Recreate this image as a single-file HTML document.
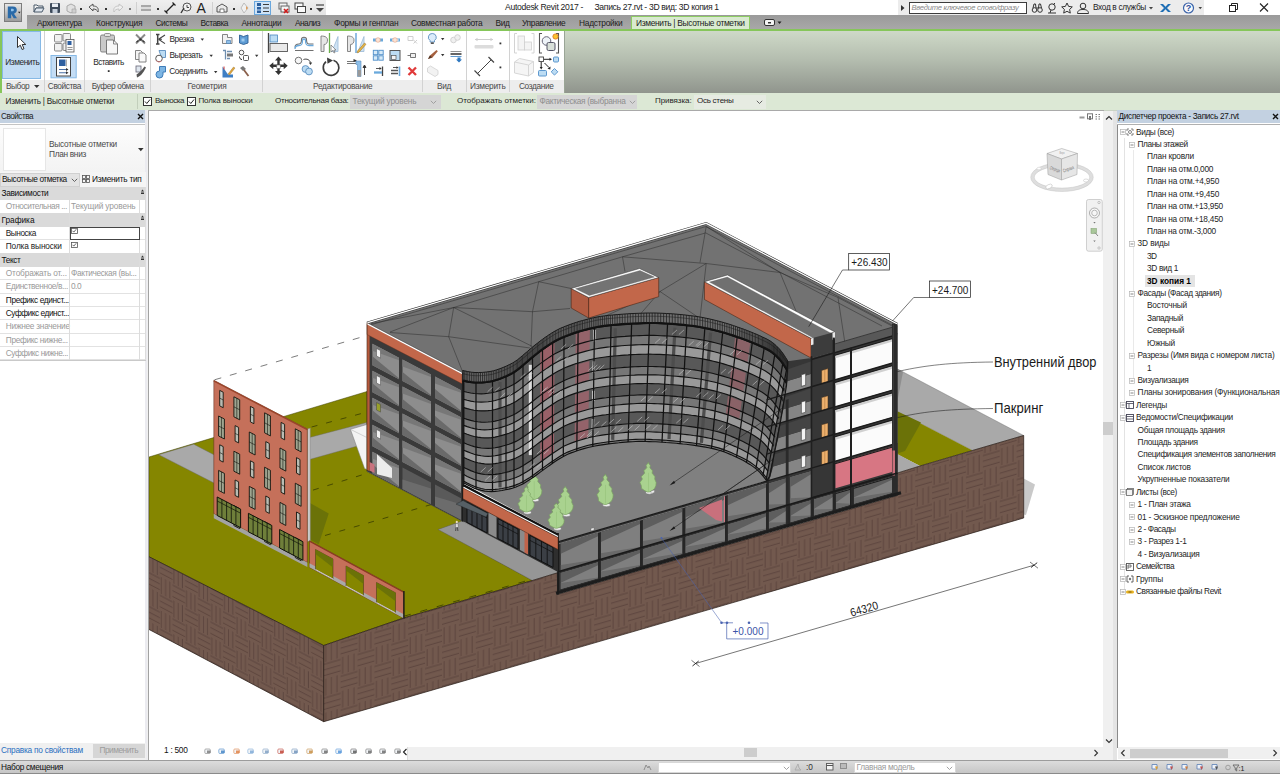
<!DOCTYPE html>
<html lang="ru">
<head>
<meta charset="utf-8">
<title>Autodesk Revit 2017</title>
<style>
*{box-sizing:border-box;margin:0;padding:0}
html,body{width:1280px;height:774px;overflow:hidden;background:#fff}
body{font-family:"Liberation Sans",sans-serif;font-size:8px;color:#1e1e1e;position:relative}
.abs{position:absolute}
.t{position:absolute;white-space:nowrap;line-height:1.12}
svg{overflow:visible}
</style>
</head>
<body>
<svg class="abs" style="left:149px;top:110.500px;overflow:hidden" width="954.300" height="636" viewBox="149 110.500 954.300 636">
<polygon points="1023.7,478.0 1035.0,484.0 1026.0,514.5 1023.7,514.0" fill="#c9c9c9" />
<polygon points="149.0,456.5 367.0,391.0 367.0,471.0 463.0,521.0 440.0,529.0 532.5,580.0 403.7,617.5 323.7,645.0 149.0,556.2" fill="#858600" stroke="#3a3d00" stroke-width="0.5" stroke-linejoin="round" />
<polygon points="158.7,454.2 193.7,443.7 214.5,454.6 214.5,482.7" fill="#a9a9a9" stroke="#666" stroke-width="0.4" stroke-linejoin="round" />
<polygon points="309.5,437.0 366.5,422.0 366.5,443.0 309.5,459.0" fill="#a9a9a9" stroke="#666" stroke-width="0.4" stroke-linejoin="round" />
<polygon points="350.4,428.8 366.8,424.0 366.8,469.0 364.6,468.0" fill="#f4f4f4" stroke="#777" stroke-width="0.5" stroke-linejoin="round" />
<polyline points="350.4,428.8 366.8,437.0" fill="none" stroke="#999" stroke-width="0.4" />
<polyline points="311.6,426.5 366.0,411.8" fill="none" stroke="#2d3000" stroke-width="0.7" stroke-dasharray="6 9"/>
<polyline points="313.0,489.6 368.5,472.4" fill="none" stroke="#2d3000" stroke-width="0.7" stroke-dasharray="6 9"/>
<polyline points="325.0,535.0 440.0,501.5" fill="none" stroke="#2d3000" stroke-width="0.7" stroke-dasharray="6 9"/>
<polyline points="404.0,617.0 532.0,580.0" fill="none" stroke="#2d3000" stroke-width="0.7" stroke-dasharray="7 10" transform="translate(0,-1.3)"/>
<polygon points="438.0,529.0 462.0,520.5 557.5,570.0 557.5,572.3 532.5,580.0" fill="#969696" stroke="#555" stroke-width="0.4" stroke-linejoin="round" />
<polygon points="897.5,368.5 1023.7,435.0 972.5,450.0 897.5,411.0" fill="#a9a9a9" stroke="#666" stroke-width="0.4" stroke-linejoin="round" />
<polygon points="897.5,411.0 972.5,450.0 920.0,465.5 897.5,454.0" fill="#858600" />
<polygon points="897.5,411.0 921.0,422.0 905.0,450.5 897.5,453.0" fill="#6b7208" />
<polygon points="897.5,453.5 920.0,465.5 897.5,472.5" fill="#a9a9a9" />
<polygon points="897.5,368.5 903.0,371.5 897.5,400.0" fill="#8e8e8e" />
<defs><pattern id="hR" patternUnits="userSpaceOnUse" width="33.8" height="33.8" patternTransform="matrix(1 -0.291 0 1 323.7 645)"><rect width="33.8" height="33.8" fill="#72594e"/><path d="M2.03 0.00v16.9 M7.66 0.00v16.9 M13.29 0.00v16.9 M16.90 2.03h16.9 M16.90 7.66h16.9 M16.90 13.29h16.9 M0.00 18.93h16.9 M0.00 24.56h16.9 M0.00 30.19h16.9 M18.93 16.90v16.9 M24.56 16.90v16.9 M30.19 16.90v16.9" stroke="#57403a" stroke-width="0.8" fill="none"/></pattern><pattern id="hL" patternUnits="userSpaceOnUse" width="25.2" height="33.8" patternTransform="matrix(1 0.525 0 1 323.7 645)"><rect width="25.2" height="33.8" fill="#72594e"/><path d="M1.51 0.00v16.9 M5.71 0.00v16.9 M9.91 0.00v16.9 M12.60 2.03h12.6 M12.60 7.66h12.6 M12.60 13.29h12.6 M0.00 18.93h12.6 M0.00 24.56h12.6 M0.00 30.19h12.6 M14.11 16.90v16.9 M18.31 16.90v16.9 M22.51 16.90v16.9" stroke="#57403a" stroke-width="0.8" fill="none"/></pattern></defs>
<polygon points="140.0,551.7 323.7,645.0 323.7,721.2 140.0,624.2" fill="url(#hL)" stroke="#241812" stroke-width="0.7" stroke-linejoin="round" />
<polygon points="323.7,645.0 403.7,617.5 532.5,580.0 557.5,572.3 557.5,594.0 897.5,495.0 897.5,472.5 920.0,465.5 972.5,450.0 1023.7,435.0 1023.7,517.5 323.7,721.2" fill="url(#hR)" stroke="#241812" stroke-width="0.7" stroke-linejoin="round" />
<polygon points="310.0,502.5 328.7,513.0 318.7,543.7 310.0,539.0" fill="#6b7208" />
<polygon points="307.3,428.6 310.3,427.6 310.3,540.3 307.3,541.0" fill="#c9c9c9" stroke="#777" stroke-width="0.4" stroke-linejoin="round" />
<polygon points="213.8,379.8 307.3,428.6 307.3,562.0 213.8,513.2" fill="#c5705a" stroke="#5a2a1a" stroke-width="0.5" stroke-linejoin="round" />
<polygon points="213.8,513.2 307.3,562.0 307.3,566.5 213.8,517.7" fill="#a3a3a3" />
<polyline points="213.8,380.4 307.3,429.2" fill="none" stroke="#9a452b" stroke-width="1.4" />
<polygon points="219.7,389.9 223.2,391.7 223.2,407.2 219.7,405.4" fill="#b9bdb4" stroke="#15150f" stroke-width="0.9" stroke-linejoin="round" />
<polyline points="219.7,397.6 223.2,399.5" fill="none" stroke="#15150f" stroke-width="0.6" />
<polygon points="233.9,396.3 239.7,399.3 239.7,419.3 233.9,416.3" fill="#9ea590" stroke="#15150f" stroke-width="0.9" stroke-linejoin="round" />
<polyline points="236.8,397.8 236.8,417.8" fill="none" stroke="#15150f" stroke-width="0.6" />
<polyline points="233.9,406.3 239.7,409.3" fill="none" stroke="#15150f" stroke-width="0.6" />
<polygon points="250.4,405.9 253.9,407.7 253.9,423.2 250.4,421.4" fill="#b9bdb4" stroke="#15150f" stroke-width="0.9" stroke-linejoin="round" />
<polyline points="250.4,413.7 253.9,415.5" fill="none" stroke="#15150f" stroke-width="0.6" />
<polygon points="264.6,412.3 270.4,415.4 270.4,435.4 264.6,432.3" fill="#9ea590" stroke="#15150f" stroke-width="0.9" stroke-linejoin="round" />
<polyline points="267.5,413.8 267.5,433.8" fill="none" stroke="#15150f" stroke-width="0.6" />
<polyline points="264.6,422.3 270.4,425.4" fill="none" stroke="#15150f" stroke-width="0.6" />
<polygon points="281.1,421.9 284.6,423.8 284.6,439.3 281.1,437.4" fill="#b9bdb4" stroke="#15150f" stroke-width="0.9" stroke-linejoin="round" />
<polyline points="281.1,429.7 284.6,431.5" fill="none" stroke="#15150f" stroke-width="0.6" />
<polygon points="295.3,428.3 301.1,431.4 301.1,451.4 295.3,448.3" fill="#9ea590" stroke="#15150f" stroke-width="0.9" stroke-linejoin="round" />
<polyline points="298.2,429.9 298.2,449.9" fill="none" stroke="#15150f" stroke-width="0.6" />
<polyline points="295.3,438.3 301.1,441.4" fill="none" stroke="#15150f" stroke-width="0.6" />
<polygon points="218.6,415.5 224.4,418.5 224.4,438.5 218.6,435.5" fill="#9ea590" stroke="#15150f" stroke-width="0.9" stroke-linejoin="round" />
<polyline points="221.5,417.0 221.5,437.0" fill="none" stroke="#15150f" stroke-width="0.6" />
<polyline points="218.6,425.5 224.4,428.5" fill="none" stroke="#15150f" stroke-width="0.6" />
<polygon points="235.1,425.1 238.6,426.9 238.6,442.4 235.1,440.6" fill="#b9bdb4" stroke="#15150f" stroke-width="0.9" stroke-linejoin="round" />
<polyline points="235.1,432.9 238.6,434.7" fill="none" stroke="#15150f" stroke-width="0.6" />
<polygon points="249.3,431.5 255.1,434.5 255.1,454.5 249.3,451.5" fill="#9ea590" stroke="#15150f" stroke-width="0.9" stroke-linejoin="round" />
<polyline points="252.2,433.0 252.2,453.0" fill="none" stroke="#15150f" stroke-width="0.6" />
<polyline points="249.3,441.5 255.1,444.5" fill="none" stroke="#15150f" stroke-width="0.6" />
<polygon points="265.8,441.1 269.3,443.0 269.3,458.5 265.8,456.6" fill="#b9bdb4" stroke="#15150f" stroke-width="0.9" stroke-linejoin="round" />
<polyline points="265.8,448.9 269.3,450.7" fill="none" stroke="#15150f" stroke-width="0.6" />
<polygon points="280.0,447.5 285.8,450.6 285.8,470.6 280.0,467.5" fill="#9ea590" stroke="#15150f" stroke-width="0.9" stroke-linejoin="round" />
<polyline points="282.9,449.1 282.9,469.1" fill="none" stroke="#15150f" stroke-width="0.6" />
<polyline points="280.0,457.5 285.8,460.6" fill="none" stroke="#15150f" stroke-width="0.6" />
<polygon points="296.5,457.1 300.0,459.0 300.0,474.5 296.5,472.6" fill="#b9bdb4" stroke="#15150f" stroke-width="0.9" stroke-linejoin="round" />
<polyline points="296.5,464.9 300.0,466.7" fill="none" stroke="#15150f" stroke-width="0.6" />
<polygon points="219.7,444.3 223.2,446.1 223.2,461.6 219.7,459.8" fill="#b9bdb4" stroke="#15150f" stroke-width="0.9" stroke-linejoin="round" />
<polyline points="219.7,452.0 223.2,453.9" fill="none" stroke="#15150f" stroke-width="0.6" />
<polygon points="233.9,450.7 239.7,453.7 239.7,473.7 233.9,470.7" fill="#9ea590" stroke="#15150f" stroke-width="0.9" stroke-linejoin="round" />
<polyline points="236.8,452.2 236.8,472.2" fill="none" stroke="#15150f" stroke-width="0.6" />
<polyline points="233.9,460.7 239.7,463.7" fill="none" stroke="#15150f" stroke-width="0.6" />
<polygon points="250.4,460.3 253.9,462.1 253.9,477.6 250.4,475.8" fill="#b9bdb4" stroke="#15150f" stroke-width="0.9" stroke-linejoin="round" />
<polyline points="250.4,468.1 253.9,469.9" fill="none" stroke="#15150f" stroke-width="0.6" />
<polygon points="264.6,466.7 270.4,469.8 270.4,489.8 264.6,486.7" fill="#9ea590" stroke="#15150f" stroke-width="0.9" stroke-linejoin="round" />
<polyline points="267.5,468.2 267.5,488.2" fill="none" stroke="#15150f" stroke-width="0.6" />
<polyline points="264.6,476.7 270.4,479.8" fill="none" stroke="#15150f" stroke-width="0.6" />
<polygon points="281.1,476.3 284.6,478.2 284.6,493.7 281.1,491.8" fill="#b9bdb4" stroke="#15150f" stroke-width="0.9" stroke-linejoin="round" />
<polyline points="281.1,484.1 284.6,485.9" fill="none" stroke="#15150f" stroke-width="0.6" />
<polygon points="295.3,482.7 301.1,485.8 301.1,505.8 295.3,502.7" fill="#9ea590" stroke="#15150f" stroke-width="0.9" stroke-linejoin="round" />
<polyline points="298.2,484.3 298.2,504.3" fill="none" stroke="#15150f" stroke-width="0.6" />
<polyline points="295.3,492.7 301.1,495.8" fill="none" stroke="#15150f" stroke-width="0.6" />
<polygon points="218.6,469.9 224.4,472.9 224.4,492.9 218.6,489.9" fill="#9ea590" stroke="#15150f" stroke-width="0.9" stroke-linejoin="round" />
<polyline points="221.5,471.4 221.5,491.4" fill="none" stroke="#15150f" stroke-width="0.6" />
<polyline points="218.6,479.9 224.4,482.9" fill="none" stroke="#15150f" stroke-width="0.6" />
<polygon points="235.1,479.5 238.6,481.3 238.6,496.8 235.1,495.0" fill="#b9bdb4" stroke="#15150f" stroke-width="0.9" stroke-linejoin="round" />
<polyline points="235.1,487.3 238.6,489.1" fill="none" stroke="#15150f" stroke-width="0.6" />
<polygon points="249.3,485.9 255.1,488.9 255.1,508.9 249.3,505.9" fill="#9ea590" stroke="#15150f" stroke-width="0.9" stroke-linejoin="round" />
<polyline points="252.2,487.4 252.2,507.4" fill="none" stroke="#15150f" stroke-width="0.6" />
<polyline points="249.3,495.9 255.1,498.9" fill="none" stroke="#15150f" stroke-width="0.6" />
<polygon points="265.8,495.5 269.3,497.4 269.3,512.9 265.8,511.0" fill="#b9bdb4" stroke="#15150f" stroke-width="0.9" stroke-linejoin="round" />
<polyline points="265.8,503.3 269.3,505.1" fill="none" stroke="#15150f" stroke-width="0.6" />
<polygon points="280.0,501.9 285.8,505.0 285.8,525.0 280.0,521.9" fill="#9ea590" stroke="#15150f" stroke-width="0.9" stroke-linejoin="round" />
<polyline points="282.9,503.5 282.9,523.5" fill="none" stroke="#15150f" stroke-width="0.6" />
<polyline points="280.0,511.9 285.8,515.0" fill="none" stroke="#15150f" stroke-width="0.6" />
<polygon points="296.5,511.5 300.0,513.4 300.0,528.9 296.5,527.0" fill="#b9bdb4" stroke="#15150f" stroke-width="0.9" stroke-linejoin="round" />
<polyline points="296.5,519.3 300.0,521.1" fill="none" stroke="#15150f" stroke-width="0.6" />
<polygon points="219.7,498.7 223.2,500.5 223.2,516.0 219.7,514.2" fill="#b9bdb4" stroke="#15150f" stroke-width="0.9" stroke-linejoin="round" />
<polyline points="219.7,506.4 223.2,508.3" fill="none" stroke="#15150f" stroke-width="0.6" />
<polygon points="233.9,505.1 239.7,508.1 239.7,528.1 233.9,525.1" fill="#9ea590" stroke="#15150f" stroke-width="0.9" stroke-linejoin="round" />
<polyline points="236.8,506.6 236.8,526.6" fill="none" stroke="#15150f" stroke-width="0.6" />
<polyline points="233.9,515.1 239.7,518.1" fill="none" stroke="#15150f" stroke-width="0.6" />
<polygon points="250.4,514.7 253.9,516.5 253.9,532.0 250.4,530.2" fill="#b9bdb4" stroke="#15150f" stroke-width="0.9" stroke-linejoin="round" />
<polyline points="250.4,522.5 253.9,524.3" fill="none" stroke="#15150f" stroke-width="0.6" />
<polygon points="264.6,521.1 270.4,524.2 270.4,544.2 264.6,541.1" fill="#9ea590" stroke="#15150f" stroke-width="0.9" stroke-linejoin="round" />
<polyline points="267.5,522.6 267.5,542.6" fill="none" stroke="#15150f" stroke-width="0.6" />
<polyline points="264.6,531.1 270.4,534.2" fill="none" stroke="#15150f" stroke-width="0.6" />
<polygon points="281.1,530.7 284.6,532.6 284.6,548.1 281.1,546.2" fill="#b9bdb4" stroke="#15150f" stroke-width="0.9" stroke-linejoin="round" />
<polyline points="281.1,538.5 284.6,540.3" fill="none" stroke="#15150f" stroke-width="0.6" />
<polygon points="295.3,537.1 301.1,540.2 301.1,560.2 295.3,557.1" fill="#9ea590" stroke="#15150f" stroke-width="0.9" stroke-linejoin="round" />
<polyline points="298.2,538.7 298.2,558.7" fill="none" stroke="#15150f" stroke-width="0.6" />
<polyline points="295.3,547.1 301.1,550.2" fill="none" stroke="#15150f" stroke-width="0.6" />
<polygon points="217.2,496.5 240.6,508.7 240.6,527.2 217.2,515.0" fill="#6f7f3a" stroke="#10140a" stroke-width="1.0" stroke-linejoin="round" />
<polyline points="221.9,498.9 221.9,517.4" fill="none" stroke="#10140a" stroke-width="0.8" />
<polyline points="226.6,501.4 226.6,519.9" fill="none" stroke="#10140a" stroke-width="0.8" />
<polyline points="231.3,503.8 231.3,522.3" fill="none" stroke="#10140a" stroke-width="0.8" />
<polyline points="235.9,506.2 235.9,524.7" fill="none" stroke="#10140a" stroke-width="0.8" />
<polyline points="217.2,500.5 240.6,512.7" fill="none" stroke="#10140a" stroke-width="0.7" />
<polygon points="248.4,512.8 271.8,525.0 271.8,543.5 248.4,531.3" fill="#6f7f3a" stroke="#10140a" stroke-width="1.0" stroke-linejoin="round" />
<polyline points="253.1,515.2 253.1,533.7" fill="none" stroke="#10140a" stroke-width="0.8" />
<polyline points="257.7,517.6 257.7,536.1" fill="none" stroke="#10140a" stroke-width="0.8" />
<polyline points="262.4,520.1 262.4,538.6" fill="none" stroke="#10140a" stroke-width="0.8" />
<polyline points="267.1,522.5 267.1,541.0" fill="none" stroke="#10140a" stroke-width="0.8" />
<polyline points="248.4,516.8 271.8,529.0" fill="none" stroke="#10140a" stroke-width="0.7" />
<polygon points="279.6,529.0 302.9,541.2 302.9,559.7 279.6,547.5" fill="#6f7f3a" stroke="#10140a" stroke-width="1.0" stroke-linejoin="round" />
<polyline points="284.2,531.5 284.2,550.0" fill="none" stroke="#10140a" stroke-width="0.8" />
<polyline points="288.9,533.9 288.9,552.4" fill="none" stroke="#10140a" stroke-width="0.8" />
<polyline points="293.6,536.3 293.6,554.8" fill="none" stroke="#10140a" stroke-width="0.8" />
<polyline points="298.3,538.8 298.3,557.3" fill="none" stroke="#10140a" stroke-width="0.8" />
<polyline points="279.6,533.0 302.9,545.2" fill="none" stroke="#10140a" stroke-width="0.7" />
<polygon points="309.5,540.3 403.7,591.2 403.7,617.7 309.5,566.8" fill="#c5705a" stroke="#5a2a1a" stroke-width="0.5" stroke-linejoin="round" />
<polygon points="309.5,562.8 403.7,613.7 403.7,617.7 309.5,566.8" fill="#a9a9a9" />
<polygon points="315.5,549.0 333.0,558.5 333.0,578.5 315.5,569.0" fill="#858600" stroke="#3a2a1a" stroke-width="0.5" stroke-linejoin="round" />
<polygon points="315.5,549.0 333.0,558.5 333.0,567.0 315.5,553.5" fill="#6b7208" />
<polyline points="315.5,569.0 333.0,578.5" fill="none" stroke="#eee" stroke-width="0.8" />
<polygon points="346.0,565.5 363.5,575.0 363.5,595.0 346.0,585.5" fill="#858600" stroke="#3a2a1a" stroke-width="0.5" stroke-linejoin="round" />
<polygon points="346.0,565.5 363.5,575.0 363.5,583.5 346.0,570.0" fill="#6b7208" />
<polyline points="346.0,585.5 363.5,595.0" fill="none" stroke="#eee" stroke-width="0.8" />
<polygon points="376.5,582.0 395.5,592.3 395.5,612.3 376.5,602.0" fill="#858600" stroke="#3a2a1a" stroke-width="0.5" stroke-linejoin="round" />
<polygon points="376.5,582.0 395.5,592.3 395.5,600.8 376.5,586.5" fill="#6b7208" />
<polyline points="376.5,602.0 395.5,612.3" fill="none" stroke="#eee" stroke-width="0.8" />
<polyline points="309.5,540.8 403.7,591.7" fill="none" stroke="#8a3a22" stroke-width="1.2" />
<polyline points="403.9,590.5 403.9,618.0" fill="none" stroke="#1a1a1a" stroke-width="1.4" />
<polyline points="214.5,379.3 367.0,335.0" fill="none" stroke="#444" stroke-width="0.7" stroke-dasharray="7 9"/>
<polygon points="367.0,322.5 706.2,223.0 897.0,323.7 897.0,332.5 835.0,350.5 811.0,357.5 787.7,367.0 787.7,370.5 786.9,369.1 785.7,367.2 784.3,365.0 783.0,363.0 781.7,361.3 780.4,359.6 779.0,358.0 777.5,356.5 776.0,355.0 774.4,353.6 772.8,352.3 771.0,351.0 769.1,349.8 767.1,348.7 764.9,347.6 762.5,346.5 759.9,345.3 757.1,344.0 754.1,342.8 751.0,341.5 747.9,340.3 744.6,339.0 741.2,337.8 737.5,336.5 733.5,335.1 729.2,333.7 724.6,332.3 720.0,331.0 715.2,329.8 710.3,328.6 705.2,327.5 700.0,326.5 694.7,325.7 689.2,325.0 683.6,324.3 678.0,323.8 672.3,323.3 666.5,323.0 660.7,322.7 655.0,322.5 649.4,322.5 643.8,322.6 638.4,322.8 633.0,323.0 627.7,323.3 622.3,323.7 617.2,324.1 612.5,324.5 608.2,324.9 604.4,325.4 600.7,325.9 597.0,326.5 593.3,327.3 589.6,328.1 586.0,329.1 582.5,330.0 579.2,330.9 576.2,331.9 573.1,332.9 570.0,334.0 566.8,335.2 563.5,336.5 560.2,337.9 557.0,339.5 553.9,341.2 550.8,343.1 547.8,345.1 545.0,347.0 542.4,348.9 539.9,350.7 537.5,352.6 535.0,354.5 532.5,356.6 530.0,358.7 527.5,360.9 525.0,363.0 522.5,365.1 520.1,367.2 517.6,369.2 515.0,371.0 512.2,372.7 509.2,374.2 506.1,375.7 503.0,377.0 499.9,378.2 496.7,379.3 493.4,380.3 490.0,381.0 486.3,381.5 482.5,381.9 478.6,382.0 475.0,382.0 471.4,381.7 467.8,381.1 464.7,380.4 462.5,380.0" fill="#727272" />
<polyline points="371.0,324.3 706.0,226.0 893.0,325.0" fill="none" stroke="#2b2b2b" stroke-width="0.5" />
<polyline points="390.0,331.5 453.7,307.0 538.7,281.2 622.5,256.3 705.7,232.4 882.0,325.5" fill="none" stroke="#2b2b2b" stroke-width="0.5" />
<polyline points="453.7,307.0 448.7,336.2 462.5,371.0" fill="none" stroke="#2b2b2b" stroke-width="0.5" />
<polyline points="390.0,332.0 448.7,336.2 530.0,347.5" fill="none" stroke="#2b2b2b" stroke-width="0.5" />
<polyline points="453.7,307.0 532.5,346.0" fill="none" stroke="#2b2b2b" stroke-width="0.5" />
<polyline points="371.0,323.2 453.7,307.0" fill="none" stroke="#2b2b2b" stroke-width="0.5" />
<polyline points="538.7,281.2 532.5,311.2 531.0,346.5" fill="none" stroke="#2b2b2b" stroke-width="0.5" />
<polyline points="532.5,311.2 570.0,308.0" fill="none" stroke="#2b2b2b" stroke-width="0.5" />
<polyline points="538.7,281.2 571.2,288.0" fill="none" stroke="#2b2b2b" stroke-width="0.5" />
<polyline points="622.5,256.3 625.0,271.0" fill="none" stroke="#2b2b2b" stroke-width="0.5" />
<polyline points="622.5,256.3 706.2,263.0 780.0,272.0" fill="none" stroke="#2b2b2b" stroke-width="0.5" />
<polyline points="660.0,291.0 706.2,263.0" fill="none" stroke="#2b2b2b" stroke-width="0.5" />
<polyline points="660.0,291.0 700.0,318.0" fill="none" stroke="#2b2b2b" stroke-width="0.5" />
<polyline points="706.2,263.0 700.0,318.0" fill="none" stroke="#2b2b2b" stroke-width="0.5" />
<polyline points="706.2,226.0 700.0,262.0" fill="none" stroke="#2b2b2b" stroke-width="0.5" />
<polyline points="780.0,272.0 800.0,320.0" fill="none" stroke="#2b2b2b" stroke-width="0.5" />
<polyline points="780.0,272.0 838.0,297.0" fill="none" stroke="#2b2b2b" stroke-width="0.5" />
<polyline points="838.0,297.0 845.0,343.0" fill="none" stroke="#2b2b2b" stroke-width="0.5" />
<polyline points="838.0,297.0 893.0,326.0" fill="none" stroke="#2b2b2b" stroke-width="0.5" />
<polyline points="706.2,226.0 780.0,272.0" fill="none" stroke="#2b2b2b" stroke-width="0.5" />
<polyline points="740.0,300.0 800.0,320.0" fill="none" stroke="#2b2b2b" stroke-width="0.5" />
<polyline points="532.5,311.2 453.7,307.0" fill="none" stroke="#2b2b2b" stroke-width="0.5" />
<polyline points="660.0,291.0 640.0,314.0" fill="none" stroke="#2b2b2b" stroke-width="0.5" />
<polyline points="660.0,291.0 600.0,318.0" fill="none" stroke="#2b2b2b" stroke-width="0.5" />
<polyline points="367.0,322.3 706.2,222.8 897.3,323.5" fill="none" stroke="#2a2a2a" stroke-width="2.4" stroke-linejoin="miter"/>
<polyline points="367.0,322.3 706.2,222.8 897.3,323.5" fill="none" stroke="#ffffff" stroke-width="1.3" stroke-linejoin="miter"/>
<polygon points="367.0,322.5 462.5,372.5 462.5,521.0 367.0,471.0" fill="#3a3a3a" />
<polygon points="372.4,343.3 399.0,357.3 399.0,378.8 372.4,364.8" fill="#8d8d8d" />
<polygon points="372.4,355.8 399.0,377.8 399.0,378.8 372.4,364.8" fill="#6a6a6a" />
<polygon points="372.4,343.3 399.0,357.3 399.0,359.8 372.4,350.3" fill="#777" />
<polygon points="402.5,359.1 431.0,374.0 431.0,395.5 402.5,380.6" fill="#8d8d8d" />
<polygon points="402.5,371.6 431.0,394.5 431.0,395.5 402.5,380.6" fill="#6a6a6a" />
<polygon points="402.5,359.1 431.0,374.0 431.0,376.5 402.5,366.1" fill="#777" />
<polygon points="435.0,376.1 461.0,389.7 461.0,411.2 435.0,397.6" fill="#8d8d8d" />
<polygon points="435.0,388.6 461.0,410.2 461.0,411.2 435.0,397.6" fill="#6a6a6a" />
<polygon points="435.0,376.1 461.0,389.7 461.0,392.2 435.0,383.1" fill="#777" />
<polygon points="376.5,348.0 380.5,350.1 380.5,357.6 376.5,355.5" fill="#f2f2f2" stroke="#444" stroke-width="0.5" stroke-linejoin="round" />
<polygon points="372.4,370.3 399.0,384.3 399.0,405.8 372.4,391.8" fill="#8d8d8d" />
<polygon points="372.4,382.8 399.0,404.8 399.0,405.8 372.4,391.8" fill="#6a6a6a" />
<polygon points="372.4,370.3 399.0,384.3 399.0,386.8 372.4,377.3" fill="#777" />
<polygon points="402.5,386.1 431.0,401.0 431.0,422.5 402.5,407.6" fill="#8d8d8d" />
<polygon points="402.5,398.6 431.0,421.5 431.0,422.5 402.5,407.6" fill="#6a6a6a" />
<polygon points="402.5,386.1 431.0,401.0 431.0,403.5 402.5,393.1" fill="#777" />
<polygon points="435.0,403.1 461.0,416.7 461.0,438.2 435.0,424.6" fill="#8d8d8d" />
<polygon points="435.0,415.6 461.0,437.2 461.0,438.2 435.0,424.6" fill="#6a6a6a" />
<polygon points="435.0,403.1 461.0,416.7 461.0,419.2 435.0,410.1" fill="#777" />
<polygon points="376.5,375.0 380.5,377.1 380.5,384.6 376.5,382.5" fill="#f2f2f2" stroke="#444" stroke-width="0.5" stroke-linejoin="round" />
<polygon points="372.4,397.3 399.0,411.3 399.0,432.8 372.4,418.8" fill="#8d8d8d" />
<polygon points="372.4,409.8 399.0,431.8 399.0,432.8 372.4,418.8" fill="#6a6a6a" />
<polygon points="372.4,397.3 399.0,411.3 399.0,413.8 372.4,404.3" fill="#777" />
<polygon points="402.5,413.1 431.0,428.0 431.0,449.5 402.5,434.6" fill="#8d8d8d" />
<polygon points="402.5,425.6 431.0,448.5 431.0,449.5 402.5,434.6" fill="#6a6a6a" />
<polygon points="402.5,413.1 431.0,428.0 431.0,430.5 402.5,420.1" fill="#777" />
<polygon points="435.0,430.1 461.0,443.7 461.0,465.2 435.0,451.6" fill="#8d8d8d" />
<polygon points="435.0,442.6 461.0,464.2 461.0,465.2 435.0,451.6" fill="#6a6a6a" />
<polygon points="435.0,430.1 461.0,443.7 461.0,446.2 435.0,437.1" fill="#777" />
<polygon points="376.5,402.0 380.5,404.1 380.5,411.6 376.5,409.5" fill="#98a02a" stroke="#444" stroke-width="0.5" stroke-linejoin="round" />
<polygon points="372.4,424.3 399.0,438.3 399.0,459.8 372.4,445.8" fill="#8d8d8d" />
<polygon points="372.4,436.8 399.0,458.8 399.0,459.8 372.4,445.8" fill="#6a6a6a" />
<polygon points="372.4,424.3 399.0,438.3 399.0,440.8 372.4,431.3" fill="#777" />
<polygon points="402.5,440.1 431.0,455.0 431.0,476.5 402.5,461.6" fill="#8d8d8d" />
<polygon points="402.5,452.6 431.0,475.5 431.0,476.5 402.5,461.6" fill="#6a6a6a" />
<polygon points="402.5,440.1 431.0,455.0 431.0,457.5 402.5,447.1" fill="#777" />
<polygon points="435.0,457.1 461.0,470.7 461.0,492.2 435.0,478.6" fill="#8d8d8d" />
<polygon points="435.0,469.6 461.0,491.2 461.0,492.2 435.0,478.6" fill="#6a6a6a" />
<polygon points="435.0,457.1 461.0,470.7 461.0,473.2 435.0,464.1" fill="#777" />
<polygon points="376.5,429.0 380.5,431.1 380.5,438.6 376.5,436.5" fill="#f2f2f2" stroke="#444" stroke-width="0.5" stroke-linejoin="round" />
<polygon points="372.4,451.3 399.0,465.3 399.0,486.8 372.4,472.8" fill="#8d8d8d" />
<polygon points="372.4,463.8 399.0,485.8 399.0,486.8 372.4,472.8" fill="#6a6a6a" />
<polygon points="372.4,451.3 399.0,465.3 399.0,467.8 372.4,458.3" fill="#777" />
<polygon points="402.5,467.1 431.0,482.0 431.0,503.5 402.5,488.6" fill="#5a5a5a" />
<polygon points="402.5,479.1 431.0,488.0 431.0,503.5 402.5,488.6" fill="#6c6c6c" />
<polygon points="435.0,484.1 461.0,497.7 461.0,519.2 435.0,505.6" fill="#5a5a5a" />
<polygon points="435.0,496.1 461.0,503.7 461.0,519.2 435.0,505.6" fill="#6c6c6c" />
<polygon points="377.0,453.7 392.0,467.6 392.0,477.6 377.0,473.7" fill="#ececec" />
<polygon points="369.5,461.5 374.5,464.0 374.5,472.5 369.5,470.0" fill="#c9737f" />
<polygon points="367.0,322.5 369.6,323.8 369.6,470.5 367.0,469.5" fill="#b65a3c" />
<polygon points="367.0,323.5 462.5,373.5 462.5,383.5 367.0,334.0" fill="#c2674a" stroke="#5a2a1a" stroke-width="0.4" stroke-linejoin="round" />
<polyline points="367.0,323.1 462.5,373.1" fill="none" stroke="#ffffff" stroke-width="1.6" />
<polyline points="367.0,322.1 462.5,372.1" fill="none" stroke="#333" stroke-width="0.4" />
<polyline points="367.0,322.0 367.0,470.5" fill="none" stroke="#4a2a1a" stroke-width="0.6" />
<polyline points="463.0,372.0 463.0,521.0" fill="none" stroke="#1d1d1d" stroke-width="2.2" />
<polygon points="571.2,288.0 588.7,297.0 588.7,317.5 571.2,307.5" fill="#b05c42" stroke="#3a1a0a" stroke-width="0.5" stroke-linejoin="round" />
<polygon points="588.7,297.0 658.7,277.0 658.7,296.2 588.7,317.5" fill="#c2674a" stroke="#3a1a0a" stroke-width="0.5" stroke-linejoin="round" />
<polygon points="571.2,288.0 588.7,297.0 658.7,277.0 639.5,268.0" fill="#ffffff" stroke="#333" stroke-width="0.5" stroke-linejoin="round" />
<polygon points="575.5,288.3 589.3,295.0 654.5,276.6 640.0,270.0" fill="#737373" stroke="#555" stroke-width="0.3" stroke-linejoin="round" />
<polygon points="704.5,281.2 811.0,337.8 811.0,357.5 704.5,299.0" fill="#c2674a" stroke="#3a1a0a" stroke-width="0.5" stroke-linejoin="round" />
<polygon points="704.5,281.2 727.5,274.5 835.0,331.5 811.0,337.8" fill="#ffffff" stroke="#333" stroke-width="0.5" stroke-linejoin="round" />
<polygon points="709.5,281.6 727.3,276.6 831.0,332.7 813.5,337.6" fill="#707070" stroke="#555" stroke-width="0.3" stroke-linejoin="round" />
<polygon points="463.8,482.5 463.8,482.5 465.7,483.5 468.6,485.1 471.8,486.7 475.0,488.0 478.0,489.0 481.0,489.9 484.2,490.6 487.5,491.0 491.0,491.1 494.6,490.9 498.3,490.6 502.0,490.0 505.9,489.3 509.9,488.4 513.8,487.3 517.5,486.0 520.8,484.5 523.9,482.8 526.9,481.0 530.0,479.0 533.2,476.9 536.4,474.5 539.5,472.2 542.5,470.0 545.2,468.0 547.8,466.2 550.3,464.3 553.0,462.5 555.9,460.6 558.8,458.6 561.9,456.7 565.0,455.0 568.1,453.6 571.3,452.3 574.6,451.1 578.0,450.0 581.4,448.9 584.8,447.9 588.5,446.9 592.5,446.0 596.9,445.2 601.7,444.4 606.8,443.7 612.0,443.0 617.6,442.4 623.5,441.8 629.4,441.3 635.0,441.0 640.3,440.9 645.3,441.0 650.2,441.1 655.0,441.3 659.5,441.5 663.8,441.8 668.0,442.1 672.5,442.5 677.3,442.9 682.2,443.4 687.2,443.9 692.0,444.5 696.7,445.2 701.4,445.9 705.9,446.7 710.0,447.5 713.6,448.3 716.9,449.1 719.9,450.0 723.0,451.0 726.1,452.1 729.1,453.4 732.1,454.7 735.0,456.0 737.9,457.3 740.7,458.7 743.4,460.1 746.0,461.5 748.5,463.0 750.8,464.5 753.0,466.0 755.0,467.5 756.7,468.9 758.2,470.2 759.6,471.6 761.0,473.0 762.4,474.7 763.9,476.6 765.1,478.3 766.0,479.5 766.0,480.5 558.0,541.5 558.0,533.0" fill="#808080" />
<ellipse cx="535.2" cy="499.5" rx="3.8" ry="1.7" fill="#ededed" stroke="#666" stroke-width=".4"/>
<polygon points="533.7,471.0 536.0,473.8 535.6,476.0 538.2,478.8 537.8,481.1 540.7,484.4 540.4,486.7 541.9,490.0 541.6,492.8 540.3,495.6 537.6,497.9 534.9,499.0 532.9,499.0 530.7,497.9 527.3,495.6 527.0,492.8 525.6,490.0 528.1,486.7 526.9,484.4 530.5,481.1 529.5,478.8 532.5,476.0 531.8,473.8 534.2,471.0" fill="#a9d28f" stroke="#7aa262" stroke-width=".7" stroke-linejoin="round"/>
<polyline points="534.2,480.8 534.2,498.0" fill="none" stroke="#8fbf75" stroke-width="0.5" />
<ellipse cx="527.5" cy="512.0" rx="3.8" ry="1.7" fill="#ededed" stroke="#666" stroke-width=".4"/>
<polygon points="526.0,486.0 528.3,488.6 527.9,490.6 530.5,493.1 530.1,495.2 533.0,498.2 532.7,500.3 534.2,503.3 533.9,505.9 532.6,508.4 529.9,510.5 527.2,511.5 525.2,511.5 523.0,510.5 519.6,508.4 519.3,505.9 517.9,503.3 520.4,500.3 519.2,498.2 522.8,495.2 521.8,493.1 524.8,490.6 524.1,488.6 526.5,486.0" fill="#a9d28f" stroke="#7aa262" stroke-width=".7" stroke-linejoin="round"/>
<polyline points="526.5,494.9 526.5,510.5" fill="none" stroke="#8fbf75" stroke-width="0.5" />
<ellipse cx="566.5" cy="514.5" rx="3.8" ry="1.7" fill="#ededed" stroke="#666" stroke-width=".4"/>
<polygon points="565.0,486.0 567.3,488.8 566.9,491.0 569.5,493.8 569.1,496.1 572.0,499.4 571.7,501.7 573.2,505.0 572.9,507.8 571.6,510.6 568.9,512.9 566.2,514.0 564.2,514.0 562.0,512.9 558.6,510.6 558.3,507.8 556.9,505.0 559.4,501.7 558.2,499.4 561.8,496.1 560.8,493.8 563.8,491.0 563.1,488.8 565.5,486.0" fill="#a9d28f" stroke="#7aa262" stroke-width=".7" stroke-linejoin="round"/>
<polyline points="565.5,495.8 565.5,513.0" fill="none" stroke="#8fbf75" stroke-width="0.5" />
<ellipse cx="557.5" cy="528.2" rx="3.8" ry="1.7" fill="#ededed" stroke="#666" stroke-width=".4"/>
<polygon points="556.0,502.5 558.3,505.0 557.9,507.0 560.5,509.6 560.1,511.6 563.0,514.6 562.7,516.6 564.2,519.6 563.9,522.2 562.6,524.7 559.9,526.7 557.2,527.7 555.2,527.7 553.0,526.7 549.6,524.7 549.3,522.2 547.9,519.6 550.4,516.6 549.2,514.6 552.8,511.6 551.8,509.6 554.8,507.0 554.1,505.0 556.5,502.5" fill="#a9d28f" stroke="#7aa262" stroke-width=".7" stroke-linejoin="round"/>
<polyline points="556.5,511.3 556.5,526.7" fill="none" stroke="#8fbf75" stroke-width="0.5" />
<ellipse cx="606.5" cy="504.5" rx="3.8" ry="1.7" fill="#ededed" stroke="#666" stroke-width=".4"/>
<polygon points="605.0,473.7 607.3,476.7 606.9,479.2 609.5,482.2 609.1,484.6 612.0,488.2 611.7,490.7 613.2,494.3 612.9,497.3 611.6,500.4 608.9,502.8 606.2,504.0 604.2,504.0 602.0,502.8 598.6,500.4 598.3,497.3 596.9,494.3 599.4,490.7 598.2,488.2 601.8,484.6 600.8,482.2 603.8,479.2 603.1,476.7 605.5,473.7" fill="#a9d28f" stroke="#7aa262" stroke-width=".7" stroke-linejoin="round"/>
<polyline points="605.5,484.3 605.5,503.0" fill="none" stroke="#8fbf75" stroke-width="0.5" />
<ellipse cx="649.5" cy="492.0" rx="3.8" ry="1.7" fill="#ededed" stroke="#666" stroke-width=".4"/>
<polygon points="648.0,462.0 650.3,464.9 649.9,467.3 652.5,470.3 652.1,472.6 655.0,476.2 654.7,478.5 656.2,482.1 655.9,485.0 654.6,488.0 651.9,490.3 649.2,491.5 647.2,491.5 645.0,490.3 641.6,488.0 641.3,485.0 639.9,482.1 642.4,478.5 641.2,476.2 644.8,472.6 643.8,470.3 646.8,467.3 646.1,464.9 648.5,462.0" fill="#a9d28f" stroke="#7aa262" stroke-width=".7" stroke-linejoin="round"/>
<polyline points="648.5,472.3 648.5,490.5" fill="none" stroke="#8fbf75" stroke-width="0.5" />
<polygon points="591.0,528.0 594.0,527.2 594.0,529.5 591.0,530.3" fill="#eee" stroke="#555" stroke-width="0.3" stroke-linejoin="round" />
<polygon points="651.0,490.5 654.5,489.5 654.5,492.0 651.0,493.0" fill="#eee" stroke="#555" stroke-width="0.3" stroke-linejoin="round" />
<polygon points="463.8,380.2 467.2,380.9 470.7,381.5 474.2,381.9 477.7,382.0 481.2,381.9 484.6,381.7 488.1,381.3 491.6,380.7 495.1,379.8 498.6,378.7 502.0,377.4 505.5,375.9 509.0,374.3 512.5,372.5 516.0,370.3 519.4,367.7 522.9,364.8 526.4,361.8 529.9,358.8 533.4,355.9 536.8,353.0 540.3,350.4 543.9,347.8 547.4,345.4 551.0,343.0 554.5,340.9 558.0,339.0 561.6,337.3 565.1,335.9 568.7,334.5 572.2,333.2 575.7,332.0 579.3,330.9 582.8,329.9 586.4,328.9 589.9,328.0 593.5,327.2 597.0,326.5 600.5,325.9 604.1,325.4 607.6,325.0 611.2,324.6 614.7,324.3 618.3,324.0 621.9,323.7 625.5,323.4 629.1,323.2 632.7,323.0 636.3,322.9 639.9,322.7 643.5,322.6 647.1,322.5 650.7,322.5 654.3,322.5 657.9,322.6 661.5,322.7 665.0,322.9 668.6,323.1 672.2,323.3 675.8,323.6 679.4,323.9 683.0,324.3 686.6,324.7 690.2,325.1 693.8,325.6 697.4,326.1 701.0,326.7 704.8,327.4 708.6,328.2 712.4,329.1 716.2,330.0 720.0,331.0 723.8,332.1 727.6,333.2 731.4,334.5 735.2,335.7 739.1,337.0 742.9,338.4 746.7,339.8 750.5,341.3 754.3,342.8 758.1,344.5 761.9,346.2 765.6,348.0 769.3,350.0 773.0,352.5 776.7,355.7 780.4,359.7 784.1,364.7 787.9,370.5 787.7,367.0 787.9,370.7 786.5,385.0 781.4,416.0 776.0,444.7 769.8,475.7 766.5,481.0 766.0,479.5 766.1,479.5 762.9,475.3 759.6,471.6 756.4,468.6 753.1,466.1 749.9,463.9 746.6,461.9 743.4,460.1 740.3,458.5 737.1,457.0 733.9,455.5 730.8,454.1 727.6,452.8 724.5,451.5 721.3,450.4 718.1,449.5 715.0,448.6 711.8,447.9 708.7,447.2 705.5,446.6 702.3,446.1 699.2,445.6 696.0,445.1 692.9,444.6 689.5,444.2 686.2,443.8 682.8,443.5 679.4,443.1 676.1,442.8 672.7,442.5 669.3,442.2 666.0,442.0 662.6,441.7 659.2,441.5 655.9,441.3 652.5,441.2 649.1,441.1 645.8,441.0 642.4,440.9 639.0,440.9 635.7,441.0 632.3,441.2 628.9,441.4 625.6,441.6 622.2,441.9 618.8,442.3 615.5,442.6 612.1,443.0 608.7,443.4 605.3,443.9 601.9,444.4 598.4,444.9 595.0,445.5 591.6,446.2 588.2,447.0 584.8,447.9 581.3,448.9 577.9,450.0 574.5,451.2 571.1,452.4 567.7,453.8 564.3,455.4 560.8,457.4 557.4,459.5 554.0,461.8 550.6,464.2 547.2,466.6 543.7,469.1 540.3,471.6 536.8,474.2 533.4,476.7 529.9,479.1 526.4,481.3 522.9,483.4 519.4,485.1 516.0,486.5 512.5,487.7 509.0,488.6 505.5,489.3 502.0,490.0 498.6,490.5 495.1,490.9 491.6,491.1 488.1,491.0 484.6,490.6 481.2,489.9 477.7,488.9 474.2,487.7 470.7,486.1 467.2,484.3 463.8,482.5" fill="#5c5c5c" />
<polygon points="463.8,380.2 467.2,380.9 470.7,381.5 474.2,381.9 477.7,382.0 481.2,381.9 484.6,381.7 488.1,381.3 491.6,380.7 495.1,379.8 498.6,378.7 502.0,377.4 505.5,375.9 509.0,374.3 512.5,372.5 516.0,370.3 519.4,367.7 522.9,364.8 526.4,361.8 529.9,358.8 533.4,355.9 536.8,353.0 540.3,350.4 543.9,347.8 547.4,345.4 551.0,343.0 554.5,340.9 558.0,339.0 561.6,337.3 565.1,335.9 568.7,334.5 572.2,333.2 575.7,332.0 579.3,330.9 582.8,329.9 586.4,328.9 589.9,328.0 593.5,327.2 597.0,326.5 600.5,325.9 604.1,325.4 607.6,325.0 611.2,324.6 614.7,324.3 618.3,324.0 621.9,323.7 625.5,323.4 629.1,323.2 632.7,323.0 636.3,322.9 639.9,322.7 643.5,322.6 647.1,322.5 650.7,322.5 654.3,322.5 657.9,322.6 661.5,322.7 665.0,322.9 668.6,323.1 672.2,323.3 675.8,323.6 679.4,323.9 683.0,324.3 686.6,324.7 690.2,325.1 693.8,325.6 697.4,326.1 701.0,326.7 704.8,327.4 708.6,328.2 712.4,329.1 716.2,330.0 720.0,331.0 723.8,332.1 727.6,333.2 731.4,334.5 735.2,335.7 739.1,337.0 742.9,338.4 746.7,339.8 750.5,341.3 754.3,342.8 758.1,344.5 761.9,346.2 765.6,348.0 769.3,350.0 773.0,352.5 776.7,355.7 780.4,359.7 784.1,364.7 787.9,370.5 787.7,367.0 785.4,378.8 785.6,381.9 781.9,376.3 778.3,371.5 774.6,367.6 770.9,364.4 767.3,361.9 763.6,360.0 759.9,358.2 756.2,356.4 752.5,354.8 748.7,353.3 745.0,351.8 741.3,350.4 737.5,349.1 733.8,347.8 730.0,346.5 726.3,345.4 722.6,344.3 718.8,343.2 715.1,342.3 711.4,341.4 707.6,340.5 703.9,339.8 700.2,339.1 696.6,338.5 693.0,338.0 689.4,337.5 685.9,337.1 682.3,336.7 678.7,336.4 675.1,336.1 671.6,335.8 668.0,335.5 664.4,335.3 660.9,335.2 657.3,335.0 653.7,334.9 650.2,334.9 646.6,334.9 643.0,335.0 639.4,335.1 635.9,335.3 632.3,335.4 628.7,335.6 625.2,335.9 621.6,336.1 618.0,336.4 614.5,336.8 610.9,337.1 607.4,337.5 603.8,337.9 600.3,338.4 596.8,339.0 593.3,339.7 589.7,340.5 586.2,341.4 582.7,342.4 579.1,343.4 575.6,344.5 572.1,345.7 568.6,347.0 565.0,348.4 561.5,349.9 558.0,351.7 554.4,353.6 550.9,355.8 547.4,358.1 543.9,360.5 540.3,363.1 536.8,365.8 533.4,368.5 529.9,371.4 526.4,374.4 522.9,377.2 519.4,380.0 516.0,382.5 512.5,384.6 509.0,386.3 505.5,387.8 502.0,389.2 498.6,390.4 495.1,391.4 491.6,392.2 488.1,392.8 484.6,393.1 481.2,393.3 477.7,393.2 474.2,393.0 470.7,392.5 467.2,391.8 463.8,391.0" fill="#585858" />
<polygon points="463.8,391.0 467.2,391.8 470.7,392.5 474.2,393.0 477.7,393.2 481.2,393.3 484.6,393.1 488.1,392.8 491.6,392.2 495.1,391.4 498.6,390.4 502.0,389.2 505.5,387.8 509.0,386.3 512.5,384.6 516.0,382.5 519.4,380.0 522.9,377.2 526.4,374.4 529.9,371.4 533.4,368.5 536.8,365.8 540.3,363.1 543.9,360.5 547.4,358.1 550.9,355.8 554.4,353.6 558.0,351.7 561.5,349.9 565.0,348.4 568.6,347.0 572.1,345.7 575.6,344.5 579.1,343.4 582.7,342.4 586.2,341.4 589.7,340.5 593.3,339.7 596.8,339.0 600.3,338.4 603.8,337.9 607.4,337.5 610.9,337.1 614.5,336.8 618.0,336.4 621.6,336.1 625.2,335.9 628.7,335.6 632.3,335.4 635.9,335.3 639.4,335.1 643.0,335.0 646.6,334.9 650.2,334.9 653.7,334.9 657.3,335.0 660.9,335.2 664.4,335.3 668.0,335.5 671.6,335.8 675.1,336.1 678.7,336.4 682.3,336.7 685.9,337.1 689.4,337.5 693.0,338.0 696.6,338.5 700.2,339.1 703.9,339.8 707.6,340.5 711.4,341.4 715.1,342.3 718.8,343.2 722.6,344.3 726.3,345.4 730.0,346.5 733.8,347.8 737.5,349.1 741.3,350.4 745.0,351.8 748.7,353.3 752.5,354.8 756.2,356.4 759.9,358.2 763.6,360.0 767.3,361.9 770.9,364.4 774.6,367.6 778.3,371.5 781.9,376.3 785.6,381.9 785.4,378.8 783.8,387.5 783.9,390.3 780.3,384.8 776.7,380.1 773.0,376.3 769.4,373.2 765.8,370.7 762.2,368.7 758.5,366.9 754.8,365.2 751.1,363.6 747.4,362.1 743.8,360.6 740.1,359.2 736.4,357.9 732.7,356.6 729.0,355.4 725.3,354.3 721.7,353.2 718.0,352.2 714.3,351.2 710.6,350.4 706.9,349.6 703.2,348.8 699.5,348.2 696.0,347.6 692.4,347.1 688.9,346.6 685.3,346.2 681.7,345.9 678.2,345.5 674.6,345.2 671.1,344.9 667.5,344.7 664.0,344.5 660.4,344.3 656.9,344.2 653.3,344.1 649.8,344.0 646.2,344.1 642.7,344.1 639.1,344.2 635.6,344.4 632.0,344.6 628.5,344.8 624.9,345.0 621.4,345.3 617.8,345.6 614.3,345.9 610.7,346.3 607.2,346.6 603.7,347.1 600.2,347.6 596.6,348.2 593.1,348.9 589.6,349.7 586.1,350.6 582.6,351.6 579.0,352.6 575.5,353.7 572.0,354.9 568.5,356.2 565.0,357.6 561.4,359.2 557.9,360.9 554.4,362.9 550.9,365.1 547.4,367.4 543.8,369.9 540.3,372.4 536.8,375.1 533.4,377.9 529.9,380.7 526.4,383.6 522.9,386.4 519.4,389.1 516.0,391.5 512.5,393.5 509.0,395.1 505.5,396.6 502.0,397.9 498.6,399.0 495.1,400.0 491.6,400.7 488.1,401.2 484.6,401.5 481.2,401.6 477.7,401.5 474.2,401.2 470.7,400.6 467.2,399.8 463.8,398.9" fill="#777777" />
<polygon points="463.8,398.9 467.2,399.8 470.7,400.6 474.2,401.2 477.7,401.5 481.2,401.6 484.6,401.5 488.1,401.2 491.6,400.7 495.1,400.0 498.6,399.0 502.0,397.9 505.5,396.6 509.0,395.1 512.5,393.5 516.0,391.5 519.4,389.1 522.9,386.4 526.4,383.6 529.9,380.7 533.4,377.9 536.8,375.1 540.3,372.4 543.8,369.9 547.4,367.4 550.9,365.1 554.4,362.9 557.9,360.9 561.4,359.2 565.0,357.6 568.5,356.2 572.0,354.9 575.5,353.7 579.0,352.6 582.6,351.6 586.1,350.6 589.6,349.7 593.1,348.9 596.6,348.2 600.2,347.6 603.7,347.1 607.2,346.6 610.7,346.3 614.3,345.9 617.8,345.6 621.4,345.3 624.9,345.0 628.5,344.8 632.0,344.6 635.6,344.4 639.1,344.2 642.7,344.1 646.2,344.1 649.8,344.0 653.3,344.1 656.9,344.2 660.4,344.3 664.0,344.5 667.5,344.7 671.1,344.9 674.6,345.2 678.2,345.5 681.7,345.9 685.3,346.2 688.9,346.6 692.4,347.1 696.0,347.6 699.5,348.2 703.2,348.8 706.9,349.6 710.6,350.4 714.3,351.2 718.0,352.2 721.7,353.2 725.3,354.3 729.0,355.4 732.7,356.6 736.4,357.9 740.1,359.2 743.8,360.6 747.4,362.1 751.1,363.6 754.8,365.2 758.5,366.9 762.2,368.7 765.8,370.7 769.4,373.2 773.0,376.3 776.7,380.1 780.3,384.8 783.9,390.3 783.8,387.5 782.0,396.6 782.1,399.2 778.6,393.8 775.0,389.1 771.4,385.4 767.8,382.4 764.2,379.9 760.6,377.9 757.0,376.2 753.4,374.5 749.7,372.9 746.1,371.3 742.5,369.9 738.8,368.5 735.2,367.2 731.6,365.9 727.9,364.7 724.3,363.6 720.7,362.5 717.0,361.6 713.4,360.7 709.8,359.9 706.2,359.1 702.5,358.4 698.9,357.7 695.3,357.2 691.8,356.7 688.3,356.2 684.7,355.8 681.2,355.5 677.7,355.1 674.1,354.8 670.6,354.5 667.1,354.3 663.5,354.1 660.0,353.9 656.5,353.8 652.9,353.7 649.4,353.6 645.8,353.7 642.3,353.7 638.8,353.8 635.2,354.0 631.7,354.1 628.2,354.4 624.6,354.6 621.1,354.9 617.6,355.2 614.0,355.5 610.5,355.9 607.0,356.3 603.5,356.7 600.0,357.2 596.5,357.8 593.0,358.5 589.5,359.3 585.9,360.2 582.4,361.2 578.9,362.2 575.4,363.3 571.9,364.6 568.4,365.9 564.9,367.3 561.4,368.9 557.9,370.7 554.4,372.7 550.9,374.9 547.3,377.3 543.8,379.7 540.3,382.2 536.8,384.9 533.4,387.6 529.9,390.4 526.4,393.2 522.9,396.0 519.4,398.6 516.0,400.9 512.5,402.8 509.0,404.4 505.5,405.8 502.0,407.0 498.6,408.1 495.1,409.0 491.6,409.7 488.1,410.1 484.6,410.3 481.2,410.3 477.7,410.1 474.2,409.7 470.7,409.0 467.2,408.1 463.8,407.1" fill="#999999" />
<polygon points="463.8,407.1 467.2,408.1 470.7,409.0 474.2,409.7 477.7,410.1 481.2,410.3 484.6,410.3 488.1,410.1 491.6,409.7 495.1,409.0 498.6,408.1 502.0,407.0 505.5,405.8 509.0,404.4 512.5,402.8 516.0,400.9 519.4,398.6 522.9,396.0 526.4,393.2 529.9,390.4 533.4,387.6 536.8,384.9 540.3,382.2 543.8,379.7 547.3,377.3 550.9,374.9 554.4,372.7 557.9,370.7 561.4,368.9 564.9,367.3 568.4,365.9 571.9,364.6 575.4,363.3 578.9,362.2 582.4,361.2 585.9,360.2 589.5,359.3 593.0,358.5 596.5,357.8 600.0,357.2 603.5,356.7 607.0,356.3 610.5,355.9 614.0,355.5 617.6,355.2 621.1,354.9 624.6,354.6 628.2,354.4 631.7,354.1 635.2,354.0 638.8,353.8 642.3,353.7 645.8,353.7 649.4,353.6 652.9,353.7 656.5,353.8 660.0,353.9 663.5,354.1 667.1,354.3 670.6,354.5 674.1,354.8 677.7,355.1 681.2,355.5 684.7,355.8 688.3,356.2 691.8,356.7 695.3,357.2 698.9,357.7 702.5,358.4 706.2,359.1 709.8,359.9 713.4,360.7 717.0,361.6 720.7,362.5 724.3,363.6 727.9,364.7 731.6,365.9 735.2,367.2 738.8,368.5 742.5,369.9 746.1,371.3 749.7,372.9 753.4,374.5 757.0,376.2 760.6,377.9 764.2,379.9 767.8,382.4 771.4,385.4 775.0,389.1 778.6,393.8 782.1,399.2 782.0,396.6 779.7,408.3 779.9,410.5 776.3,405.3 772.8,400.8 769.3,397.2 765.7,394.2 762.2,391.8 758.6,389.8 755.1,388.0 751.5,386.3 748.0,384.7 744.4,383.2 740.8,381.7 737.3,380.4 733.7,379.1 730.1,377.8 726.6,376.7 723.0,375.6 719.4,374.6 715.9,373.7 712.3,372.8 708.7,372.0 705.2,371.3 701.6,370.6 698.0,370.0 694.5,369.4 691.0,369.0 687.5,368.5 684.0,368.1 680.5,367.8 677.0,367.5 673.4,367.2 669.9,366.9 666.4,366.6 662.9,366.4 659.4,366.2 655.9,366.1 652.4,366.0 648.9,366.0 645.4,366.0 641.9,366.0 638.3,366.1 634.8,366.3 631.3,366.4 627.8,366.7 624.3,366.9 620.8,367.2 617.3,367.5 613.8,367.9 610.3,368.2 606.8,368.6 603.3,369.1 599.8,369.6 596.3,370.2 592.8,370.9 589.3,371.7 585.8,372.6 582.3,373.6 578.8,374.6 575.3,375.7 571.8,376.9 568.3,378.3 564.8,379.7 561.3,381.4 557.8,383.2 554.3,385.3 550.8,387.5 547.3,389.9 543.8,392.3 540.3,394.9 536.8,397.5 533.4,400.2 529.9,403.0 526.4,405.7 522.9,408.3 519.4,410.8 516.0,413.0 512.5,414.8 509.0,416.3 505.5,417.6 502.0,418.7 498.6,419.7 495.1,420.6 491.6,421.2 488.1,421.5 484.6,421.7 481.2,421.6 477.7,421.3 474.2,420.7 470.7,419.9 467.2,418.9 463.8,417.8" fill="#585858" />
<polygon points="463.8,417.8 467.2,418.9 470.7,419.9 474.2,420.7 477.7,421.3 481.2,421.6 484.6,421.7 488.1,421.5 491.6,421.2 495.1,420.6 498.6,419.7 502.0,418.7 505.5,417.6 509.0,416.3 512.5,414.8 516.0,413.0 519.4,410.8 522.9,408.3 526.4,405.7 529.9,403.0 533.4,400.2 536.8,397.5 540.3,394.9 543.8,392.3 547.3,389.9 550.8,387.5 554.3,385.3 557.8,383.2 561.3,381.4 564.8,379.7 568.3,378.3 571.8,376.9 575.3,375.7 578.8,374.6 582.3,373.6 585.8,372.6 589.3,371.7 592.8,370.9 596.3,370.2 599.8,369.6 603.3,369.1 606.8,368.6 610.3,368.2 613.8,367.9 617.3,367.5 620.8,367.2 624.3,366.9 627.8,366.7 631.3,366.4 634.8,366.3 638.3,366.1 641.9,366.0 645.4,366.0 648.9,366.0 652.4,366.0 655.9,366.1 659.4,366.2 662.9,366.4 666.4,366.6 669.9,366.9 673.4,367.2 677.0,367.5 680.5,367.8 684.0,368.1 687.5,368.5 691.0,369.0 694.5,369.4 698.0,370.0 701.6,370.6 705.2,371.3 708.7,372.0 712.3,372.8 715.9,373.7 719.4,374.6 723.0,375.6 726.6,376.7 730.1,377.8 733.7,379.1 737.3,380.4 740.8,381.7 744.4,383.2 748.0,384.7 751.5,386.3 755.1,388.0 758.6,389.8 762.2,391.8 765.7,394.2 769.3,397.2 772.8,400.8 776.3,405.3 779.9,410.5 779.7,408.3 778.2,416.2 778.4,418.1 774.9,413.0 771.3,408.6 767.8,405.1 764.3,402.1 760.8,399.7 757.3,397.8 753.8,396.0 750.3,394.3 746.8,392.7 743.2,391.2 739.7,389.8 736.2,388.4 732.7,387.1 729.2,385.9 725.6,384.7 722.1,383.7 718.6,382.7 715.1,381.8 711.5,381.0 708.0,380.2 704.5,379.5 701.0,378.8 697.5,378.2 694.0,377.7 690.5,377.2 687.0,376.8 683.5,376.4 680.0,376.1 676.5,375.8 673.0,375.5 669.5,375.2 666.0,374.9 662.5,374.7 659.0,374.5 655.5,374.4 652.0,374.3 648.5,374.3 645.0,374.3 641.5,374.3 638.0,374.4 634.5,374.6 631.1,374.7 627.6,375.0 624.1,375.2 620.6,375.5 617.1,375.8 613.6,376.2 610.1,376.5 606.6,376.9 603.1,377.4 599.6,377.9 596.1,378.5 592.6,379.2 589.2,380.0 585.7,380.9 582.2,381.9 578.7,383.0 575.2,384.1 571.7,385.3 568.2,386.6 564.7,388.1 561.3,389.8 557.8,391.7 554.3,393.7 550.8,396.0 547.3,398.4 543.8,400.8 540.3,403.3 536.8,406.0 533.4,408.7 529.9,411.4 526.4,414.0 522.9,416.6 519.4,419.0 516.0,421.1 512.5,422.8 509.0,424.3 505.5,425.5 502.0,426.6 498.6,427.5 495.1,428.3 491.6,428.9 488.1,429.2 484.6,429.3 481.2,429.1 477.7,428.7 474.2,428.1 470.7,427.2 467.2,426.1 463.8,424.9" fill="#777777" />
<polygon points="463.8,424.9 467.2,426.1 470.7,427.2 474.2,428.1 477.7,428.7 481.2,429.1 484.6,429.3 488.1,429.2 491.6,428.9 495.1,428.3 498.6,427.5 502.0,426.6 505.5,425.5 509.0,424.3 512.5,422.8 516.0,421.1 519.4,419.0 522.9,416.6 526.4,414.0 529.9,411.4 533.4,408.7 536.8,406.0 540.3,403.3 543.8,400.8 547.3,398.4 550.8,396.0 554.3,393.7 557.8,391.7 561.3,389.8 564.7,388.1 568.2,386.6 571.7,385.3 575.2,384.1 578.7,383.0 582.2,381.9 585.7,380.9 589.2,380.0 592.6,379.2 596.1,378.5 599.6,377.9 603.1,377.4 606.6,376.9 610.1,376.5 613.6,376.2 617.1,375.8 620.6,375.5 624.1,375.2 627.6,375.0 631.1,374.7 634.5,374.6 638.0,374.4 641.5,374.3 645.0,374.3 648.5,374.3 652.0,374.3 655.5,374.4 659.0,374.5 662.5,374.7 666.0,374.9 669.5,375.2 673.0,375.5 676.5,375.8 680.0,376.1 683.5,376.4 687.0,376.8 690.5,377.2 694.0,377.7 697.5,378.2 701.0,378.8 704.5,379.5 708.0,380.2 711.5,381.0 715.1,381.8 718.6,382.7 722.1,383.7 725.6,384.7 729.2,385.9 732.7,387.1 736.2,388.4 739.7,389.8 743.2,391.2 746.8,392.7 750.3,394.3 753.8,396.0 757.3,397.8 760.8,399.7 764.3,402.1 767.8,405.1 771.3,408.6 774.9,413.0 778.4,418.1 778.2,416.2 776.6,424.5 776.8,426.2 773.3,421.2 769.8,416.9 766.3,413.4 762.9,410.5 759.4,408.2 755.9,406.2 752.4,404.4 749.0,402.7 745.5,401.2 742.0,399.7 738.5,398.2 735.1,396.8 731.6,395.5 728.1,394.4 724.6,393.2 721.2,392.2 717.7,391.3 714.2,390.4 710.8,389.6 707.3,388.9 703.8,388.2 700.3,387.5 696.9,387.0 693.4,386.4 689.9,386.0 686.4,385.6 682.9,385.2 679.5,384.8 676.0,384.5 672.5,384.2 669.0,384.0 665.6,383.7 662.1,383.5 658.6,383.3 655.1,383.2 651.6,383.1 648.2,383.0 644.7,383.0 641.2,383.1 637.7,383.1 634.3,383.3 630.8,383.5 627.3,383.7 623.8,384.0 620.3,384.3 616.9,384.6 613.4,384.9 609.9,385.3 606.4,385.7 602.9,386.2 599.5,386.7 596.0,387.3 592.5,388.0 589.0,388.8 585.6,389.7 582.1,390.7 578.6,391.8 575.1,392.9 571.6,394.1 568.2,395.4 564.7,397.0 561.2,398.7 557.7,400.6 554.2,402.7 550.8,404.9 547.3,407.3 543.8,409.8 540.3,412.3 536.8,414.9 533.4,417.6 529.9,420.3 526.4,422.9 522.9,425.4 519.4,427.7 516.0,429.7 512.5,431.3 509.0,432.7 505.5,433.9 502.0,434.9 498.6,435.8 495.1,436.6 491.6,437.1 488.1,437.4 484.6,437.4 481.2,437.1 477.7,436.6 474.2,436.0 470.7,435.0 467.2,433.8 463.8,432.5" fill="#999999" />
<polygon points="463.8,432.5 467.2,433.8 470.7,435.0 474.2,436.0 477.7,436.6 481.2,437.1 484.6,437.4 488.1,437.4 491.6,437.1 495.1,436.6 498.6,435.8 502.0,434.9 505.5,433.9 509.0,432.7 512.5,431.3 516.0,429.7 519.4,427.7 522.9,425.4 526.4,422.9 529.9,420.3 533.4,417.6 536.8,414.9 540.3,412.3 543.8,409.8 547.3,407.3 550.8,404.9 554.2,402.7 557.7,400.6 561.2,398.7 564.7,397.0 568.2,395.4 571.6,394.1 575.1,392.9 578.6,391.8 582.1,390.7 585.6,389.7 589.0,388.8 592.5,388.0 596.0,387.3 599.5,386.7 602.9,386.2 606.4,385.7 609.9,385.3 613.4,384.9 616.9,384.6 620.3,384.3 623.8,384.0 627.3,383.7 630.8,383.5 634.3,383.3 637.7,383.1 641.2,383.1 644.7,383.0 648.2,383.0 651.6,383.1 655.1,383.2 658.6,383.3 662.1,383.5 665.6,383.7 669.0,384.0 672.5,384.2 676.0,384.5 679.5,384.8 682.9,385.2 686.4,385.6 689.9,386.0 693.4,386.4 696.9,387.0 700.3,387.5 703.8,388.2 707.3,388.9 710.8,389.6 714.2,390.4 717.7,391.3 721.2,392.2 724.6,393.2 728.1,394.4 731.6,395.5 735.1,396.8 738.5,398.2 742.0,399.7 745.5,401.2 749.0,402.7 752.4,404.4 755.9,406.2 759.4,408.2 762.9,410.5 766.3,413.4 769.8,416.9 773.3,421.2 776.8,426.2 776.6,424.5 774.5,435.3 774.7,436.7 771.2,431.8 767.8,427.6 764.4,424.3 761.0,421.5 757.5,419.1 754.1,417.1 750.7,415.3 747.3,413.7 743.8,412.1 740.4,410.6 737.0,409.2 733.6,407.8 730.2,406.5 726.8,405.4 723.4,404.3 720.0,403.3 716.5,402.4 713.1,401.6 709.7,400.8 706.3,400.1 702.9,399.4 699.5,398.8 696.1,398.3 692.6,397.8 689.2,397.3 685.7,396.9 682.3,396.6 678.8,396.2 675.3,395.9 671.9,395.6 668.4,395.3 665.0,395.1 661.5,394.9 658.1,394.7 654.6,394.6 651.2,394.5 647.7,394.4 644.2,394.4 640.8,394.4 637.3,394.5 633.9,394.7 630.4,394.8 627.0,395.1 623.5,395.4 620.0,395.7 616.6,396.0 613.1,396.3 609.7,396.7 606.2,397.2 602.7,397.6 599.3,398.1 595.8,398.7 592.3,399.4 588.9,400.2 585.4,401.2 581.9,402.2 578.5,403.2 575.0,404.3 571.5,405.5 568.1,406.9 564.6,408.4 561.1,410.2 557.7,412.2 554.2,414.3 550.7,416.6 547.3,419.0 543.8,421.4 540.3,424.0 536.8,426.6 533.4,429.2 529.9,431.8 526.4,434.3 522.9,436.8 519.4,439.0 516.0,440.9 512.5,442.4 509.0,443.7 505.5,444.8 502.0,445.7 498.6,446.6 495.1,447.2 491.6,447.7 488.1,447.9 484.6,447.8 481.2,447.5 477.7,446.9 474.2,446.1 470.7,445.0 467.2,443.7 463.8,442.3" fill="#585858" />
<polygon points="463.8,442.3 467.2,443.7 470.7,445.0 474.2,446.1 477.7,446.9 481.2,447.5 484.6,447.8 488.1,447.9 491.6,447.7 495.1,447.2 498.6,446.6 502.0,445.7 505.5,444.8 509.0,443.7 512.5,442.4 516.0,440.9 519.4,439.0 522.9,436.8 526.4,434.3 529.9,431.8 533.4,429.2 536.8,426.6 540.3,424.0 543.8,421.4 547.3,419.0 550.7,416.6 554.2,414.3 557.7,412.2 561.1,410.2 564.6,408.4 568.1,406.9 571.5,405.5 575.0,404.3 578.5,403.2 581.9,402.2 585.4,401.2 588.9,400.2 592.3,399.4 595.8,398.7 599.3,398.1 602.7,397.6 606.2,397.2 609.7,396.7 613.1,396.3 616.6,396.0 620.0,395.7 623.5,395.4 627.0,395.1 630.4,394.8 633.9,394.7 637.3,394.5 640.8,394.4 644.2,394.4 647.7,394.4 651.2,394.5 654.6,394.6 658.1,394.7 661.5,394.9 665.0,395.1 668.4,395.3 671.9,395.6 675.3,395.9 678.8,396.2 682.3,396.6 685.7,396.9 689.2,397.3 692.6,397.8 696.1,398.3 699.5,398.8 702.9,399.4 706.3,400.1 709.7,400.8 713.1,401.6 716.5,402.4 720.0,403.3 723.4,404.3 726.8,405.4 730.2,406.5 733.6,407.8 737.0,409.2 740.4,410.6 743.8,412.1 747.3,413.7 750.7,415.3 754.1,417.1 757.5,419.1 761.0,421.5 764.4,424.3 767.8,427.6 771.2,431.8 774.7,436.7 774.5,435.3 773.0,443.4 773.1,444.5 769.7,439.8 766.3,435.7 762.9,432.4 759.5,429.6 756.1,427.3 752.7,425.3 749.3,423.5 746.0,421.9 742.6,420.3 739.2,418.8 735.9,417.4 732.5,416.0 729.1,414.8 725.8,413.6 722.4,412.6 719.0,411.6 715.7,410.7 712.3,409.9 708.9,409.2 705.6,408.5 702.2,407.9 698.8,407.3 695.5,406.8 692.1,406.3 688.6,405.8 685.2,405.5 681.7,405.1 678.3,404.8 674.9,404.5 671.4,404.2 668.0,403.9 664.5,403.6 661.1,403.4 657.7,403.3 654.2,403.1 650.8,403.0 647.3,402.9 643.9,402.9 640.5,402.9 637.0,403.0 633.6,403.2 630.1,403.4 626.7,403.6 623.3,403.9 619.8,404.2 616.4,404.5 612.9,404.9 609.5,405.3 606.0,405.7 602.6,406.2 599.1,406.7 595.7,407.3 592.2,408.0 588.7,408.8 585.3,409.7 581.8,410.7 578.4,411.8 574.9,412.9 571.4,414.1 568.0,415.5 564.5,417.0 561.1,418.8 557.6,420.8 554.2,423.0 550.7,425.3 547.2,427.7 543.8,430.2 540.3,432.7 536.8,435.3 533.4,437.9 529.9,440.5 526.4,442.9 522.9,445.3 519.4,447.4 516.0,449.2 512.5,450.7 509.0,451.9 505.5,452.9 502.0,453.8 498.6,454.6 495.1,455.2 491.6,455.6 488.1,455.8 484.6,455.7 481.2,455.3 477.7,454.6 474.2,453.7 470.7,452.5 467.2,451.1 463.8,449.7" fill="#777777" />
<polygon points="463.8,449.7 467.2,451.1 470.7,452.5 474.2,453.7 477.7,454.6 481.2,455.3 484.6,455.7 488.1,455.8 491.6,455.6 495.1,455.2 498.6,454.6 502.0,453.8 505.5,452.9 509.0,451.9 512.5,450.7 516.0,449.2 519.4,447.4 522.9,445.3 526.4,442.9 529.9,440.5 533.4,437.9 536.8,435.3 540.3,432.7 543.8,430.2 547.2,427.7 550.7,425.3 554.2,423.0 557.6,420.8 561.1,418.8 564.5,417.0 568.0,415.5 571.4,414.1 574.9,412.9 578.4,411.8 581.8,410.7 585.3,409.7 588.7,408.8 592.2,408.0 595.7,407.3 599.1,406.7 602.6,406.2 606.0,405.7 609.5,405.3 612.9,404.9 616.4,404.5 619.8,404.2 623.3,403.9 626.7,403.6 630.1,403.4 633.6,403.2 637.0,403.0 640.5,402.9 643.9,402.9 647.3,402.9 650.8,403.0 654.2,403.1 657.7,403.3 661.1,403.4 664.5,403.6 668.0,403.9 671.4,404.2 674.9,404.5 678.3,404.8 681.7,405.1 685.2,405.5 688.6,405.8 692.1,406.3 695.5,406.8 698.8,407.3 702.2,407.9 705.6,408.5 708.9,409.2 712.3,409.9 715.7,410.7 719.0,411.6 722.4,412.6 725.8,413.6 729.1,414.8 732.5,416.0 735.9,417.4 739.2,418.8 742.6,420.3 746.0,421.9 749.3,423.5 752.7,425.3 756.1,427.3 759.5,429.6 762.9,432.4 766.3,435.7 769.7,439.8 773.1,444.5 773.0,443.4 771.4,451.4 771.6,452.2 768.2,447.7 764.8,443.6 761.5,440.4 758.1,437.7 754.7,435.4 751.4,433.4 748.0,431.6 744.7,430.0 741.4,428.4 738.1,427.0 734.7,425.5 731.4,424.2 728.1,422.9 724.8,421.8 721.5,420.7 718.1,419.8 714.8,418.9 711.5,418.2 708.2,417.5 704.9,416.8 701.5,416.2 698.2,415.7 694.9,415.1 691.5,414.7 688.1,414.2 684.7,413.9 681.2,413.5 677.8,413.2 674.4,412.9 671.0,412.6 667.5,412.3 664.1,412.1 660.7,411.8 657.3,411.7 653.8,411.5 650.4,411.4 647.0,411.3 643.6,411.3 640.1,411.3 636.7,411.4 633.3,411.6 629.9,411.8 626.4,412.0 623.0,412.3 619.6,412.6 616.2,413.0 612.7,413.3 609.3,413.7 605.9,414.2 602.4,414.6 599.0,415.2 595.5,415.8 592.1,416.5 588.6,417.3 585.2,418.2 581.7,419.2 578.3,420.2 574.8,421.4 571.4,422.6 567.9,424.0 564.5,425.5 561.0,427.4 557.6,429.4 554.1,431.6 550.7,433.9 547.2,436.3 543.8,438.8 540.3,441.3 536.8,443.9 533.4,446.5 529.9,449.0 526.4,451.4 522.9,453.7 519.4,455.8 516.0,457.5 512.5,458.9 509.0,460.0 505.5,461.0 502.0,461.8 498.6,462.5 495.1,463.1 491.6,463.5 488.1,463.6 484.6,463.4 481.2,462.9 477.7,462.2 474.2,461.2 470.7,460.0 467.2,458.5 463.8,456.9" fill="#999999" />
<polygon points="463.8,456.9 467.2,458.5 470.7,460.0 474.2,461.2 477.7,462.2 481.2,462.9 484.6,463.4 488.1,463.6 491.6,463.5 495.1,463.1 498.6,462.5 502.0,461.8 505.5,461.0 509.0,460.0 512.5,458.9 516.0,457.5 519.4,455.8 522.9,453.7 526.4,451.4 529.9,449.0 533.4,446.5 536.8,443.9 540.3,441.3 543.8,438.8 547.2,436.3 550.7,433.9 554.1,431.6 557.6,429.4 561.0,427.4 564.5,425.5 567.9,424.0 571.4,422.6 574.8,421.4 578.3,420.2 581.7,419.2 585.2,418.2 588.6,417.3 592.1,416.5 595.5,415.8 599.0,415.2 602.4,414.6 605.9,414.2 609.3,413.7 612.7,413.3 616.2,413.0 619.6,412.6 623.0,412.3 626.4,412.0 629.9,411.8 633.3,411.6 636.7,411.4 640.1,411.3 643.6,411.3 647.0,411.3 650.4,411.4 653.8,411.5 657.3,411.7 660.7,411.8 664.1,412.1 667.5,412.3 671.0,412.6 674.4,412.9 677.8,413.2 681.2,413.5 684.7,413.9 688.1,414.2 691.5,414.7 694.9,415.1 698.2,415.7 701.5,416.2 704.9,416.8 708.2,417.5 711.5,418.2 714.8,418.9 718.1,419.8 721.5,420.7 724.8,421.8 728.1,422.9 731.4,424.2 734.7,425.5 738.1,427.0 741.4,428.4 744.7,430.0 748.0,431.6 751.4,433.4 754.7,435.4 758.1,437.7 761.5,440.4 764.8,443.6 768.2,447.7 771.6,452.2 771.4,451.4 769.3,462.3 769.5,462.8 766.1,458.4 762.8,454.5 759.5,451.3 756.2,448.7 752.9,446.5 749.5,444.5 746.2,442.7 743.0,441.0 739.7,439.5 736.5,438.0 733.2,436.6 729.9,435.3 726.7,434.0 723.4,432.9 720.2,431.9 716.9,431.0 713.7,430.2 710.4,429.5 707.1,428.8 703.9,428.2 700.6,427.6 697.4,427.1 694.1,426.6 690.7,426.1 687.3,425.7 683.9,425.3 680.5,425.0 677.1,424.7 673.7,424.4 670.3,424.1 666.9,423.8 663.5,423.6 660.1,423.4 656.7,423.2 653.3,423.1 649.9,422.9 646.5,422.8 643.1,422.8 639.7,422.8 636.3,422.9 632.9,423.1 629.5,423.2 626.1,423.5 622.7,423.8 619.3,424.1 615.9,424.5 612.5,424.8 609.1,425.2 605.6,425.7 602.2,426.2 598.8,426.7 595.3,427.3 591.9,428.0 588.5,428.8 585.0,429.7 581.6,430.7 578.1,431.8 574.7,432.9 571.3,434.1 567.8,435.5 564.4,437.1 560.9,439.0 557.5,441.1 554.1,443.3 550.6,445.6 547.2,448.1 543.8,450.5 540.3,453.1 536.8,455.6 533.4,458.2 529.9,460.7 526.4,463.0 522.9,465.2 519.4,467.2 516.0,468.8 512.5,470.0 509.0,471.1 505.5,472.0 502.0,472.8 498.6,473.4 495.1,473.9 491.6,474.2 488.1,474.2 484.6,474.0 481.2,473.4 477.7,472.6 474.2,471.5 470.7,470.1 467.2,468.5 463.8,466.9" fill="#585858" />
<polygon points="463.8,466.9 467.2,468.5 470.7,470.1 474.2,471.5 477.7,472.6 481.2,473.4 484.6,474.0 488.1,474.2 491.6,474.2 495.1,473.9 498.6,473.4 502.0,472.8 505.5,472.0 509.0,471.1 512.5,470.0 516.0,468.8 519.4,467.2 522.9,465.2 526.4,463.0 529.9,460.7 533.4,458.2 536.8,455.6 540.3,453.1 543.8,450.5 547.2,448.1 550.6,445.6 554.1,443.3 557.5,441.1 560.9,439.0 564.4,437.1 567.8,435.5 571.3,434.1 574.7,432.9 578.1,431.8 581.6,430.7 585.0,429.7 588.5,428.8 591.9,428.0 595.3,427.3 598.8,426.7 602.2,426.2 605.6,425.7 609.1,425.2 612.5,424.8 615.9,424.5 619.3,424.1 622.7,423.8 626.1,423.5 629.5,423.2 632.9,423.1 636.3,422.9 639.7,422.8 643.1,422.8 646.5,422.8 649.9,422.9 653.3,423.1 656.7,423.2 660.1,423.4 663.5,423.6 666.9,423.8 670.3,424.1 673.7,424.4 677.1,424.7 680.5,425.0 683.9,425.3 687.3,425.7 690.7,426.1 694.1,426.6 697.4,427.1 700.6,427.6 703.9,428.2 707.1,428.8 710.4,429.5 713.7,430.2 716.9,431.0 720.2,431.9 723.4,432.9 726.7,434.0 729.9,435.3 733.2,436.6 736.5,438.0 739.7,439.5 743.0,441.0 746.2,442.7 749.5,444.5 752.9,446.5 756.2,448.7 759.5,451.3 762.8,454.5 766.1,458.4 769.5,462.8 769.3,462.3 767.8,470.3 767.9,470.6 764.6,466.2 761.3,462.4 758.1,459.4 754.8,456.8 751.5,454.6 748.2,452.5 744.9,450.7 741.7,449.1 738.5,447.6 735.3,446.1 732.1,444.7 728.9,443.4 725.7,442.1 722.4,441.0 719.2,440.1 716.0,439.2 712.8,438.4 709.6,437.7 706.4,437.1 703.2,436.5 700.0,435.9 696.7,435.4 693.5,435.0 690.2,434.5 686.8,434.1 683.4,433.7 680.0,433.4 676.6,433.1 673.3,432.8 669.9,432.5 666.5,432.2 663.1,432.0 659.7,431.8 656.3,431.6 652.9,431.5 649.6,431.3 646.2,431.2 642.8,431.2 639.4,431.2 636.0,431.3 632.6,431.5 629.2,431.6 625.8,431.9 622.5,432.2 619.1,432.5 615.7,432.9 612.3,433.3 608.9,433.7 605.5,434.1 602.0,434.6 598.6,435.2 595.2,435.8 591.8,436.4 588.3,437.2 584.9,438.1 581.5,439.2 578.0,440.3 574.6,441.4 571.2,442.6 567.8,444.0 564.3,445.6 560.9,447.5 557.5,449.7 554.0,451.9 550.6,454.2 547.2,456.7 543.7,459.2 540.3,461.7 536.8,464.2 533.4,466.8 529.9,469.2 526.4,471.5 522.9,473.6 519.4,475.5 516.0,477.0 512.5,478.2 509.0,479.2 505.5,480.0 502.0,480.8 498.6,481.3 495.1,481.8 491.6,482.0 488.1,482.0 484.6,481.7 481.2,481.1 477.7,480.1 474.2,479.0 470.7,477.5 467.2,475.9 463.8,474.1" fill="#777777" />
<polygon points="463.8,474.1 467.2,475.9 470.7,477.5 474.2,479.0 477.7,480.1 481.2,481.1 484.6,481.7 488.1,482.0 491.6,482.0 495.1,481.8 498.6,481.3 502.0,480.8 505.5,480.0 509.0,479.2 512.5,478.2 516.0,477.0 519.4,475.5 522.9,473.6 526.4,471.5 529.9,469.2 533.4,466.8 536.8,464.2 540.3,461.7 543.7,459.2 547.2,456.7 550.6,454.2 554.0,451.9 557.5,449.7 560.9,447.5 564.3,445.6 567.8,444.0 571.2,442.6 574.6,441.4 578.0,440.3 581.5,439.2 584.9,438.1 588.3,437.2 591.8,436.4 595.2,435.8 598.6,435.2 602.0,434.6 605.5,434.1 608.9,433.7 612.3,433.3 615.7,432.9 619.1,432.5 622.5,432.2 625.8,431.9 629.2,431.6 632.6,431.5 636.0,431.3 639.4,431.2 642.8,431.2 646.2,431.2 649.6,431.3 652.9,431.5 656.3,431.6 659.7,431.8 663.1,432.0 666.5,432.2 669.9,432.5 673.3,432.8 676.6,433.1 680.0,433.4 683.4,433.7 686.8,434.1 690.2,434.5 693.5,435.0 696.7,435.4 700.0,435.9 703.2,436.5 706.4,437.1 709.6,437.7 712.8,438.4 716.0,439.2 719.2,440.1 722.4,441.0 725.7,442.1 728.9,443.4 732.1,444.7 735.3,446.1 738.5,447.6 741.7,449.1 744.9,450.7 748.2,452.5 751.5,454.6 754.8,456.8 758.1,459.4 761.3,462.4 764.6,466.2 767.9,470.6 767.8,470.3 766.4,477.5 766.5,477.5 763.3,473.3 760.0,469.6 756.8,466.6 753.5,464.1 750.2,461.8 747.0,459.8 743.7,458.0 740.6,456.4 737.4,454.9 734.2,453.5 731.1,452.0 727.9,450.7 724.7,449.5 721.5,448.4 718.4,447.4 715.2,446.6 712.0,445.8 708.9,445.1 705.7,444.5 702.5,444.0 699.3,443.4 696.2,443.0 693.0,442.5 689.7,442.1 686.3,441.7 682.9,441.3 679.6,441.0 676.2,440.7 672.8,440.4 669.5,440.1 666.1,439.8 662.7,439.6 659.3,439.4 656.0,439.2 652.6,439.1 649.2,438.9 645.9,438.8 642.5,438.8 639.1,438.8 635.7,438.9 632.4,439.0 629.0,439.2 625.6,439.5 622.2,439.8 618.9,440.1 615.5,440.5 612.1,440.9 608.7,441.3 605.3,441.7 601.9,442.2 598.5,442.8 595.1,443.4 591.6,444.1 588.2,444.8 584.8,445.8 581.4,446.8 578.0,447.9 574.5,449.0 571.1,450.2 567.7,451.6 564.3,453.3 560.8,455.2 557.4,457.4 554.0,459.7 550.6,462.0 547.2,464.4 543.7,466.9 540.3,469.4 536.8,472.0 533.4,474.5 529.9,476.9 526.4,479.1 522.9,481.2 519.4,483.0 516.0,484.4 512.5,485.6 509.0,486.5 505.5,487.3 502.0,488.0 498.6,488.5 495.1,488.9 491.6,489.1 488.1,489.0 484.6,488.7 481.2,488.0 477.7,487.0 474.2,485.8 470.7,484.2 467.2,482.5 463.8,480.7" fill="#999999" />
<polygon points="463.8,480.7 467.2,482.5 470.7,484.2 474.2,485.8 477.7,487.0 481.2,488.0 484.6,488.7 488.1,489.0 491.6,489.1 495.1,488.9 498.6,488.5 502.0,488.0 505.5,487.3 509.0,486.5 512.5,485.6 516.0,484.4 519.4,483.0 522.9,481.2 526.4,479.1 529.9,476.9 533.4,474.5 536.8,472.0 540.3,469.4 543.7,466.9 547.2,464.4 550.6,462.0 554.0,459.7 557.4,457.4 560.8,455.2 564.3,453.3 567.7,451.6 571.1,450.2 574.5,449.0 578.0,447.9 581.4,446.8 584.8,445.8 588.2,444.8 591.6,444.1 595.1,443.4 598.5,442.8 601.9,442.2 605.3,441.7 608.7,441.3 612.1,440.9 615.5,440.5 618.9,440.1 622.2,439.8 625.6,439.5 629.0,439.2 632.4,439.0 635.7,438.9 639.1,438.8 642.5,438.8 645.9,438.8 649.2,438.9 652.6,439.1 656.0,439.2 659.3,439.4 662.7,439.6 666.1,439.8 669.5,440.1 672.8,440.4 676.2,440.7 679.6,441.0 682.9,441.3 686.3,441.7 689.7,442.1 693.0,442.5 696.2,443.0 699.3,443.4 702.5,444.0 705.7,444.5 708.9,445.1 712.0,445.8 715.2,446.6 718.4,447.4 721.5,448.4 724.7,449.5 727.9,450.7 731.1,452.0 734.2,453.5 737.4,454.9 740.6,456.4 743.7,458.0 747.0,459.8 750.2,461.8 753.5,464.1 756.8,466.6 760.0,469.6 763.3,473.3 766.5,477.5 766.4,477.5 766.0,479.5 766.1,479.5 762.9,475.3 759.6,471.6 756.4,468.6 753.1,466.1 749.9,463.9 746.6,461.9 743.4,460.1 740.3,458.5 737.1,457.0 733.9,455.5 730.8,454.1 727.6,452.8 724.5,451.5 721.3,450.4 718.1,449.5 715.0,448.6 711.8,447.9 708.7,447.2 705.5,446.6 702.3,446.1 699.2,445.6 696.0,445.1 692.9,444.6 689.5,444.2 686.2,443.8 682.8,443.5 679.4,443.1 676.1,442.8 672.7,442.5 669.3,442.2 666.0,442.0 662.6,441.7 659.2,441.5 655.9,441.3 652.5,441.2 649.1,441.1 645.8,441.0 642.4,440.9 639.0,440.9 635.7,441.0 632.3,441.2 628.9,441.4 625.6,441.6 622.2,441.9 618.8,442.3 615.5,442.6 612.1,443.0 608.7,443.4 605.3,443.9 601.9,444.4 598.4,444.9 595.0,445.5 591.6,446.2 588.2,447.0 584.8,447.9 581.3,448.9 577.9,450.0 574.5,451.2 571.1,452.4 567.7,453.8 564.3,455.4 560.8,457.4 557.4,459.5 554.0,461.8 550.6,464.2 547.2,466.6 543.7,469.1 540.3,471.6 536.8,474.2 533.4,476.7 529.9,479.1 526.4,481.3 522.9,483.4 519.4,485.1 516.0,486.5 512.5,487.7 509.0,488.6 505.5,489.3 502.0,490.0 498.6,490.5 495.1,490.9 491.6,491.1 488.1,491.0 484.6,490.6 481.2,489.9 477.7,488.9 474.2,487.7 470.7,486.1 467.2,484.3 463.8,482.5" fill="#7c7c7c" />
<polygon points="540.3,351.6 543.9,349.0 547.4,346.6 550.9,344.2 554.5,342.1 554.4,362.3 550.9,364.5 547.4,366.8 543.8,369.3 540.3,371.8" fill="#9a6068" />
<polygon points="575.7,333.2 579.3,332.1 582.8,331.1 586.4,330.1 589.9,329.2 589.6,349.1 586.1,350.0 582.6,351.0 579.0,352.0 575.5,353.1" fill="#94636a" />
<polygon points="735.1,336.9 738.9,338.2 742.7,339.5 746.5,340.9 750.3,342.4 747.5,361.5 743.8,360.0 740.2,358.6 736.5,357.3 732.8,356.0" fill="#8a6267" />
<polygon points="540.3,383.5 543.8,380.9 547.3,378.5 550.8,376.1 554.4,373.9 554.3,393.1 550.8,395.4 547.3,397.7 543.8,400.2 540.3,402.7" fill="#9a6068" />
<polygon points="575.4,364.5 578.9,363.4 582.4,362.4 585.9,361.4 589.4,360.5 589.2,379.4 585.7,380.3 582.2,381.3 578.7,382.4 575.2,383.5" fill="#94636a" />
<polygon points="731.4,367.1 735.1,368.3 738.7,369.6 742.3,371.0 745.9,372.5 743.3,390.6 739.8,389.2 736.3,387.8 732.7,386.5 729.2,385.3" fill="#8a6267" />
<polygon points="540.3,413.5 543.8,411.0 547.3,408.5 550.8,406.1 554.2,403.9 554.2,422.4 550.7,424.7 547.2,427.1 543.8,429.6 540.3,432.1" fill="#9a6068" />
<polygon points="575.1,394.1 578.6,393.0 582.1,391.9 585.5,390.9 589.0,390.0 588.7,408.2 585.3,409.1 581.8,410.1 578.4,411.2 574.9,412.3" fill="#94636a" />
<polygon points="728.0,395.5 731.4,396.7 734.9,398.0 738.4,399.4 741.8,400.8 739.3,418.3 736.0,416.8 732.6,415.5 729.2,414.2 725.8,413.1" fill="#8a6267" />
<polygon points="540.3,442.5 543.8,440.0 547.2,437.5 550.7,435.1 554.1,432.8 554.0,451.3 550.6,453.6 547.2,456.1 543.7,458.5 540.3,461.1" fill="#9a6068" />
<polygon points="574.8,422.6 578.3,421.4 581.7,420.4 585.2,419.4 588.6,418.4 588.3,436.6 584.9,437.5 581.5,438.6 578.0,439.7 574.6,440.8" fill="#94636a" />
<polyline points="615.3,327.8 612.7,439.4" fill="none" stroke="#4d4d4d" stroke-width="3.2" />
<polyline points="675.0,327.1 669.0,438.6" fill="none" stroke="#4d4d4d" stroke-width="3.2" />
<polyline points="500.0,381.5 500.0,486.9" fill="none" stroke="#4d4d4d" stroke-width="3.2" />
<polyline points="710.6,332.2 701.4,442.3" fill="none" stroke="#4d4d4d" stroke-width="3.2" />
<polyline points="530.5,364.3 530.5,454.6" fill="none" stroke="#dcdcdc" stroke-width="3.4" />
<polyline points="594.4,329.4 594.2,340.7" fill="none" stroke="#e6e6e6" stroke-width="2.4" />
<polyline points="593.9,360.7 593.7,371.9" fill="none" stroke="#e6e6e6" stroke-width="2.4" />
<polyline points="593.4,390.2 593.3,400.4" fill="none" stroke="#e6e6e6" stroke-width="2.4" />
<polyline points="593.0,418.6 592.8,429.0" fill="none" stroke="#e6e6e6" stroke-width="2.4" />
<polyline points="463.8,380.2 467.2,380.9 470.7,381.5 474.2,381.9 477.7,382.0 481.2,381.9 484.6,381.7 488.1,381.3 491.6,380.7 495.1,379.8 498.6,378.7 502.0,377.4 505.5,375.9 509.0,374.3 512.5,372.5 516.0,370.3 519.4,367.7 522.9,364.8 526.4,361.8 529.9,358.8 533.4,355.9 536.8,353.0 540.3,350.4 543.9,347.8 547.4,345.4 551.0,343.0 554.5,340.9 558.0,339.0 561.6,337.3 565.1,335.9 568.7,334.5 572.2,333.2 575.7,332.0 579.3,330.9 582.8,329.9 586.4,328.9 589.9,328.0 593.5,327.2 597.0,326.5 600.5,325.9 604.1,325.4 607.6,325.0 611.2,324.6 614.7,324.3 618.3,324.0 621.9,323.7 625.5,323.4 629.1,323.2 632.7,323.0 636.3,322.9 639.9,322.7 643.5,322.6 647.1,322.5 650.7,322.5 654.3,322.5 657.9,322.6 661.5,322.7 665.0,322.9 668.6,323.1 672.2,323.3 675.8,323.6 679.4,323.9 683.0,324.3 686.6,324.7 690.2,325.1 693.8,325.6 697.4,326.1 701.0,326.7 704.8,327.4 708.6,328.2 712.4,329.1 716.2,330.0 720.0,331.0 723.8,332.1 727.6,333.2 731.4,334.5 735.2,335.7 739.1,337.0 742.9,338.4 746.7,339.8 750.5,341.3 754.3,342.8 758.1,344.5 761.9,346.2 765.6,348.0 769.3,350.0 773.0,352.5 776.7,355.7 780.4,359.7 784.1,364.7 787.9,370.5 787.7,367.0" fill="none" stroke="#121212" stroke-width="2.0" />
<polyline points="463.8,391.0 467.2,391.8 470.7,392.5 474.2,393.0 477.7,393.2 481.2,393.3 484.6,393.1 488.1,392.8 491.6,392.2 495.1,391.4 498.6,390.4 502.0,389.2 505.5,387.8 509.0,386.3 512.5,384.6 516.0,382.5 519.4,380.0 522.9,377.2 526.4,374.4 529.9,371.4 533.4,368.5 536.8,365.8 540.3,363.1 543.9,360.5 547.4,358.1 550.9,355.8 554.4,353.6 558.0,351.7 561.5,349.9 565.0,348.4 568.6,347.0 572.1,345.7 575.6,344.5 579.1,343.4 582.7,342.4 586.2,341.4 589.7,340.5 593.3,339.7 596.8,339.0 600.3,338.4 603.8,337.9 607.4,337.5 610.9,337.1 614.5,336.8 618.0,336.4 621.6,336.1 625.2,335.9 628.7,335.6 632.3,335.4 635.9,335.3 639.4,335.1 643.0,335.0 646.6,334.9 650.2,334.9 653.7,334.9 657.3,335.0 660.9,335.2 664.4,335.3 668.0,335.5 671.6,335.8 675.1,336.1 678.7,336.4 682.3,336.7 685.9,337.1 689.4,337.5 693.0,338.0 696.6,338.5 700.2,339.1 703.9,339.8 707.6,340.5 711.4,341.4 715.1,342.3 718.8,343.2 722.6,344.3 726.3,345.4 730.0,346.5 733.8,347.8 737.5,349.1 741.3,350.4 745.0,351.8 748.7,353.3 752.5,354.8 756.2,356.4 759.9,358.2 763.6,360.0 767.3,361.9 770.9,364.4 774.6,367.6 778.3,371.5 781.9,376.3 785.6,381.9 785.4,378.8" fill="none" stroke="#121212" stroke-width="1.15" />
<polyline points="463.8,398.9 467.2,399.8 470.7,400.6 474.2,401.2 477.7,401.5 481.2,401.6 484.6,401.5 488.1,401.2 491.6,400.7 495.1,400.0 498.6,399.0 502.0,397.9 505.5,396.6 509.0,395.1 512.5,393.5 516.0,391.5 519.4,389.1 522.9,386.4 526.4,383.6 529.9,380.7 533.4,377.9 536.8,375.1 540.3,372.4 543.8,369.9 547.4,367.4 550.9,365.1 554.4,362.9 557.9,360.9 561.4,359.2 565.0,357.6 568.5,356.2 572.0,354.9 575.5,353.7 579.0,352.6 582.6,351.6 586.1,350.6 589.6,349.7 593.1,348.9 596.6,348.2 600.2,347.6 603.7,347.1 607.2,346.6 610.7,346.3 614.3,345.9 617.8,345.6 621.4,345.3 624.9,345.0 628.5,344.8 632.0,344.6 635.6,344.4 639.1,344.2 642.7,344.1 646.2,344.1 649.8,344.0 653.3,344.1 656.9,344.2 660.4,344.3 664.0,344.5 667.5,344.7 671.1,344.9 674.6,345.2 678.2,345.5 681.7,345.9 685.3,346.2 688.9,346.6 692.4,347.1 696.0,347.6 699.5,348.2 703.2,348.8 706.9,349.6 710.6,350.4 714.3,351.2 718.0,352.2 721.7,353.2 725.3,354.3 729.0,355.4 732.7,356.6 736.4,357.9 740.1,359.2 743.8,360.6 747.4,362.1 751.1,363.6 754.8,365.2 758.5,366.9 762.2,368.7 765.8,370.7 769.4,373.2 773.0,376.3 776.7,380.1 780.3,384.8 783.9,390.3 783.8,387.5" fill="none" stroke="#121212" stroke-width="1.15" />
<polyline points="463.8,407.1 467.2,408.1 470.7,409.0 474.2,409.7 477.7,410.1 481.2,410.3 484.6,410.3 488.1,410.1 491.6,409.7 495.1,409.0 498.6,408.1 502.0,407.0 505.5,405.8 509.0,404.4 512.5,402.8 516.0,400.9 519.4,398.6 522.9,396.0 526.4,393.2 529.9,390.4 533.4,387.6 536.8,384.9 540.3,382.2 543.8,379.7 547.3,377.3 550.9,374.9 554.4,372.7 557.9,370.7 561.4,368.9 564.9,367.3 568.4,365.9 571.9,364.6 575.4,363.3 578.9,362.2 582.4,361.2 585.9,360.2 589.5,359.3 593.0,358.5 596.5,357.8 600.0,357.2 603.5,356.7 607.0,356.3 610.5,355.9 614.0,355.5 617.6,355.2 621.1,354.9 624.6,354.6 628.2,354.4 631.7,354.1 635.2,354.0 638.8,353.8 642.3,353.7 645.8,353.7 649.4,353.6 652.9,353.7 656.5,353.8 660.0,353.9 663.5,354.1 667.1,354.3 670.6,354.5 674.1,354.8 677.7,355.1 681.2,355.5 684.7,355.8 688.3,356.2 691.8,356.7 695.3,357.2 698.9,357.7 702.5,358.4 706.2,359.1 709.8,359.9 713.4,360.7 717.0,361.6 720.7,362.5 724.3,363.6 727.9,364.7 731.6,365.9 735.2,367.2 738.8,368.5 742.5,369.9 746.1,371.3 749.7,372.9 753.4,374.5 757.0,376.2 760.6,377.9 764.2,379.9 767.8,382.4 771.4,385.4 775.0,389.1 778.6,393.8 782.1,399.2 782.0,396.6" fill="none" stroke="#121212" stroke-width="1.15" />
<polyline points="463.8,417.8 467.2,418.9 470.7,419.9 474.2,420.7 477.7,421.3 481.2,421.6 484.6,421.7 488.1,421.5 491.6,421.2 495.1,420.6 498.6,419.7 502.0,418.7 505.5,417.6 509.0,416.3 512.5,414.8 516.0,413.0 519.4,410.8 522.9,408.3 526.4,405.7 529.9,403.0 533.4,400.2 536.8,397.5 540.3,394.9 543.8,392.3 547.3,389.9 550.8,387.5 554.3,385.3 557.8,383.2 561.3,381.4 564.8,379.7 568.3,378.3 571.8,376.9 575.3,375.7 578.8,374.6 582.3,373.6 585.8,372.6 589.3,371.7 592.8,370.9 596.3,370.2 599.8,369.6 603.3,369.1 606.8,368.6 610.3,368.2 613.8,367.9 617.3,367.5 620.8,367.2 624.3,366.9 627.8,366.7 631.3,366.4 634.8,366.3 638.3,366.1 641.9,366.0 645.4,366.0 648.9,366.0 652.4,366.0 655.9,366.1 659.4,366.2 662.9,366.4 666.4,366.6 669.9,366.9 673.4,367.2 677.0,367.5 680.5,367.8 684.0,368.1 687.5,368.5 691.0,369.0 694.5,369.4 698.0,370.0 701.6,370.6 705.2,371.3 708.7,372.0 712.3,372.8 715.9,373.7 719.4,374.6 723.0,375.6 726.6,376.7 730.1,377.8 733.7,379.1 737.3,380.4 740.8,381.7 744.4,383.2 748.0,384.7 751.5,386.3 755.1,388.0 758.6,389.8 762.2,391.8 765.7,394.2 769.3,397.2 772.8,400.8 776.3,405.3 779.9,410.5 779.7,408.3" fill="none" stroke="#121212" stroke-width="1.15" />
<polyline points="463.8,424.9 467.2,426.1 470.7,427.2 474.2,428.1 477.7,428.7 481.2,429.1 484.6,429.3 488.1,429.2 491.6,428.9 495.1,428.3 498.6,427.5 502.0,426.6 505.5,425.5 509.0,424.3 512.5,422.8 516.0,421.1 519.4,419.0 522.9,416.6 526.4,414.0 529.9,411.4 533.4,408.7 536.8,406.0 540.3,403.3 543.8,400.8 547.3,398.4 550.8,396.0 554.3,393.7 557.8,391.7 561.3,389.8 564.7,388.1 568.2,386.6 571.7,385.3 575.2,384.1 578.7,383.0 582.2,381.9 585.7,380.9 589.2,380.0 592.6,379.2 596.1,378.5 599.6,377.9 603.1,377.4 606.6,376.9 610.1,376.5 613.6,376.2 617.1,375.8 620.6,375.5 624.1,375.2 627.6,375.0 631.1,374.7 634.5,374.6 638.0,374.4 641.5,374.3 645.0,374.3 648.5,374.3 652.0,374.3 655.5,374.4 659.0,374.5 662.5,374.7 666.0,374.9 669.5,375.2 673.0,375.5 676.5,375.8 680.0,376.1 683.5,376.4 687.0,376.8 690.5,377.2 694.0,377.7 697.5,378.2 701.0,378.8 704.5,379.5 708.0,380.2 711.5,381.0 715.1,381.8 718.6,382.7 722.1,383.7 725.6,384.7 729.2,385.9 732.7,387.1 736.2,388.4 739.7,389.8 743.2,391.2 746.8,392.7 750.3,394.3 753.8,396.0 757.3,397.8 760.8,399.7 764.3,402.1 767.8,405.1 771.3,408.6 774.9,413.0 778.4,418.1 778.2,416.2" fill="none" stroke="#121212" stroke-width="1.15" />
<polyline points="463.8,432.5 467.2,433.8 470.7,435.0 474.2,436.0 477.7,436.6 481.2,437.1 484.6,437.4 488.1,437.4 491.6,437.1 495.1,436.6 498.6,435.8 502.0,434.9 505.5,433.9 509.0,432.7 512.5,431.3 516.0,429.7 519.4,427.7 522.9,425.4 526.4,422.9 529.9,420.3 533.4,417.6 536.8,414.9 540.3,412.3 543.8,409.8 547.3,407.3 550.8,404.9 554.2,402.7 557.7,400.6 561.2,398.7 564.7,397.0 568.2,395.4 571.6,394.1 575.1,392.9 578.6,391.8 582.1,390.7 585.6,389.7 589.0,388.8 592.5,388.0 596.0,387.3 599.5,386.7 602.9,386.2 606.4,385.7 609.9,385.3 613.4,384.9 616.9,384.6 620.3,384.3 623.8,384.0 627.3,383.7 630.8,383.5 634.3,383.3 637.7,383.1 641.2,383.1 644.7,383.0 648.2,383.0 651.6,383.1 655.1,383.2 658.6,383.3 662.1,383.5 665.6,383.7 669.0,384.0 672.5,384.2 676.0,384.5 679.5,384.8 682.9,385.2 686.4,385.6 689.9,386.0 693.4,386.4 696.9,387.0 700.3,387.5 703.8,388.2 707.3,388.9 710.8,389.6 714.2,390.4 717.7,391.3 721.2,392.2 724.6,393.2 728.1,394.4 731.6,395.5 735.1,396.8 738.5,398.2 742.0,399.7 745.5,401.2 749.0,402.7 752.4,404.4 755.9,406.2 759.4,408.2 762.9,410.5 766.3,413.4 769.8,416.9 773.3,421.2 776.8,426.2 776.6,424.5" fill="none" stroke="#121212" stroke-width="1.15" />
<polyline points="463.8,442.3 467.2,443.7 470.7,445.0 474.2,446.1 477.7,446.9 481.2,447.5 484.6,447.8 488.1,447.9 491.6,447.7 495.1,447.2 498.6,446.6 502.0,445.7 505.5,444.8 509.0,443.7 512.5,442.4 516.0,440.9 519.4,439.0 522.9,436.8 526.4,434.3 529.9,431.8 533.4,429.2 536.8,426.6 540.3,424.0 543.8,421.4 547.3,419.0 550.7,416.6 554.2,414.3 557.7,412.2 561.1,410.2 564.6,408.4 568.1,406.9 571.5,405.5 575.0,404.3 578.5,403.2 581.9,402.2 585.4,401.2 588.9,400.2 592.3,399.4 595.8,398.7 599.3,398.1 602.7,397.6 606.2,397.2 609.7,396.7 613.1,396.3 616.6,396.0 620.0,395.7 623.5,395.4 627.0,395.1 630.4,394.8 633.9,394.7 637.3,394.5 640.8,394.4 644.2,394.4 647.7,394.4 651.2,394.5 654.6,394.6 658.1,394.7 661.5,394.9 665.0,395.1 668.4,395.3 671.9,395.6 675.3,395.9 678.8,396.2 682.3,396.6 685.7,396.9 689.2,397.3 692.6,397.8 696.1,398.3 699.5,398.8 702.9,399.4 706.3,400.1 709.7,400.8 713.1,401.6 716.5,402.4 720.0,403.3 723.4,404.3 726.8,405.4 730.2,406.5 733.6,407.8 737.0,409.2 740.4,410.6 743.8,412.1 747.3,413.7 750.7,415.3 754.1,417.1 757.5,419.1 761.0,421.5 764.4,424.3 767.8,427.6 771.2,431.8 774.7,436.7 774.5,435.3" fill="none" stroke="#121212" stroke-width="1.15" />
<polyline points="463.8,449.7 467.2,451.1 470.7,452.5 474.2,453.7 477.7,454.6 481.2,455.3 484.6,455.7 488.1,455.8 491.6,455.6 495.1,455.2 498.6,454.6 502.0,453.8 505.5,452.9 509.0,451.9 512.5,450.7 516.0,449.2 519.4,447.4 522.9,445.3 526.4,442.9 529.9,440.5 533.4,437.9 536.8,435.3 540.3,432.7 543.8,430.2 547.2,427.7 550.7,425.3 554.2,423.0 557.6,420.8 561.1,418.8 564.5,417.0 568.0,415.5 571.4,414.1 574.9,412.9 578.4,411.8 581.8,410.7 585.3,409.7 588.7,408.8 592.2,408.0 595.7,407.3 599.1,406.7 602.6,406.2 606.0,405.7 609.5,405.3 612.9,404.9 616.4,404.5 619.8,404.2 623.3,403.9 626.7,403.6 630.1,403.4 633.6,403.2 637.0,403.0 640.5,402.9 643.9,402.9 647.3,402.9 650.8,403.0 654.2,403.1 657.7,403.3 661.1,403.4 664.5,403.6 668.0,403.9 671.4,404.2 674.9,404.5 678.3,404.8 681.7,405.1 685.2,405.5 688.6,405.8 692.1,406.3 695.5,406.8 698.8,407.3 702.2,407.9 705.6,408.5 708.9,409.2 712.3,409.9 715.7,410.7 719.0,411.6 722.4,412.6 725.8,413.6 729.1,414.8 732.5,416.0 735.9,417.4 739.2,418.8 742.6,420.3 746.0,421.9 749.3,423.5 752.7,425.3 756.1,427.3 759.5,429.6 762.9,432.4 766.3,435.7 769.7,439.8 773.1,444.5 773.0,443.4" fill="none" stroke="#121212" stroke-width="1.15" />
<polyline points="463.8,456.9 467.2,458.5 470.7,460.0 474.2,461.2 477.7,462.2 481.2,462.9 484.6,463.4 488.1,463.6 491.6,463.5 495.1,463.1 498.6,462.5 502.0,461.8 505.5,461.0 509.0,460.0 512.5,458.9 516.0,457.5 519.4,455.8 522.9,453.7 526.4,451.4 529.9,449.0 533.4,446.5 536.8,443.9 540.3,441.3 543.8,438.8 547.2,436.3 550.7,433.9 554.1,431.6 557.6,429.4 561.0,427.4 564.5,425.5 567.9,424.0 571.4,422.6 574.8,421.4 578.3,420.2 581.7,419.2 585.2,418.2 588.6,417.3 592.1,416.5 595.5,415.8 599.0,415.2 602.4,414.6 605.9,414.2 609.3,413.7 612.7,413.3 616.2,413.0 619.6,412.6 623.0,412.3 626.4,412.0 629.9,411.8 633.3,411.6 636.7,411.4 640.1,411.3 643.6,411.3 647.0,411.3 650.4,411.4 653.8,411.5 657.3,411.7 660.7,411.8 664.1,412.1 667.5,412.3 671.0,412.6 674.4,412.9 677.8,413.2 681.2,413.5 684.7,413.9 688.1,414.2 691.5,414.7 694.9,415.1 698.2,415.7 701.5,416.2 704.9,416.8 708.2,417.5 711.5,418.2 714.8,418.9 718.1,419.8 721.5,420.7 724.8,421.8 728.1,422.9 731.4,424.2 734.7,425.5 738.1,427.0 741.4,428.4 744.7,430.0 748.0,431.6 751.4,433.4 754.7,435.4 758.1,437.7 761.5,440.4 764.8,443.6 768.2,447.7 771.6,452.2 771.4,451.4" fill="none" stroke="#121212" stroke-width="1.15" />
<polyline points="463.8,466.9 467.2,468.5 470.7,470.1 474.2,471.5 477.7,472.6 481.2,473.4 484.6,474.0 488.1,474.2 491.6,474.2 495.1,473.9 498.6,473.4 502.0,472.8 505.5,472.0 509.0,471.1 512.5,470.0 516.0,468.8 519.4,467.2 522.9,465.2 526.4,463.0 529.9,460.7 533.4,458.2 536.8,455.6 540.3,453.1 543.8,450.5 547.2,448.1 550.6,445.6 554.1,443.3 557.5,441.1 560.9,439.0 564.4,437.1 567.8,435.5 571.3,434.1 574.7,432.9 578.1,431.8 581.6,430.7 585.0,429.7 588.5,428.8 591.9,428.0 595.3,427.3 598.8,426.7 602.2,426.2 605.6,425.7 609.1,425.2 612.5,424.8 615.9,424.5 619.3,424.1 622.7,423.8 626.1,423.5 629.5,423.2 632.9,423.1 636.3,422.9 639.7,422.8 643.1,422.8 646.5,422.8 649.9,422.9 653.3,423.1 656.7,423.2 660.1,423.4 663.5,423.6 666.9,423.8 670.3,424.1 673.7,424.4 677.1,424.7 680.5,425.0 683.9,425.3 687.3,425.7 690.7,426.1 694.1,426.6 697.4,427.1 700.6,427.6 703.9,428.2 707.1,428.8 710.4,429.5 713.7,430.2 716.9,431.0 720.2,431.9 723.4,432.9 726.7,434.0 729.9,435.3 733.2,436.6 736.5,438.0 739.7,439.5 743.0,441.0 746.2,442.7 749.5,444.5 752.9,446.5 756.2,448.7 759.5,451.3 762.8,454.5 766.1,458.4 769.5,462.8 769.3,462.3" fill="none" stroke="#121212" stroke-width="1.15" />
<polyline points="463.8,474.1 467.2,475.9 470.7,477.5 474.2,479.0 477.7,480.1 481.2,481.1 484.6,481.7 488.1,482.0 491.6,482.0 495.1,481.8 498.6,481.3 502.0,480.8 505.5,480.0 509.0,479.2 512.5,478.2 516.0,477.0 519.4,475.5 522.9,473.6 526.4,471.5 529.9,469.2 533.4,466.8 536.8,464.2 540.3,461.7 543.7,459.2 547.2,456.7 550.6,454.2 554.0,451.9 557.5,449.7 560.9,447.5 564.3,445.6 567.8,444.0 571.2,442.6 574.6,441.4 578.0,440.3 581.5,439.2 584.9,438.1 588.3,437.2 591.8,436.4 595.2,435.8 598.6,435.2 602.0,434.6 605.5,434.1 608.9,433.7 612.3,433.3 615.7,432.9 619.1,432.5 622.5,432.2 625.8,431.9 629.2,431.6 632.6,431.5 636.0,431.3 639.4,431.2 642.8,431.2 646.2,431.2 649.6,431.3 652.9,431.5 656.3,431.6 659.7,431.8 663.1,432.0 666.5,432.2 669.9,432.5 673.3,432.8 676.6,433.1 680.0,433.4 683.4,433.7 686.8,434.1 690.2,434.5 693.5,435.0 696.7,435.4 700.0,435.9 703.2,436.5 706.4,437.1 709.6,437.7 712.8,438.4 716.0,439.2 719.2,440.1 722.4,441.0 725.7,442.1 728.9,443.4 732.1,444.7 735.3,446.1 738.5,447.6 741.7,449.1 744.9,450.7 748.2,452.5 751.5,454.6 754.8,456.8 758.1,459.4 761.3,462.4 764.6,466.2 767.9,470.6 767.8,470.3" fill="none" stroke="#121212" stroke-width="1.15" />
<polyline points="463.8,480.7 467.2,482.5 470.7,484.2 474.2,485.8 477.7,487.0 481.2,488.0 484.6,488.7 488.1,489.0 491.6,489.1 495.1,488.9 498.6,488.5 502.0,488.0 505.5,487.3 509.0,486.5 512.5,485.6 516.0,484.4 519.4,483.0 522.9,481.2 526.4,479.1 529.9,476.9 533.4,474.5 536.8,472.0 540.3,469.4 543.7,466.9 547.2,464.4 550.6,462.0 554.0,459.7 557.4,457.4 560.8,455.2 564.3,453.3 567.7,451.6 571.1,450.2 574.5,449.0 578.0,447.9 581.4,446.8 584.8,445.8 588.2,444.8 591.6,444.1 595.1,443.4 598.5,442.8 601.9,442.2 605.3,441.7 608.7,441.3 612.1,440.9 615.5,440.5 618.9,440.1 622.2,439.8 625.6,439.5 629.0,439.2 632.4,439.0 635.7,438.9 639.1,438.8 642.5,438.8 645.9,438.8 649.2,438.9 652.6,439.1 656.0,439.2 659.3,439.4 662.7,439.6 666.1,439.8 669.5,440.1 672.8,440.4 676.2,440.7 679.6,441.0 682.9,441.3 686.3,441.7 689.7,442.1 693.0,442.5 696.2,443.0 699.3,443.4 702.5,444.0 705.7,444.5 708.9,445.1 712.0,445.8 715.2,446.6 718.4,447.4 721.5,448.4 724.7,449.5 727.9,450.7 731.1,452.0 734.2,453.5 737.4,454.9 740.6,456.4 743.7,458.0 747.0,459.8 750.2,461.8 753.5,464.1 756.8,466.6 760.0,469.6 763.3,473.3 766.5,477.5 766.4,477.5" fill="none" stroke="#121212" stroke-width="1.15" />
<polyline points="463.8,482.5 467.2,484.3 470.7,486.1 474.2,487.7 477.7,488.9 481.2,489.9 484.6,490.6 488.1,491.0 491.6,491.1 495.1,490.9 498.6,490.5 502.0,490.0 505.5,489.3 509.0,488.6 512.5,487.7 516.0,486.5 519.4,485.1 522.9,483.4 526.4,481.3 529.9,479.1 533.4,476.7 536.8,474.2 540.3,471.6 543.7,469.1 547.2,466.6 550.6,464.2 554.0,461.8 557.4,459.5 560.8,457.4 564.3,455.4 567.7,453.8 571.1,452.4 574.5,451.2 577.9,450.0 581.3,448.9 584.8,447.9 588.2,447.0 591.6,446.2 595.0,445.5 598.4,444.9 601.9,444.4 605.3,443.9 608.7,443.4 612.1,443.0 615.5,442.6 618.8,442.3 622.2,441.9 625.6,441.6 628.9,441.4 632.3,441.2 635.7,441.0 639.0,440.9 642.4,440.9 645.8,441.0 649.1,441.1 652.5,441.2 655.9,441.3 659.2,441.5 662.6,441.7 666.0,442.0 669.3,442.2 672.7,442.5 676.1,442.8 679.4,443.1 682.8,443.5 686.2,443.8 689.5,444.2 692.9,444.6 696.0,445.1 699.2,445.6 702.3,446.1 705.5,446.6 708.7,447.2 711.8,447.9 715.0,448.6 718.1,449.5 721.3,450.4 724.5,451.5 727.6,452.8 730.8,454.1 733.9,455.5 737.1,457.0 740.3,458.5 743.4,460.1 746.6,461.9 749.9,463.9 753.1,466.1 756.4,468.6 759.6,471.6 762.9,475.3 766.1,479.5 766.0,479.5" fill="none" stroke="#121212" stroke-width="1.15" />
<polyline points="463.8,371.2 463.8,482.5" fill="none" stroke="#121212" stroke-width="1.25" />
<polyline points="476.0,373.0 476.0,488.3" fill="none" stroke="#121212" stroke-width="1.25" />
<polyline points="492.5,371.5 492.5,491.0" fill="none" stroke="#121212" stroke-width="1.25" />
<polyline points="506.0,366.7 506.0,489.3" fill="none" stroke="#121212" stroke-width="1.25" />
<polyline points="514.0,362.6 514.0,487.2" fill="none" stroke="#121212" stroke-width="1.25" />
<polyline points="523.0,355.7 523.0,483.3" fill="none" stroke="#121212" stroke-width="1.25" />
<polyline points="532.5,347.6 532.5,477.3" fill="none" stroke="#121212" stroke-width="1.25" />
<polyline points="542.5,339.7 542.5,470.0" fill="none" stroke="#121212" stroke-width="1.25" />
<polyline points="552.7,333.0 552.3,463.0" fill="none" stroke="#121212" stroke-width="1.25" />
<polyline points="564.1,327.3 563.3,455.9" fill="none" stroke="#121212" stroke-width="1.25" />
<polyline points="578.2,322.3 576.8,450.4" fill="none" stroke="#121212" stroke-width="1.25" />
<polyline points="594.6,318.0 592.8,446.0" fill="none" stroke="#121212" stroke-width="1.25" />
<polyline points="611.2,315.6 608.8,443.4" fill="none" stroke="#121212" stroke-width="1.25" />
<polyline points="631.9,314.1 628.1,441.4" fill="none" stroke="#121212" stroke-width="1.25" />
<polyline points="649.9,313.5 645.1,440.9" fill="none" stroke="#121212" stroke-width="1.25" />
<polyline points="668.0,314.0 662.0,441.7" fill="none" stroke="#121212" stroke-width="1.25" />
<polyline points="687.3,315.7 680.1,443.2" fill="none" stroke="#121212" stroke-width="1.25" />
<polyline points="705.5,318.5 696.5,445.1" fill="none" stroke="#121212" stroke-width="1.25" />
<polyline points="723.5,323.0 711.5,447.8" fill="none" stroke="#121212" stroke-width="1.25" />
<polyline points="738.2,327.8 723.8,451.3" fill="none" stroke="#121212" stroke-width="1.25" />
<polyline points="753.5,333.5 736.5,456.7" fill="none" stroke="#121212" stroke-width="1.25" />
<polyline points="765.5,338.9 746.5,461.8" fill="none" stroke="#121212" stroke-width="1.25" />
<polyline points="776.1,346.2 755.9,468.2" fill="none" stroke="#121212" stroke-width="1.25" />
<polyline points="784.1,355.7 762.9,475.3" fill="none" stroke="#121212" stroke-width="1.25" />
<polyline points="787.9,361.5 766.1,479.5" fill="none" stroke="#121212" stroke-width="1.25" />
<polyline points="787.9,360.7 786.5,385.0 781.4,416.0 776.0,444.7 769.8,475.7 766.5,481.0" fill="none" stroke="#161616" stroke-width="1.2" />
<polygon points="462.5,370.0 464.7,370.4 467.8,371.1 471.4,371.7 475.0,372.0 478.6,372.0 482.5,371.9 486.3,371.5 490.0,371.0 493.4,370.3 496.7,369.3 499.9,368.2 503.0,367.0 506.1,365.7 509.2,364.2 512.2,362.7 515.0,361.0 517.6,359.2 520.1,357.2 522.5,355.1 525.0,353.0 527.5,350.9 530.0,348.7 532.5,346.6 535.0,344.5 537.5,342.6 539.9,340.7 542.4,338.9 545.0,337.0 547.8,335.1 550.8,333.1 553.9,331.2 557.0,329.5 560.2,327.9 563.5,326.5 566.8,325.2 570.0,324.0 573.1,322.9 576.2,321.9 579.2,320.9 582.5,320.0 586.0,319.1 589.6,318.1 593.3,317.3 597.0,316.5 600.7,315.9 604.4,315.4 608.2,314.9 612.5,314.5 617.2,314.1 622.3,313.7 627.7,313.3 633.0,313.0 638.4,312.8 643.8,312.6 649.4,312.5 655.0,312.5 660.7,312.7 666.5,313.0 672.3,313.3 678.0,313.8 683.6,314.3 689.2,315.0 694.7,315.7 700.0,316.5 705.2,317.5 710.3,318.6 715.2,319.8 720.0,321.0 724.6,322.3 729.2,323.7 733.5,325.1 737.5,326.5 741.2,327.8 744.6,329.0 747.9,330.3 751.0,331.5 754.1,332.8 757.1,334.0 759.9,335.3 762.5,336.5 764.9,337.6 767.1,338.7 769.1,339.8 771.0,341.0 772.8,342.3 774.4,343.6 776.0,345.0 777.5,346.5 779.0,348.0 780.4,349.6 781.7,351.3 783.0,353.0 784.3,355.0 785.7,357.2 786.9,359.1 787.7,360.5 787.7,370.5 786.9,369.1 785.7,367.2 784.3,365.0 783.0,363.0 781.7,361.3 780.4,359.6 779.0,358.0 777.5,356.5 776.0,355.0 774.4,353.6 772.8,352.3 771.0,351.0 769.1,349.8 767.1,348.7 764.9,347.6 762.5,346.5 759.9,345.3 757.1,344.0 754.1,342.8 751.0,341.5 747.9,340.3 744.6,339.0 741.2,337.8 737.5,336.5 733.5,335.1 729.2,333.7 724.6,332.3 720.0,331.0 715.2,329.8 710.3,328.6 705.2,327.5 700.0,326.5 694.7,325.7 689.2,325.0 683.6,324.3 678.0,323.8 672.3,323.3 666.5,323.0 660.7,322.7 655.0,322.5 649.4,322.5 643.8,322.6 638.4,322.8 633.0,323.0 627.7,323.3 622.3,323.7 617.2,324.1 612.5,324.5 608.2,324.9 604.4,325.4 600.7,325.9 597.0,326.5 593.3,327.3 589.6,328.1 586.0,329.1 582.5,330.0 579.2,330.9 576.2,331.9 573.1,332.9 570.0,334.0 566.8,335.2 563.5,336.5 560.2,337.9 557.0,339.5 553.9,341.2 550.8,343.1 547.8,345.1 545.0,347.0 542.4,348.9 539.9,350.7 537.5,352.6 535.0,354.5 532.5,356.6 530.0,358.7 527.5,360.9 525.0,363.0 522.5,365.1 520.1,367.2 517.6,369.2 515.0,371.0 512.2,372.7 509.2,374.2 506.1,375.7 503.0,377.0 499.9,378.2 496.7,379.3 493.4,380.3 490.0,381.0 486.3,381.5 482.5,381.9 478.6,382.0 475.0,382.0 471.4,381.7 467.8,381.1 464.7,380.4 462.5,380.0" fill="#6e6e6e" />
<polyline points="462.5,380.0 464.7,380.4 467.8,381.1 471.4,381.7 475.0,382.0 478.6,382.0 482.5,381.9 486.3,381.5 490.0,381.0 493.4,380.3 496.7,379.3 499.9,378.2 503.0,377.0 506.1,375.7 509.2,374.2 512.2,372.7 515.0,371.0 517.6,369.2 520.1,367.2 522.5,365.1 525.0,363.0 527.5,360.9 530.0,358.7 532.5,356.6 535.0,354.5 537.5,352.6 539.9,350.7 542.4,348.9 545.0,347.0 547.8,345.1 550.8,343.1 553.9,341.2 557.0,339.5 560.2,337.9 563.5,336.5 566.8,335.2 570.0,334.0 573.1,332.9 576.2,331.9 579.2,330.9 582.5,330.0 586.0,329.1 589.6,328.1 593.3,327.3 597.0,326.5 600.7,325.9 604.4,325.4 608.2,324.9 612.5,324.5 617.2,324.1 622.3,323.7 627.7,323.3 633.0,323.0 638.4,322.8 643.8,322.6 649.4,322.5 655.0,322.5 660.7,322.7 666.5,323.0 672.3,323.3 678.0,323.8 683.6,324.3 689.2,325.0 694.7,325.7 700.0,326.5 705.2,327.5 710.3,328.6 715.2,329.8 720.0,331.0 724.6,332.3 729.2,333.7 733.5,335.1 737.5,336.5 741.2,337.8 744.6,339.0 747.9,340.3 751.0,341.5 754.1,342.8 757.1,344.0 759.9,345.3 762.5,346.5 764.9,347.6 767.1,348.7 769.1,349.8 771.0,351.0 772.8,352.3 774.4,353.6 776.0,355.0 777.5,356.5 779.0,358.0 780.4,359.6 781.7,361.3 783.0,363.0 784.3,365.0 785.7,367.2 786.9,369.1 787.7,370.5" fill="none" stroke="#111" stroke-width="2.2" />
<polyline points="462.5,370.0 464.7,370.4 467.8,371.1 471.4,371.7 475.0,372.0 478.6,372.0 482.5,371.9 486.3,371.5 490.0,371.0 493.4,370.3 496.7,369.3 499.9,368.2 503.0,367.0 506.1,365.7 509.2,364.2 512.2,362.7 515.0,361.0 517.6,359.2 520.1,357.2 522.5,355.1 525.0,353.0 527.5,350.9 530.0,348.7 532.5,346.6 535.0,344.5 537.5,342.6 539.9,340.7 542.4,338.9 545.0,337.0 547.8,335.1 550.8,333.1 553.9,331.2 557.0,329.5 560.2,327.9 563.5,326.5 566.8,325.2 570.0,324.0 573.1,322.9 576.2,321.9 579.2,320.9 582.5,320.0 586.0,319.1 589.6,318.1 593.3,317.3 597.0,316.5 600.7,315.9 604.4,315.4 608.2,314.9 612.5,314.5 617.2,314.1 622.3,313.7 627.7,313.3 633.0,313.0 638.4,312.8 643.8,312.6 649.4,312.5 655.0,312.5 660.7,312.7 666.5,313.0 672.3,313.3 678.0,313.8 683.6,314.3 689.2,315.0 694.7,315.7 700.0,316.5 705.2,317.5 710.3,318.6 715.2,319.8 720.0,321.0 724.6,322.3 729.2,323.7 733.5,325.1 737.5,326.5 741.2,327.8 744.6,329.0 747.9,330.3 751.0,331.5 754.1,332.8 757.1,334.0 759.9,335.3 762.5,336.5 764.9,337.6 767.1,338.7 769.1,339.8 771.0,341.0 772.8,342.3 774.4,343.6 776.0,345.0 777.5,346.5 779.0,348.0 780.4,349.6 781.7,351.3 783.0,353.0 784.3,355.0 785.7,357.2 786.9,359.1 787.7,360.5" fill="none" stroke="#1a1a1a" stroke-width="1.0" />
<polyline points="462.5,373.2 464.7,373.6 467.8,374.3 471.4,374.9 475.0,375.2 478.6,375.2 482.5,375.1 486.3,374.7 490.0,374.2 493.4,373.5 496.7,372.5 499.9,371.4 503.0,370.2 506.1,368.9 509.2,367.4 512.2,365.9 515.0,364.2 517.6,362.4 520.1,360.4 522.5,358.3 525.0,356.2 527.5,354.1 530.0,351.9 532.5,349.8 535.0,347.7 537.5,345.8 539.9,343.9 542.4,342.1 545.0,340.2 547.8,338.3 550.8,336.3 553.9,334.4 557.0,332.7 560.2,331.1 563.5,329.7 566.8,328.4 570.0,327.2 573.1,326.1 576.2,325.1 579.2,324.1 582.5,323.2 586.0,322.3 589.6,321.3 593.3,320.5 597.0,319.7 600.7,319.1 604.4,318.6 608.2,318.1 612.5,317.7 617.2,317.3 622.3,316.9 627.7,316.5 633.0,316.2 638.4,316.0 643.8,315.8 649.4,315.7 655.0,315.7 660.7,315.9 666.5,316.2 672.3,316.5 678.0,317.0 683.6,317.5 689.2,318.2 694.7,318.9 700.0,319.7 705.2,320.7 710.3,321.8 715.2,323.0 720.0,324.2 724.6,325.5 729.2,326.9 733.5,328.3 737.5,329.7 741.2,331.0 744.6,332.2 747.9,333.5 751.0,334.7 754.1,336.0 757.1,337.2 759.9,338.5 762.5,339.7 764.9,340.8 767.1,341.9 769.1,343.0 771.0,344.2 772.8,345.5 774.4,346.8 776.0,348.2 777.5,349.7 779.0,351.2 780.4,352.8 781.7,354.5 783.0,356.2 784.3,358.2 785.7,360.4 786.9,362.3 787.7,363.7" fill="none" stroke="#2a2a2a" stroke-width="0.6" />
<polyline points="462.5,370.0 462.5,380.0" fill="none" stroke="#1a1a1a" stroke-width="0.7" />
<polyline points="463.6,370.2 463.6,380.2" fill="none" stroke="#1a1a1a" stroke-width="0.7" />
<polyline points="464.7,370.4 464.7,380.4" fill="none" stroke="#1a1a1a" stroke-width="0.7" />
<polyline points="466.2,370.7 466.2,380.7" fill="none" stroke="#1a1a1a" stroke-width="0.7" />
<polyline points="467.8,371.1 467.8,381.1" fill="none" stroke="#1a1a1a" stroke-width="0.7" />
<polyline points="469.6,371.4 469.6,381.4" fill="none" stroke="#1a1a1a" stroke-width="0.7" />
<polyline points="471.4,371.7 471.4,381.7" fill="none" stroke="#1a1a1a" stroke-width="0.7" />
<polyline points="473.2,371.8 473.2,381.8" fill="none" stroke="#1a1a1a" stroke-width="0.7" />
<polyline points="475.0,372.0 475.0,382.0" fill="none" stroke="#1a1a1a" stroke-width="0.7" />
<polyline points="476.8,372.0 476.8,382.0" fill="none" stroke="#1a1a1a" stroke-width="0.7" />
<polyline points="478.6,372.0 478.6,382.0" fill="none" stroke="#1a1a1a" stroke-width="0.7" />
<polyline points="480.5,372.0 480.5,382.0" fill="none" stroke="#1a1a1a" stroke-width="0.7" />
<polyline points="482.5,371.9 482.5,381.9" fill="none" stroke="#1a1a1a" stroke-width="0.7" />
<polyline points="484.4,371.7 484.4,381.7" fill="none" stroke="#1a1a1a" stroke-width="0.7" />
<polyline points="486.3,371.5 486.3,381.5" fill="none" stroke="#1a1a1a" stroke-width="0.7" />
<polyline points="488.2,371.3 488.2,381.3" fill="none" stroke="#1a1a1a" stroke-width="0.7" />
<polyline points="490.0,371.0 490.0,381.0" fill="none" stroke="#1a1a1a" stroke-width="0.7" />
<polyline points="491.7,370.6 491.7,380.6" fill="none" stroke="#1a1a1a" stroke-width="0.7" />
<polyline points="493.4,370.3 493.4,380.3" fill="none" stroke="#1a1a1a" stroke-width="0.7" />
<polyline points="495.1,369.8 495.1,379.8" fill="none" stroke="#1a1a1a" stroke-width="0.7" />
<polyline points="496.7,369.3 496.7,379.3" fill="none" stroke="#1a1a1a" stroke-width="0.7" />
<polyline points="498.3,368.8 498.3,378.8" fill="none" stroke="#1a1a1a" stroke-width="0.7" />
<polyline points="499.9,368.2 499.9,378.2" fill="none" stroke="#1a1a1a" stroke-width="0.7" />
<polyline points="501.4,367.6 501.4,377.6" fill="none" stroke="#1a1a1a" stroke-width="0.7" />
<polyline points="503.0,367.0 503.0,377.0" fill="none" stroke="#1a1a1a" stroke-width="0.7" />
<polyline points="504.6,366.3 504.6,376.3" fill="none" stroke="#1a1a1a" stroke-width="0.7" />
<polyline points="506.1,365.7 506.1,375.7" fill="none" stroke="#1a1a1a" stroke-width="0.7" />
<polyline points="507.7,365.0 507.7,375.0" fill="none" stroke="#1a1a1a" stroke-width="0.7" />
<polyline points="509.2,364.2 509.2,374.2" fill="none" stroke="#1a1a1a" stroke-width="0.7" />
<polyline points="510.7,363.5 510.7,373.5" fill="none" stroke="#1a1a1a" stroke-width="0.7" />
<polyline points="512.2,362.7 512.2,372.7" fill="none" stroke="#1a1a1a" stroke-width="0.7" />
<polyline points="513.6,361.8 513.6,371.8" fill="none" stroke="#1a1a1a" stroke-width="0.7" />
<polyline points="515.0,361.0 515.0,371.0" fill="none" stroke="#1a1a1a" stroke-width="0.7" />
<polyline points="516.3,360.1 516.3,370.1" fill="none" stroke="#1a1a1a" stroke-width="0.7" />
<polyline points="517.6,359.2 517.6,369.2" fill="none" stroke="#1a1a1a" stroke-width="0.7" />
<polyline points="518.9,358.2 518.9,368.2" fill="none" stroke="#1a1a1a" stroke-width="0.7" />
<polyline points="520.1,357.2 520.1,367.2" fill="none" stroke="#1a1a1a" stroke-width="0.7" />
<polyline points="521.3,356.1 521.3,366.1" fill="none" stroke="#1a1a1a" stroke-width="0.7" />
<polyline points="522.5,355.1 522.5,365.1" fill="none" stroke="#1a1a1a" stroke-width="0.7" />
<polyline points="523.8,354.0 523.8,364.0" fill="none" stroke="#1a1a1a" stroke-width="0.7" />
<polyline points="525.0,353.0 525.0,363.0" fill="none" stroke="#1a1a1a" stroke-width="0.7" />
<polyline points="526.2,351.9 526.2,361.9" fill="none" stroke="#1a1a1a" stroke-width="0.7" />
<polyline points="527.5,350.9 527.5,360.9" fill="none" stroke="#1a1a1a" stroke-width="0.7" />
<polyline points="528.8,349.8 528.8,359.8" fill="none" stroke="#1a1a1a" stroke-width="0.7" />
<polyline points="530.0,348.7 530.0,358.7" fill="none" stroke="#1a1a1a" stroke-width="0.7" />
<polyline points="531.2,347.6 531.2,357.6" fill="none" stroke="#1a1a1a" stroke-width="0.7" />
<polyline points="532.5,346.6 532.5,356.6" fill="none" stroke="#1a1a1a" stroke-width="0.7" />
<polyline points="533.8,345.5 533.8,355.5" fill="none" stroke="#1a1a1a" stroke-width="0.7" />
<polyline points="535.0,344.5 535.0,354.5" fill="none" stroke="#1a1a1a" stroke-width="0.7" />
<polyline points="536.2,343.5 536.2,353.5" fill="none" stroke="#1a1a1a" stroke-width="0.7" />
<polyline points="537.5,342.6 537.5,352.6" fill="none" stroke="#1a1a1a" stroke-width="0.7" />
<polyline points="538.7,341.6 538.7,351.6" fill="none" stroke="#1a1a1a" stroke-width="0.7" />
<polyline points="539.9,340.7 539.9,350.7" fill="none" stroke="#1a1a1a" stroke-width="0.7" />
<polyline points="541.1,339.8 541.1,349.8" fill="none" stroke="#1a1a1a" stroke-width="0.7" />
<polyline points="542.4,338.9 542.4,348.9" fill="none" stroke="#1a1a1a" stroke-width="0.7" />
<polyline points="543.7,337.9 543.7,347.9" fill="none" stroke="#1a1a1a" stroke-width="0.7" />
<polyline points="545.0,337.0 545.0,347.0" fill="none" stroke="#1a1a1a" stroke-width="0.7" />
<polyline points="546.4,336.0 546.4,346.0" fill="none" stroke="#1a1a1a" stroke-width="0.7" />
<polyline points="547.8,335.1 547.8,345.1" fill="none" stroke="#1a1a1a" stroke-width="0.7" />
<polyline points="549.3,334.1 549.3,344.1" fill="none" stroke="#1a1a1a" stroke-width="0.7" />
<polyline points="550.8,333.1 550.8,343.1" fill="none" stroke="#1a1a1a" stroke-width="0.7" />
<polyline points="552.3,332.2 552.3,342.2" fill="none" stroke="#1a1a1a" stroke-width="0.7" />
<polyline points="553.9,331.2 553.9,341.2" fill="none" stroke="#1a1a1a" stroke-width="0.7" />
<polyline points="555.4,330.4 555.4,340.4" fill="none" stroke="#1a1a1a" stroke-width="0.7" />
<polyline points="557.0,329.5 557.0,339.5" fill="none" stroke="#1a1a1a" stroke-width="0.7" />
<polyline points="558.6,328.7 558.6,338.7" fill="none" stroke="#1a1a1a" stroke-width="0.7" />
<polyline points="560.2,327.9 560.2,337.9" fill="none" stroke="#1a1a1a" stroke-width="0.7" />
<polyline points="561.8,327.2 561.8,337.2" fill="none" stroke="#1a1a1a" stroke-width="0.7" />
<polyline points="563.5,326.5 563.5,336.5" fill="none" stroke="#1a1a1a" stroke-width="0.7" />
<polyline points="565.1,325.9 565.1,335.9" fill="none" stroke="#1a1a1a" stroke-width="0.7" />
<polyline points="566.8,325.2 566.8,335.2" fill="none" stroke="#1a1a1a" stroke-width="0.7" />
<polyline points="568.4,324.6 568.4,334.6" fill="none" stroke="#1a1a1a" stroke-width="0.7" />
<polyline points="570.0,324.0 570.0,334.0" fill="none" stroke="#1a1a1a" stroke-width="0.7" />
<polyline points="571.6,323.4 571.6,333.4" fill="none" stroke="#1a1a1a" stroke-width="0.7" />
<polyline points="573.1,322.9 573.1,332.9" fill="none" stroke="#1a1a1a" stroke-width="0.7" />
<polyline points="574.6,322.4 574.6,332.4" fill="none" stroke="#1a1a1a" stroke-width="0.7" />
<polyline points="576.2,321.9 576.2,331.9" fill="none" stroke="#1a1a1a" stroke-width="0.7" />
<polyline points="577.7,321.4 577.7,331.4" fill="none" stroke="#1a1a1a" stroke-width="0.7" />
<polyline points="579.2,320.9 579.2,330.9" fill="none" stroke="#1a1a1a" stroke-width="0.7" />
<polyline points="580.9,320.5 580.9,330.5" fill="none" stroke="#1a1a1a" stroke-width="0.7" />
<polyline points="582.5,320.0 582.5,330.0" fill="none" stroke="#1a1a1a" stroke-width="0.7" />
<polyline points="584.2,319.5 584.2,329.5" fill="none" stroke="#1a1a1a" stroke-width="0.7" />
<polyline points="586.0,319.1 586.0,329.1" fill="none" stroke="#1a1a1a" stroke-width="0.7" />
<polyline points="587.8,318.6 587.8,328.6" fill="none" stroke="#1a1a1a" stroke-width="0.7" />
<polyline points="589.6,318.1 589.6,328.1" fill="none" stroke="#1a1a1a" stroke-width="0.7" />
<polyline points="591.4,317.7 591.4,327.7" fill="none" stroke="#1a1a1a" stroke-width="0.7" />
<polyline points="593.3,317.3 593.3,327.3" fill="none" stroke="#1a1a1a" stroke-width="0.7" />
<polyline points="595.1,316.9 595.1,326.9" fill="none" stroke="#1a1a1a" stroke-width="0.7" />
<polyline points="597.0,316.5 597.0,326.5" fill="none" stroke="#1a1a1a" stroke-width="0.7" />
<polyline points="598.8,316.2 598.8,326.2" fill="none" stroke="#1a1a1a" stroke-width="0.7" />
<polyline points="600.7,315.9 600.7,325.9" fill="none" stroke="#1a1a1a" stroke-width="0.7" />
<polyline points="602.5,315.6 602.5,325.6" fill="none" stroke="#1a1a1a" stroke-width="0.7" />
<polyline points="604.4,315.4 604.4,325.4" fill="none" stroke="#1a1a1a" stroke-width="0.7" />
<polyline points="606.3,315.2 606.3,325.2" fill="none" stroke="#1a1a1a" stroke-width="0.7" />
<polyline points="608.2,314.9 608.2,324.9" fill="none" stroke="#1a1a1a" stroke-width="0.7" />
<polyline points="610.4,314.7 610.4,324.7" fill="none" stroke="#1a1a1a" stroke-width="0.7" />
<polyline points="612.5,314.5 612.5,324.5" fill="none" stroke="#1a1a1a" stroke-width="0.7" />
<polyline points="614.9,314.3 614.9,324.3" fill="none" stroke="#1a1a1a" stroke-width="0.7" />
<polyline points="617.2,314.1 617.2,324.1" fill="none" stroke="#1a1a1a" stroke-width="0.7" />
<polyline points="619.8,313.9 619.8,323.9" fill="none" stroke="#1a1a1a" stroke-width="0.7" />
<polyline points="622.3,313.7 622.3,323.7" fill="none" stroke="#1a1a1a" stroke-width="0.7" />
<polyline points="625.0,313.5 625.0,323.5" fill="none" stroke="#1a1a1a" stroke-width="0.7" />
<polyline points="627.7,313.3 627.7,323.3" fill="none" stroke="#1a1a1a" stroke-width="0.7" />
<polyline points="630.3,313.1 630.3,323.1" fill="none" stroke="#1a1a1a" stroke-width="0.7" />
<polyline points="633.0,313.0 633.0,323.0" fill="none" stroke="#1a1a1a" stroke-width="0.7" />
<polyline points="635.7,312.9 635.7,322.9" fill="none" stroke="#1a1a1a" stroke-width="0.7" />
<polyline points="638.4,312.8 638.4,322.8" fill="none" stroke="#1a1a1a" stroke-width="0.7" />
<polyline points="641.1,312.7 641.1,322.7" fill="none" stroke="#1a1a1a" stroke-width="0.7" />
<polyline points="643.8,312.6 643.8,322.6" fill="none" stroke="#1a1a1a" stroke-width="0.7" />
<polyline points="646.6,312.5 646.6,322.5" fill="none" stroke="#1a1a1a" stroke-width="0.7" />
<polyline points="649.4,312.5 649.4,322.5" fill="none" stroke="#1a1a1a" stroke-width="0.7" />
<polyline points="652.2,312.5 652.2,322.5" fill="none" stroke="#1a1a1a" stroke-width="0.7" />
<polyline points="655.0,312.5 655.0,322.5" fill="none" stroke="#1a1a1a" stroke-width="0.7" />
<polyline points="657.9,312.6 657.9,322.6" fill="none" stroke="#1a1a1a" stroke-width="0.7" />
<polyline points="660.7,312.7 660.7,322.7" fill="none" stroke="#1a1a1a" stroke-width="0.7" />
<polyline points="663.6,312.8 663.6,322.8" fill="none" stroke="#1a1a1a" stroke-width="0.7" />
<polyline points="666.5,313.0 666.5,323.0" fill="none" stroke="#1a1a1a" stroke-width="0.7" />
<polyline points="669.4,313.1 669.4,323.1" fill="none" stroke="#1a1a1a" stroke-width="0.7" />
<polyline points="672.3,313.3 672.3,323.3" fill="none" stroke="#1a1a1a" stroke-width="0.7" />
<polyline points="675.1,313.6 675.1,323.6" fill="none" stroke="#1a1a1a" stroke-width="0.7" />
<polyline points="678.0,313.8 678.0,323.8" fill="none" stroke="#1a1a1a" stroke-width="0.7" />
<polyline points="680.8,314.1 680.8,324.1" fill="none" stroke="#1a1a1a" stroke-width="0.7" />
<polyline points="683.6,314.3 683.6,324.3" fill="none" stroke="#1a1a1a" stroke-width="0.7" />
<polyline points="686.4,314.6 686.4,324.6" fill="none" stroke="#1a1a1a" stroke-width="0.7" />
<polyline points="689.2,315.0 689.2,325.0" fill="none" stroke="#1a1a1a" stroke-width="0.7" />
<polyline points="691.9,315.3 691.9,325.3" fill="none" stroke="#1a1a1a" stroke-width="0.7" />
<polyline points="694.7,315.7 694.7,325.7" fill="none" stroke="#1a1a1a" stroke-width="0.7" />
<polyline points="697.3,316.1 697.3,326.1" fill="none" stroke="#1a1a1a" stroke-width="0.7" />
<polyline points="700.0,316.5 700.0,326.5" fill="none" stroke="#1a1a1a" stroke-width="0.7" />
<polyline points="702.6,317.0 702.6,327.0" fill="none" stroke="#1a1a1a" stroke-width="0.7" />
<polyline points="705.2,317.5 705.2,327.5" fill="none" stroke="#1a1a1a" stroke-width="0.7" />
<polyline points="707.7,318.0 707.7,328.0" fill="none" stroke="#1a1a1a" stroke-width="0.7" />
<polyline points="710.3,318.6 710.3,328.6" fill="none" stroke="#1a1a1a" stroke-width="0.7" />
<polyline points="712.8,319.2 712.8,329.2" fill="none" stroke="#1a1a1a" stroke-width="0.7" />
<polyline points="715.2,319.8 715.2,329.8" fill="none" stroke="#1a1a1a" stroke-width="0.7" />
<polyline points="717.6,320.4 717.6,330.4" fill="none" stroke="#1a1a1a" stroke-width="0.7" />
<polyline points="720.0,321.0 720.0,331.0" fill="none" stroke="#1a1a1a" stroke-width="0.7" />
<polyline points="722.3,321.7 722.3,331.7" fill="none" stroke="#1a1a1a" stroke-width="0.7" />
<polyline points="724.6,322.3 724.6,332.3" fill="none" stroke="#1a1a1a" stroke-width="0.7" />
<polyline points="726.9,323.0 726.9,333.0" fill="none" stroke="#1a1a1a" stroke-width="0.7" />
<polyline points="729.2,323.7 729.2,333.7" fill="none" stroke="#1a1a1a" stroke-width="0.7" />
<polyline points="731.3,324.4 731.3,334.4" fill="none" stroke="#1a1a1a" stroke-width="0.7" />
<polyline points="733.5,325.1 733.5,335.1" fill="none" stroke="#1a1a1a" stroke-width="0.7" />
<polyline points="735.5,325.8 735.5,335.8" fill="none" stroke="#1a1a1a" stroke-width="0.7" />
<polyline points="737.5,326.5 737.5,336.5" fill="none" stroke="#1a1a1a" stroke-width="0.7" />
<polyline points="739.4,327.1 739.4,337.1" fill="none" stroke="#1a1a1a" stroke-width="0.7" />
<polyline points="741.2,327.8 741.2,337.8" fill="none" stroke="#1a1a1a" stroke-width="0.7" />
<polyline points="742.9,328.4 742.9,338.4" fill="none" stroke="#1a1a1a" stroke-width="0.7" />
<polyline points="744.6,329.0 744.6,339.0" fill="none" stroke="#1a1a1a" stroke-width="0.7" />
<polyline points="746.2,329.6 746.2,339.6" fill="none" stroke="#1a1a1a" stroke-width="0.7" />
<polyline points="747.9,330.3 747.9,340.3" fill="none" stroke="#1a1a1a" stroke-width="0.7" />
<polyline points="749.4,330.9 749.4,340.9" fill="none" stroke="#1a1a1a" stroke-width="0.7" />
<polyline points="751.0,331.5 751.0,341.5" fill="none" stroke="#1a1a1a" stroke-width="0.7" />
<polyline points="752.5,332.1 752.5,342.1" fill="none" stroke="#1a1a1a" stroke-width="0.7" />
<polyline points="754.1,332.8 754.1,342.8" fill="none" stroke="#1a1a1a" stroke-width="0.7" />
<polyline points="755.6,333.4 755.6,343.4" fill="none" stroke="#1a1a1a" stroke-width="0.7" />
<polyline points="757.1,334.0 757.1,344.0" fill="none" stroke="#1a1a1a" stroke-width="0.7" />
<polyline points="758.5,334.7 758.5,344.7" fill="none" stroke="#1a1a1a" stroke-width="0.7" />
<polyline points="759.9,335.3 759.9,345.3" fill="none" stroke="#1a1a1a" stroke-width="0.7" />
<polyline points="761.2,335.9 761.2,345.9" fill="none" stroke="#1a1a1a" stroke-width="0.7" />
<polyline points="762.5,336.5 762.5,346.5" fill="none" stroke="#1a1a1a" stroke-width="0.7" />
<polyline points="763.7,337.1 763.7,347.1" fill="none" stroke="#1a1a1a" stroke-width="0.7" />
<polyline points="764.9,337.6 764.9,347.6" fill="none" stroke="#1a1a1a" stroke-width="0.7" />
<polyline points="766.0,338.2 766.0,348.2" fill="none" stroke="#1a1a1a" stroke-width="0.7" />
<polyline points="767.1,338.7 767.1,348.7" fill="none" stroke="#1a1a1a" stroke-width="0.7" />
<polyline points="768.1,339.3 768.1,349.3" fill="none" stroke="#1a1a1a" stroke-width="0.7" />
<polyline points="769.1,339.8 769.1,349.8" fill="none" stroke="#1a1a1a" stroke-width="0.7" />
<polyline points="770.0,340.4 770.0,350.4" fill="none" stroke="#1a1a1a" stroke-width="0.7" />
<polyline points="771.0,341.0 771.0,351.0" fill="none" stroke="#1a1a1a" stroke-width="0.7" />
<polyline points="771.9,341.6 771.9,351.6" fill="none" stroke="#1a1a1a" stroke-width="0.7" />
<polyline points="772.8,342.3 772.8,352.3" fill="none" stroke="#1a1a1a" stroke-width="0.7" />
<polyline points="773.6,343.0 773.6,353.0" fill="none" stroke="#1a1a1a" stroke-width="0.7" />
<polyline points="774.4,343.6 774.4,353.6" fill="none" stroke="#1a1a1a" stroke-width="0.7" />
<polyline points="775.2,344.3 775.2,354.3" fill="none" stroke="#1a1a1a" stroke-width="0.7" />
<polyline points="776.0,345.0 776.0,355.0" fill="none" stroke="#1a1a1a" stroke-width="0.7" />
<polyline points="776.7,345.8 776.7,355.8" fill="none" stroke="#1a1a1a" stroke-width="0.7" />
<polyline points="777.5,346.5 777.5,356.5" fill="none" stroke="#1a1a1a" stroke-width="0.7" />
<polyline points="778.2,347.3 778.2,357.3" fill="none" stroke="#1a1a1a" stroke-width="0.7" />
<polyline points="779.0,348.0 779.0,358.0" fill="none" stroke="#1a1a1a" stroke-width="0.7" />
<polyline points="779.7,348.8 779.7,358.8" fill="none" stroke="#1a1a1a" stroke-width="0.7" />
<polyline points="780.4,349.6 780.4,359.6" fill="none" stroke="#1a1a1a" stroke-width="0.7" />
<polyline points="781.0,350.5 781.0,360.5" fill="none" stroke="#1a1a1a" stroke-width="0.7" />
<polyline points="781.7,351.3 781.7,361.3" fill="none" stroke="#1a1a1a" stroke-width="0.7" />
<polyline points="782.4,352.1 782.4,362.1" fill="none" stroke="#1a1a1a" stroke-width="0.7" />
<polyline points="783.0,353.0 783.0,363.0" fill="none" stroke="#1a1a1a" stroke-width="0.7" />
<polyline points="783.7,354.0 783.7,364.0" fill="none" stroke="#1a1a1a" stroke-width="0.7" />
<polyline points="784.3,355.0 784.3,365.0" fill="none" stroke="#1a1a1a" stroke-width="0.7" />
<polyline points="785.0,356.1 785.0,366.1" fill="none" stroke="#1a1a1a" stroke-width="0.7" />
<polyline points="785.7,357.2 785.7,367.2" fill="none" stroke="#1a1a1a" stroke-width="0.7" />
<polyline points="786.3,358.1 786.3,368.1" fill="none" stroke="#1a1a1a" stroke-width="0.7" />
<polyline points="786.9,359.1 786.9,369.1" fill="none" stroke="#1a1a1a" stroke-width="0.7" />
<polyline points="787.3,359.8 787.3,369.8" fill="none" stroke="#1a1a1a" stroke-width="0.7" />
<polyline points="787.7,360.5 787.7,370.5" fill="none" stroke="#1a1a1a" stroke-width="0.7" />
<path d="M542.8 391.0l5 -4.5m2 4.5l5 -4.5 M579.9 437.5l5 -4.5m2 4.5l5 -4.5 M655.1 342.7l5 -4.5m2 4.5l5 -4.5 M645.6 429.1l5 -4.5m2 4.5l5 -4.5 M548.9 395.2l5 -4.5m2 4.5l5 -4.5 M529.6 467.2l5 -4.5m2 4.5l5 -4.5 M627.7 429.6l5 -4.5m2 4.5l5 -4.5 M588.4 369.9l5 -4.5m2 4.5l5 -4.5 M541.1 392.2l5 -4.5m2 4.5l5 -4.5 M718.1 429.3l5 -4.5m2 4.5l5 -4.5 M688.7 345.2l5 -4.5m2 4.5l5 -4.5 M520.4 377.5l5 -4.5m2 4.5l5 -4.5 M561.2 348.3l5 -4.5m2 4.5l5 -4.5 M708.8 398.6l5 -4.5m2 4.5l5 -4.5 M608.9 423.2l5 -4.5m2 4.5l5 -4.5 M676.3 422.6l5 -4.5m2 4.5l5 -4.5 M586.9 435.5l5 -4.5m2 4.5l5 -4.5 M752.5 384.7l5 -4.5m2 4.5l5 -4.5 M729.9 354.3l5 -4.5m2 4.5l5 -4.5 M485.2 479.8l5 -4.5m2 4.5l5 -4.5 M536.8 453.6l5 -4.5m2 4.5l5 -4.5 M696.3 396.3l5 -4.5m2 4.5l5 -4.5 M594.4 425.5l5 -4.5m2 4.5l5 -4.5 M637.2 420.9l5 -4.5m2 4.5l5 -4.5 M640.8 400.7l5 -4.5m2 4.5l5 -4.5 M671.9 334.0l5 -4.5m2 4.5l5 -4.5 M720.9 373.0l5 -4.5m2 4.5l5 -4.5 M673.1 402.0l5 -4.5m2 4.5l5 -4.5 M755.8 364.2l5 -4.5m2 4.5l5 -4.5 M679.0 374.0l5 -4.5m2 4.5l5 -4.5 M654.9 392.6l5 -4.5m2 4.5l5 -4.5 M556.4 360.3l5 -4.5m2 4.5l5 -4.5 M611.3 431.2l5 -4.5m2 4.5l5 -4.5 M500.2 397.1l5 -4.5m2 4.5l5 -4.5 M592.3 369.0l5 -4.5m2 4.5l5 -4.5 M480.7 471.5l5 -4.5m2 4.5l5 -4.5 M696.7 346.3l5 -4.5m2 4.5l5 -4.5 M487.6 391.2l5 -4.5m2 4.5l5 -4.5" stroke="#c9c9c9" stroke-width="0.6" fill="none"/>
<path d="M993 361.500C950 362 925 365 900 370.500 C860 380 820 395 782.500 407.500 L671.500 483.500" fill="none" stroke="#1a1a1a" stroke-width=".55"/>
<polygon points="669.5,485.0 674.0,480.2 675.3,482.5" fill="#1a1a1a" />
<path d="M993 408C950 408.500 925 411 902.500 416 C860 425 820 440 780 454 L671.500 529" fill="none" stroke="#1a1a1a" stroke-width=".55"/>
<polygon points="669.5,530.5 674.0,525.7 675.3,528.0" fill="#1a1a1a" />
<polygon points="558.0,541.4 897.5,442.6 897.5,494.2 558.0,593.0" fill="#2f2f2f" />
<polygon points="787.9,360.7 786.5,385.0 781.4,416.0 776.0,444.7 769.8,475.7 766.5,481.0 766.5,510.6 897.5,472.5 897.5,332.5 835.0,350.5 811.0,357.5" fill="#363636" />
<polygon points="560.8,572.6 598.0,561.8 598.0,577.8 560.8,588.6" fill="#7f7f7f" />
<polygon points="560.8,572.6 598.0,561.8 598.0,564.8 560.8,582.2" fill="#5e5e5e" />
<polygon points="560.8,582.6 598.0,576.9 598.0,577.8 560.8,588.6" fill="#6a6a6a" />
<polygon points="560.8,543.6 598.0,532.8 598.0,559.7 560.8,570.5" fill="#7f7f7f" />
<polygon points="560.8,543.6 598.0,532.8 598.0,535.8 560.8,553.3" fill="#5e5e5e" />
<polygon points="560.8,564.4 598.0,558.7 598.0,559.7 560.8,570.5" fill="#6a6a6a" />
<polygon points="600.8,561.0 640.0,549.5 640.0,565.5 600.8,576.9" fill="#7f7f7f" />
<polygon points="600.8,561.0 640.0,549.5 640.0,552.6 600.8,570.6" fill="#5e5e5e" />
<polygon points="600.8,570.9 640.0,564.6 640.0,565.5 600.8,576.9" fill="#6a6a6a" />
<polygon points="600.8,532.0 640.0,520.6 640.0,547.4 600.8,558.8" fill="#7f7f7f" />
<polygon points="600.8,532.0 640.0,520.6 640.0,523.6 600.8,541.6" fill="#5e5e5e" />
<polygon points="600.8,552.8 640.0,546.5 640.0,547.4 600.8,558.8" fill="#6a6a6a" />
<polygon points="642.8,548.7 682.5,537.2 682.5,553.2 642.8,564.7" fill="#7f7f7f" />
<polygon points="642.8,548.7 682.5,537.2 682.5,540.2 642.8,558.4" fill="#5e5e5e" />
<polygon points="642.8,558.7 682.5,552.3 682.5,553.2 642.8,564.7" fill="#6a6a6a" />
<polygon points="642.8,519.8 682.5,508.2 682.5,535.1 642.8,546.6" fill="#7f7f7f" />
<polygon points="642.8,519.8 682.5,508.2 682.5,511.2 642.8,529.4" fill="#5e5e5e" />
<polygon points="642.8,540.6 682.5,534.2 682.5,535.1 642.8,546.6" fill="#6a6a6a" />
<polygon points="685.3,536.4 725.0,524.8 725.0,540.8 685.3,552.4" fill="#7f7f7f" />
<polygon points="685.3,536.4 725.0,524.8 725.0,527.8 685.3,546.0" fill="#5e5e5e" />
<polygon points="685.3,546.3 725.0,539.9 725.0,540.8 685.3,552.4" fill="#6a6a6a" />
<polygon points="685.3,507.4 725.0,495.8 725.0,522.7 685.3,534.3" fill="#7f7f7f" />
<polygon points="685.3,507.4 725.0,495.8 725.0,498.9 685.3,517.0" fill="#5e5e5e" />
<polygon points="685.3,528.2 725.0,521.8 725.0,522.7 685.3,534.3" fill="#6a6a6a" />
<polygon points="727.8,524.0 766.0,512.9 766.0,528.9 727.8,540.0" fill="#7f7f7f" />
<polygon points="727.8,524.0 766.0,512.9 766.0,515.9 727.8,533.7" fill="#5e5e5e" />
<polygon points="727.8,534.0 766.0,528.0 766.0,528.9 727.8,540.0" fill="#6a6a6a" />
<polygon points="727.8,495.0 766.0,483.9 766.0,510.8 727.8,521.9" fill="#7f7f7f" />
<polygon points="727.8,495.0 766.0,483.9 766.0,486.9 727.8,504.7" fill="#5e5e5e" />
<polygon points="727.8,515.8 766.0,509.9 766.0,510.8 727.8,521.9" fill="#6a6a6a" />
<polygon points="768.8,512.1 787.5,506.6 787.5,522.6 768.8,528.1" fill="#7f7f7f" />
<polygon points="768.8,512.1 787.5,506.6 787.5,509.6 768.8,521.7" fill="#5e5e5e" />
<polygon points="768.8,522.0 787.5,521.7 787.5,522.6 768.8,528.1" fill="#6a6a6a" />
<polygon points="768.8,483.1 787.5,477.6 787.5,504.5 768.8,510.0" fill="#7f7f7f" />
<polygon points="768.8,483.1 787.5,477.6 787.5,480.7 768.8,492.7" fill="#5e5e5e" />
<polygon points="768.8,503.9 787.5,503.6 787.5,504.5 768.8,510.0" fill="#6a6a6a" />
<polygon points="790.3,505.8 811.0,499.8 811.0,515.8 790.3,521.8" fill="#7f7f7f" />
<polygon points="790.3,505.8 811.0,499.8 811.0,502.8 790.3,515.5" fill="#5e5e5e" />
<polygon points="790.3,515.8 811.0,514.9 811.0,515.8 790.3,521.8" fill="#6a6a6a" />
<polygon points="790.3,476.8 811.0,470.8 811.0,497.7 790.3,503.7" fill="#7f7f7f" />
<polygon points="790.3,476.8 811.0,470.8 811.0,473.8 790.3,486.5" fill="#5e5e5e" />
<polygon points="790.3,497.7 811.0,496.8 811.0,497.7 790.3,503.7" fill="#6a6a6a" />
<polygon points="813.8,499.0 833.0,493.4 833.0,509.4 813.8,515.0" fill="#7f7f7f" />
<polygon points="813.8,499.0 833.0,493.4 833.0,496.4 813.8,508.6" fill="#5e5e5e" />
<polygon points="813.8,508.9 833.0,508.5 833.0,509.4 813.8,515.0" fill="#6a6a6a" />
<polygon points="835.8,492.6 851.0,488.1 851.0,504.1 835.8,508.6" fill="#7f7f7f" />
<polygon points="835.8,492.6 851.0,488.1 851.0,491.2 835.8,502.2" fill="#5e5e5e" />
<polygon points="835.8,502.5 851.0,503.2 851.0,504.1 835.8,508.6" fill="#6a6a6a" />
<polygon points="853.8,487.3 892.0,476.2 892.0,492.2 853.8,503.3" fill="#7f7f7f" />
<polygon points="853.8,487.3 892.0,476.2 892.0,479.2 853.8,497.0" fill="#5e5e5e" />
<polygon points="853.8,497.3 892.0,491.3 892.0,492.2 853.8,503.3" fill="#6a6a6a" />
<polygon points="699.0,507.5 722.0,499.0 722.0,521.0 716.0,519.5" fill="#c9707c" />
<polygon points="724.0,496.1 727.5,495.1 727.5,520.8 724.0,521.8" fill="#d27884" />
<polygon points="773.2,466.1 811.5,454.6 811.5,467.6 769.2,480.0" fill="#858585" />
<polygon points="774.2,454.1 811.5,442.1 811.5,454.6 773.2,466.1" fill="#444" />
<polygon points="801.4,455.8 805.6,454.6 805.6,466.0 801.4,467.3" fill="#f4f4f4" stroke="#222" stroke-width="0.5" stroke-linejoin="round" />
<polygon points="821.6,451.4 828.0,449.6 828.0,462.5 821.6,464.4" fill="#eeb06c" stroke="#3a2a1a" stroke-width="0.5" stroke-linejoin="round" />
<polyline points="824.8,463.5 824.8,450.5" fill="none" stroke="#8a5a2a" stroke-width="0.4" />
<polygon points="778.5,437.4 811.5,427.5 811.5,440.5 774.5,451.3" fill="#858585" />
<polygon points="779.5,425.4 811.5,415.0 811.5,427.5 778.5,437.4" fill="#444" />
<polygon points="801.4,428.6 805.6,427.4 805.6,438.9 801.4,440.1" fill="#f4f4f4" stroke="#222" stroke-width="0.5" stroke-linejoin="round" />
<polygon points="821.6,424.3 828.0,422.4 828.0,435.4 821.6,437.2" fill="#eeb06c" stroke="#3a2a1a" stroke-width="0.5" stroke-linejoin="round" />
<polyline points="824.8,436.3 824.8,423.3" fill="none" stroke="#8a5a2a" stroke-width="0.4" />
<polygon points="783.5,408.8 811.5,400.3 811.5,413.3 779.5,422.6" fill="#858585" />
<polygon points="784.5,396.8 811.5,387.8 811.5,400.3 783.5,408.8" fill="#444" />
<polygon points="801.4,401.5 805.6,400.3 805.6,411.7 801.4,412.9" fill="#f4f4f4" stroke="#222" stroke-width="0.5" stroke-linejoin="round" />
<polygon points="821.6,397.1 828.0,395.2 828.0,408.2 821.6,410.1" fill="#eeb06c" stroke="#3a2a1a" stroke-width="0.5" stroke-linejoin="round" />
<polyline points="824.8,409.2 824.8,396.2" fill="none" stroke="#8a5a2a" stroke-width="0.4" />
<polygon points="787.6,380.4 811.5,373.2 811.5,386.2 783.6,394.3" fill="#858585" />
<polygon points="788.6,368.4 811.5,360.7 811.5,373.2 787.6,380.4" fill="#444" />
<polygon points="801.4,374.3 805.6,373.1 805.6,384.6 801.4,385.8" fill="#f4f4f4" stroke="#222" stroke-width="0.5" stroke-linejoin="round" />
<polygon points="821.6,369.9 828.0,368.1 828.0,381.1 821.6,382.9" fill="#eeb06c" stroke="#3a2a1a" stroke-width="0.5" stroke-linejoin="round" />
<polyline points="824.8,382.0 824.8,369.0" fill="none" stroke="#8a5a2a" stroke-width="0.4" />
<polygon points="785.8,399.4 788.6,398.6 788.6,524.7 785.8,525.5" fill="#2a2a2a" />
<polygon points="811.0,338.0 835.0,331.5 835.0,351.0 811.0,358.0" fill="#3c3c3c" />
<polygon points="811.0,338.0 813.5,337.3 813.5,344.0 811.0,344.7" fill="#e8e8e8" />
<polygon points="832.5,332.2 835.0,331.5 835.0,338.5 832.5,339.2" fill="#e8e8e8" />
<polygon points="835.5,436.5 892.0,420.1 892.0,443.9 835.5,460.4" fill="#fbfbfb" />
<polygon points="835.5,436.5 892.0,420.1 892.0,422.8 835.5,439.2" fill="#d0d0d0" />
<polygon points="835.5,409.4 892.0,392.9 892.0,416.8 835.5,433.2" fill="#fbfbfb" />
<polygon points="835.5,409.4 892.0,392.9 892.0,395.6 835.5,412.1" fill="#d0d0d0" />
<polygon points="835.5,382.2 892.0,365.8 892.0,389.6 835.5,406.0" fill="#fbfbfb" />
<polygon points="835.5,382.2 892.0,365.8 892.0,368.5 835.5,384.9" fill="#d0d0d0" />
<polygon points="835.5,355.0 892.0,338.6 892.0,362.4 835.5,378.9" fill="#fbfbfb" />
<polygon points="835.5,355.0 892.0,338.6 892.0,341.3 835.5,357.8" fill="#d0d0d0" />
<polygon points="835.5,462.8 892.0,446.3 892.0,471.4 835.5,487.8" fill="#d77683" />
<polygon points="835.0,343.7 897.5,325.5 897.5,333.7 835.0,351.9" fill="#585858" />
<polyline points="835.0,343.4 897.5,325.2" fill="none" stroke="#222" stroke-width="0.7" />
<polyline points="811.5,497.5 897.0,472.6" fill="none" stroke="#1c1c1c" stroke-width="1.5" />
<polyline points="835.0,493.2 897.0,475.2" fill="none" stroke="#1c1c1c" stroke-width="1.1" />
<polyline points="811.5,467.6 897.0,442.8" fill="none" stroke="#1c1c1c" stroke-width="1.5" />
<polyline points="835.0,463.3 897.0,445.3" fill="none" stroke="#1c1c1c" stroke-width="1.1" />
<polyline points="811.5,440.5 897.0,415.6" fill="none" stroke="#1c1c1c" stroke-width="1.5" />
<polyline points="835.0,436.2 897.0,418.1" fill="none" stroke="#1c1c1c" stroke-width="1.1" />
<polyline points="811.5,413.3 897.0,388.4" fill="none" stroke="#1c1c1c" stroke-width="1.5" />
<polyline points="835.0,409.0 897.0,391.0" fill="none" stroke="#1c1c1c" stroke-width="1.1" />
<polyline points="811.5,386.2 897.0,361.3" fill="none" stroke="#1c1c1c" stroke-width="1.5" />
<polyline points="835.0,381.9 897.0,363.8" fill="none" stroke="#1c1c1c" stroke-width="1.1" />
<polyline points="811.5,359.0 897.0,334.1" fill="none" stroke="#1c1c1c" stroke-width="1.5" />
<polyline points="835.0,354.7 897.0,336.7" fill="none" stroke="#1c1c1c" stroke-width="1.1" />
<polyline points="766.5,480.7 811.5,467.6" fill="none" stroke="#1c1c1c" stroke-width="1.4" />
<polyline points="766.5,453.6 811.5,440.5" fill="none" stroke="#1c1c1c" stroke-width="1.4" />
<polyline points="766.5,426.4 811.5,413.3" fill="none" stroke="#1c1c1c" stroke-width="1.4" />
<polyline points="766.5,399.3 811.5,386.2" fill="none" stroke="#1c1c1c" stroke-width="1.4" />
<polyline points="851.0,347.2 851.0,506.0" fill="none" stroke="#1f1f1f" stroke-width="2.0" />
<polyline points="833.8,337.1 833.8,511.0" fill="none" stroke="#1f1f1f" stroke-width="2.2" />
<polyline points="811.5,355.7 811.5,517.4" fill="none" stroke="#1f1f1f" stroke-width="1.6" />
<polygon points="892.0,323.0 897.5,323.8 897.5,495.0 892.0,496.5" fill="#2b2b2b" />
<polyline points="893.3,324.0 893.3,472.0" fill="none" stroke="#555" stroke-width="0.5" />
<polygon points="892.5,450.0 895.0,450.0 895.0,475.0 892.5,475.0" fill="#c9707c" />
<polygon points="598.0,530.1 600.8,529.3 600.8,578.8 598.0,579.6" fill="#262626" />
<polygon points="640.0,517.9 642.8,517.0 642.8,566.5 640.0,567.4" fill="#262626" />
<polygon points="682.5,505.5 685.3,504.7 685.3,554.2 682.5,555.0" fill="#262626" />
<polygon points="725.0,493.1 727.8,492.3 727.8,541.8 725.0,542.6" fill="#262626" />
<polygon points="766.0,481.2 768.8,480.4 768.8,529.9 766.0,530.7" fill="#262626" />
<polygon points="787.5,504.5 790.3,503.7 790.3,523.6 787.5,524.4" fill="#262626" />
<polygon points="811.0,497.7 813.8,496.9 813.8,516.8 811.0,517.6" fill="#262626" />
<polygon points="833.0,491.3 835.8,490.5 835.8,510.4 833.0,511.2" fill="#262626" />
<polygon points="851.0,486.0 853.8,485.2 853.8,505.1 851.0,506.0" fill="#262626" />
<polyline points="558.0,541.4 766.5,480.7" fill="none" stroke="#1a1a1a" stroke-width="1.3" />
<polyline points="558.0,543.5 766.5,482.9" fill="none" stroke="#bbb" stroke-width="0.5" />
<polyline points="558.0,571.3 897.5,472.5" fill="none" stroke="#1a1a1a" stroke-width="1.6" />
<polyline points="556.0,592.7 901.0,492.3" fill="none" stroke="#1d1d1d" stroke-width="3.0" />
<polyline points="558.0,532.5 558.0,594.0" fill="none" stroke="#1a1a1a" stroke-width="1.8" />
<polygon points="463.0,483.8 558.0,533.5 558.0,571.5 463.0,520.8" fill="#2e2e2e" />
<polygon points="467.0,501.9 487.0,512.4 487.0,532.4 467.0,521.9" fill="#3b3f45" stroke="#0d0d0d" stroke-width="0.9" stroke-linejoin="round" />
<polyline points="472.0,504.5 472.0,524.5" fill="none" stroke="#0d0d0d" stroke-width="0.8" />
<polyline points="477.0,507.1 477.0,527.1" fill="none" stroke="#0d0d0d" stroke-width="0.8" />
<polyline points="482.0,509.7 482.0,529.7" fill="none" stroke="#0d0d0d" stroke-width="0.8" />
<polyline points="467.0,506.9 487.0,517.4" fill="none" stroke="#0d0d0d" stroke-width="0.7" />
<polygon points="498.0,518.1 518.0,528.6 518.0,548.6 498.0,538.1" fill="#3b3f45" stroke="#0d0d0d" stroke-width="0.9" stroke-linejoin="round" />
<polyline points="503.0,520.7 503.0,540.7" fill="none" stroke="#0d0d0d" stroke-width="0.8" />
<polyline points="508.0,523.3 508.0,543.3" fill="none" stroke="#0d0d0d" stroke-width="0.8" />
<polyline points="513.0,526.0 513.0,546.0" fill="none" stroke="#0d0d0d" stroke-width="0.8" />
<polyline points="498.0,523.1 518.0,533.6" fill="none" stroke="#0d0d0d" stroke-width="0.7" />
<polygon points="530.0,534.9 553.0,546.9 553.0,566.9 530.0,554.9" fill="#3b3f45" stroke="#0d0d0d" stroke-width="0.9" stroke-linejoin="round" />
<polyline points="535.8,537.9 535.8,557.9" fill="none" stroke="#0d0d0d" stroke-width="0.8" />
<polyline points="541.5,540.9 541.5,560.9" fill="none" stroke="#0d0d0d" stroke-width="0.8" />
<polyline points="547.2,543.9 547.2,563.9" fill="none" stroke="#0d0d0d" stroke-width="0.8" />
<polyline points="530.0,539.9 553.0,551.9" fill="none" stroke="#0d0d0d" stroke-width="0.7" />
<polygon points="488.5,512.1 496.5,516.3 496.5,537.3 488.5,533.1" fill="#8b8b8b" />
<polygon points="520.0,528.6 528.0,532.8 528.0,553.8 520.0,549.6" fill="#8b8b8b" />
<polygon points="524.5,531.0 528.0,532.8 528.0,553.8 524.5,552.0" fill="#c0634a" />
<polygon points="463.0,487.3 558.0,537.0 558.0,549.0 463.0,498.3" fill="#c2674a" stroke="#3a1a0a" stroke-width="0.4" stroke-linejoin="round" />
<polyline points="463.0,484.6 558.0,534.3" fill="none" stroke="#111" stroke-width="2.6" />
<polyline points="463.5,486.7 558.0,536.1" fill="none" stroke="#fff" stroke-width="1.1" />
<polygon points="456.0,503.6 463.0,500.0 488.0,513.0 486.0,516.5" fill="#566066" stroke="#222" stroke-width="0.4" stroke-linejoin="round" />
<ellipse cx="456.8" cy="521.5" rx="1.1" ry="1.2" fill="#e8d8c0"/><path d="M456 523l1.800 0 .4 4-2.500 0z" fill="#eee" stroke="#333" stroke-width=".3"/><path d="M456 527l-.3 3.500M457.500 527l.4 3.500" stroke="#222" stroke-width=".7"/>
<polyline points="764.0,465.0 671.5,529.0" fill="none" stroke="#1a1a1a" stroke-width="0.55" />
<polygon points="669.5,530.5 674.0,525.7 675.3,528.0" fill="#1a1a1a" />
<polyline points="787.9,360.7 786.5,385.0 781.4,416.0 776.0,444.7 769.8,475.7 766.5,481.0" fill="none" stroke="#161616" stroke-width="1.2" />
<rect x="848.700" y="253" width="40.800" height="16.500" fill="#fff" stroke="#1a1a1a" stroke-width=".7"/>
<text x="851.3" y="265.8" font-size="11.4" fill="#1a1a1a" font-family="Liberation Sans, sans-serif" textLength="36.2" lengthAdjust="spacingAndGlyphs">+26.430</text>
<polyline points="848.7,269.5 842.5,269.5 808.7,326.2" fill="none" stroke="#1a1a1a" stroke-width="0.6" />
<rect x="929.500" y="280.500" width="41" height="16.500" fill="#fff" stroke="#1a1a1a" stroke-width=".7"/>
<text x="932.0" y="293.4" font-size="11.4" fill="#1a1a1a" font-family="Liberation Sans, sans-serif" textLength="36.4" lengthAdjust="spacingAndGlyphs">+24.700</text>
<polyline points="929.5,297.0 913.7,297.0 892.5,320.5" fill="none" stroke="#1a1a1a" stroke-width="0.6" />
<text x="994.0" y="366.5" font-size="15.4" fill="#1a1a1a" font-family="Liberation Sans, sans-serif" textLength="102.5" lengthAdjust="spacingAndGlyphs">Внутренний двор</text>
<text x="994.0" y="413.0" font-size="15.4" fill="#1a1a1a" font-family="Liberation Sans, sans-serif" textLength="49.2" lengthAdjust="spacingAndGlyphs">Пакринг</text>
<polyline points="695.6,663.0 1034.0,564.7" fill="none" stroke="#1a1a1a" stroke-width="0.6" />
<polyline points="691.5,659.8 699.5,666.0" fill="none" stroke="#1a1a1a" stroke-width="0.6" />
<polyline points="692.5,665.5 698.7,660.5" fill="none" stroke="#1a1a1a" stroke-width="0.9" />
<polyline points="1030.0,561.5 1038.0,567.7" fill="none" stroke="#1a1a1a" stroke-width="0.6" />
<polyline points="1031.0,567.0 1037.2,562.2" fill="none" stroke="#1a1a1a" stroke-width="0.9" />
<text x="851.5" y="616.2" font-size="11.5" fill="#1a1a1a" font-family="Liberation Sans, sans-serif" textLength="28.5" lengthAdjust="spacingAndGlyphs" transform="rotate(-16.2 851.5 616.2)">64320</text>
<polyline points="661.0,537.0 721.5,622.0" fill="none" stroke="#4a63b0" stroke-width="0.55" />
<polyline points="726.7,622.5 726.7,638.4 768.0,638.4 768.0,622.5 760.0,622.5" fill="none" stroke="#4a63b0" stroke-width="0.7" />
<polyline points="721.5,622.3 733.0,622.3" fill="none" stroke="#4a63b0" stroke-width="0.7" />
<circle cx="721.5" cy="622.300" r="1.300" fill="#4a63b0"/>
<circle cx="727" cy="622.300" r="1.300" fill="#4a63b0"/>
<circle cx="749" cy="622.300" r="1.300" fill="#4a63b0"/>
<circle cx="661.500" cy="537.500" r="1" fill="#4a63b0"/>
<text x="732.5" y="634.5" font-size="11.5" fill="#3c55a8" font-family="Liberation Sans, sans-serif" textLength="31.0" lengthAdjust="spacingAndGlyphs">+0.000</text>
<ellipse cx="1062" cy="176.700" rx="29.500" ry="12.600" fill="none" stroke="#dedede" stroke-width="3.500"/>
<ellipse cx="1062" cy="176.700" rx="31.300" ry="14.300" fill="none" stroke="#bdbdbd" stroke-width=".4"/>
<ellipse cx="1062" cy="176.700" rx="27.700" ry="10.900" fill="none" stroke="#bdbdbd" stroke-width=".4"/>
<polygon points="1047.0,153.0 1061.7,148.0 1077.5,153.0 1061.5,158.5" fill="#f1f1f1" stroke="#9a9a9a" stroke-width="0.5" stroke-linejoin="round" />
<polygon points="1047.0,153.0 1061.5,158.5 1061.5,179.5 1048.0,174.0" fill="#d9d9d9" stroke="#9a9a9a" stroke-width="0.5" stroke-linejoin="round" />
<polygon points="1061.5,158.5 1077.5,153.0 1077.0,174.0 1061.5,179.5" fill="#e6e6e6" stroke="#9a9a9a" stroke-width="0.5" stroke-linejoin="round" />
<text x="1049.5" y="168.5" font-size="5" fill="#777" font-family="Liberation Sans, sans-serif" textLength="10.5" lengthAdjust="spacingAndGlyphs" transform="rotate(20 1049.5 168.5)">Спереди</text>
<text x="1063.5" y="172.0" font-size="5" fill="#777" font-family="Liberation Sans, sans-serif" textLength="11.5" lengthAdjust="spacingAndGlyphs" transform="rotate(-19 1063.5 172.0)">Справа</text>
<text x="1059.5" y="153.8" font-size="3.2" fill="#999" font-family="Liberation Sans, sans-serif" textLength="5.0" lengthAdjust="spacingAndGlyphs">Верх</text>
<ellipse cx="1049" cy="186" rx="3.500" ry="2" fill="#fff" stroke="#bbb" stroke-width=".5" transform="rotate(-25 1049 186)"/>
<ellipse cx="1086" cy="180" rx="2.500" ry="1.500" fill="#fff" stroke="#bbb" stroke-width=".5"/>
<ellipse cx="1039" cy="168" rx="2" ry="1.300" fill="#fff" stroke="#ccc" stroke-width=".5"/>
<rect x="1086.500" y="199" width="15.800" height="51.700" rx="2" fill="#f1f1f1" stroke="#bdbdbd" stroke-width=".7"/>
<circle cx="1094.500" cy="212.500" r="5" fill="#f7f7f7" stroke="#9a9a9a" stroke-width=".8"/><circle cx="1094.500" cy="212.500" r="2.800" fill="none" stroke="#aaa" stroke-width=".8"/>
<rect x="1091" y="228" width="5.500" height="5" fill="#a9c79a" stroke="#7a9a6a" stroke-width=".5"/><path d="M1095 232l3 3.500" stroke="#888" stroke-width="1"/>
<circle cx="1099" cy="202" r="1.200" fill="none" stroke="#999" stroke-width=".5"/><circle cx="1099" cy="247.500" r="1.200" fill="none" stroke="#999" stroke-width=".5"/>
<path d="M1093.300 221.500h2.400l-1.200 1.500zM1093.300 240h2.400l-1.200 1.500z" fill="#777"/>
</svg>
<div class="abs" style="left:0.0px;top:0.0px;width:1280.0px;height:16.0px;background:#ffffff;"></div>
<div class="abs" style="left:0.0px;top:0.0px;width:326.0px;height:15.5px;background:linear-gradient(#efefef,#e2e2e2);"></div>
<div class="abs" style="left:3.5px;top:3.3px;width:18.3px;height:18.5px;background:linear-gradient(#e6e6e6,#9c9c9c);border:1px solid #7c7c7c;z-index:5"></div>
<svg class="abs" style="left:3.500px;top:3.300px;z-index:6" width="18.300" height="18.500" viewBox="0 0 18.300 18.500"><path d="M3.800 3.500h5c3 0 4 1.800 4 3.600s-1 3-2.800 3.600l3 4.500h-3.300l-2.500-4.300v4.300H3.800z" fill="#2a6aa8"/><path d="M7 5.800h1.800c1.500 0 1.500 2.400 0 2.400H7z" fill="#8fc1ea"/><path d="M14 8.800h2.600l-1.300 1.600z" fill="#222"/></svg>
<svg class="abs" style="left:33px;top:2px" width="12" height="12" viewBox="0 0 12 12"><path d="M1 3h3l1 1h5v2H3l-2 4z" fill="#f4f4f4" stroke="#4a5a6a" stroke-width="1"/><path d="M1 10l2-4h8l-2 4z" fill="#dfe6ee" stroke="#4a5a6a"/></svg>
<svg class="abs" style="left:49px;top:2px" width="12" height="12" viewBox="0 0 12 12"><rect x="1" y="1" width="10" height="10" rx="1" fill="#3d4a5a"/><rect x="3" y="1.5" width="6" height="3.5" fill="#e8edf3"/><rect x="3.5" y="7" width="5" height="4" fill="#c7d0db"/></svg>
<svg class="abs" style="left:65px;top:2px" width="12" height="12" viewBox="0 0 12 12"><path d="M2 4l4-2 4 2v5l-4 2-4-2z" fill="#e1e1e1" stroke="#a9a9a9"/><path d="M7 7h4v4H7z" fill="#cfcfcf" stroke="#a0a0a0" stroke-width=".6"/></svg>
<div class="abs" style="left:80.0px;top:8.0px;width:2.0px;height:2.0px;background:#333;"></div>
<svg class="abs" style="left:88px;top:2px" width="12" height="12" viewBox="0 0 12 12"><path d="M1 5l4-3v2c4 0 6 2 5 6-1-2-2-3-5-3v2z" fill="#e8e8e8" stroke="#555" stroke-width="1"/></svg>
<div class="abs" style="left:104.5px;top:8.0px;width:2.0px;height:2.0px;background:#333;"></div>
<svg class="abs" style="left:112px;top:2px" width="12" height="12" viewBox="0 0 12 12"><path d="M11 5l-4-3v2c-4 0-6 2-5 6 1-2 2-3 5-3v2z" fill="#efefef" stroke="#c4c4c4" stroke-width="1"/></svg>
<div class="abs" style="left:128.5px;top:8.0px;width:2.0px;height:2.0px;background:#777;"></div>
<div class="abs" style="left:135.5px;top:2.0px;width:1.0px;height:12.0px;background:#d0d0d0;"></div>
<svg class="abs" style="left:140px;top:2px" width="12" height="12" viewBox="0 0 12 12"><path d="M1 4h10M1 8h10" stroke="#a8a8a8" stroke-width="2"/><path d="M1 6h10" stroke="#cfcfcf" stroke-width="1"/></svg>
<div class="abs" style="left:157.0px;top:8.0px;width:2.0px;height:2.0px;background:#333;"></div>
<svg class="abs" style="left:164px;top:2px" width="12" height="12" viewBox="0 0 12 12"><path d="M2 10L10 2" stroke="#222" stroke-width="1.3"/><path d="M0.5 8.5l3 3M8.5 .5l3 3" stroke="#222" stroke-width="1.2"/></svg>
<svg class="abs" style="left:180px;top:2px" width="12" height="12" viewBox="0 0 12 12"><circle cx="7" cy="5" r="4" fill="#f2f2f2" stroke="#555"/><path d="M7 3v2.5h2" stroke="#333" fill="none" stroke-width=".9"/><path d="M1 11l3-5" stroke="#333" stroke-width="1.4"/></svg>
<span class="t" style="left:196.5px;top:0.5px;font-size:14px;color:#222;letter-spacing:0.66px;">A</span>
<div class="abs" style="left:211.5px;top:2.0px;width:1.0px;height:12.0px;background:#d0d0d0;"></div>
<svg class="abs" style="left:216px;top:2px" width="12" height="12" viewBox="0 0 12 12"><path d="M1 5l5-3 5 3v5H1z" fill="#e9e9e9" stroke="#555"/><path d="M4 10V7h4v3" fill="#fff" stroke="#555" stroke-width=".8"/></svg>
<div class="abs" style="left:233.0px;top:8.0px;width:2.0px;height:2.0px;background:#333;"></div>
<svg class="abs" style="left:240px;top:2px" width="12" height="12" viewBox="0 0 12 12"><path d="M4 1l4 5-4 5-3-5z" fill="#f0f0f0" stroke="#bdbdbd"/><path d="M8 6l-2-2v4z" fill="#e0a060"/></svg>
<div class="abs" style="left:254.0px;top:0.5px;width:17.0px;height:14.5px;background:#cfe3f7;border:1px solid #6aa7dd"></div>
<svg class="abs" style="left:257px;top:2px" width="12" height="12" viewBox="0 0 12 12"><rect x="0" y="1" width="4" height="3" fill="#2b5f9e"/><rect x="0" y="5" width="4" height="2.5" fill="#2b5f9e"/><rect x="0" y="8.5" width="4" height="2.5" fill="#2b5f9e"/><path d="M6 2.5h6M6 6h6M6 9.5h6" stroke="#3c3c3c" stroke-width="1.2"/></svg>
<svg class="abs" style="left:278px;top:2px" width="12" height="12" viewBox="0 0 12 12"><rect x="1" y="1" width="8" height="6" fill="#f4f4f4" stroke="#666"/><rect x="3" y="4" width="8" height="6" fill="#f4f4f4" stroke="#666"/><path d="M6 7l4 4M10 7l-4 4" stroke="#d11919" stroke-width="1.6"/></svg>
<svg class="abs" style="left:294px;top:2px" width="13" height="12" viewBox="0 0 13 12"><rect x="1" y="1" width="8" height="6" fill="#fafafa" stroke="#444"/><rect x="3.5" y="4.5" width="8" height="6" fill="#fafafa" stroke="#444"/></svg>
<div class="abs" style="left:309.5px;top:8.0px;width:2.0px;height:2.0px;background:#333;"></div>
<svg class="abs" style="left:314px;top:2px" width="12" height="12" viewBox="0 0 12 12"><path d="M2 3h8" stroke="#444" stroke-width="1.2"/><path d="M2 6h8l-4 4z" fill="#444"/></svg>
<span class="t" style="left:505.0px;top:3.0px;font-size:8.6px;color:#222;letter-spacing:-0.31px;">Autodesk Revit 2017 -</span>
<span class="t" style="left:594.5px;top:3.0px;font-size:8.6px;color:#222;letter-spacing:-0.33px;">Запись 27.rvt - 3D вид: 3D копия 1</span>
<div class="abs" style="left:898.0px;top:0.0px;width:306.0px;height:15.5px;background:#ececec;"></div>
<svg class="abs" style="left:900px;top:4px" width="6" height="8"><path d="M1 1l3.5 3L1 7z" fill="#333"/></svg>
<div class="abs" style="left:909.0px;top:1.5px;width:118.0px;height:12.5px;background:#fff;border:1px solid #3c3c3c"></div>
<span class="t" style="left:911.5px;top:3.5px;font-size:7.6px;color:#8a8a8a;letter-spacing:-0.25px;font-style:italic;">Введите ключевое слово/фразу</span>
<svg class="abs" style="left:1030px;top:1px" width="175" height="14" viewBox="0 0 175 14"><g fill="none" stroke="#333" stroke-width="1"><circle cx="4.5" cy="9" r="2.3"/><circle cx="10" cy="9" r="2.3"/><path d="M3 7l1-4h1.5l.5 4M8.5 7l.5-4h1.5l1 4M6.2 7h2"/><circle cx="22" cy="6" r="3.2"/><path d="M18 12h8M20 12l1-3M25 2l-2 2"/><path d="M37 2l1.6 3.4 3.7.5-2.7 2.5.7 3.7-3.3-1.8-3.3 1.8.7-3.7-2.7-2.500 3.7-.5z"/><circle cx="53" cy="5" r="2.8"/><path d="M47.500 12.500c0-3.500 3-4 5.500-4s5.500.5 5.500 4z"/></g><path d="M119 6h4l-2 2.500z" fill="#444"/><path d="M130 3l4 4-4 4h3l2.500-2.700 2.500 2.700h3l-4-4 4-4h-3l-2.500 2.700-2.500-2.700z" fill="#1f6fb5"/><circle cx="158.500" cy="7" r="5" fill="#f7f9fc" stroke="#3a62a8" stroke-width="1.200"/><path d="M168.500 6h3.500l-1.750 2.200z" fill="#444"/></svg>
<span class="t" style="left:1185.7px;top:2.8px;font-size:9px;color:#2a4f9a;font-weight:bold;">?</span>
<span class="t" style="left:1093.0px;top:3.2px;font-size:8.3px;color:#222;letter-spacing:-0.34px;">Вход в службы</span>
<svg class="abs" style="left:1225px;top:2px" width="48" height="12" viewBox="0 0 48 12"><rect x="4.500" y="3.500" width="6" height="6" fill="none" stroke="#222" stroke-width="1"/><path d="M6.500 3.500v-2h6v6h-2" fill="none" stroke="#222" stroke-width="1"/><path d="M35 1.500l8 8M43 1.500l-8 8" stroke="#222" stroke-width="1.100"/></svg>
<div class="abs" style="left:0.0px;top:14.5px;width:1280.0px;height:14.5px;background:linear-gradient(#9a9a9a,#a8a8a8);"></div>
<div class="abs" style="left:0.0px;top:0.0px;width:27.0px;height:28.5px;background:linear-gradient(#ececec,#e0e0e0);"></div>
<span class="t" style="left:37.0px;top:18.8px;font-size:8.4px;color:#1c1c1c;letter-spacing:-0.33px;">Архитектура</span>
<span class="t" style="left:96.0px;top:18.8px;font-size:8.4px;color:#1c1c1c;letter-spacing:-0.20px;">Конструкция</span>
<span class="t" style="left:155.5px;top:18.8px;font-size:8.4px;color:#1c1c1c;letter-spacing:-0.46px;">Системы</span>
<span class="t" style="left:200.5px;top:18.8px;font-size:8.4px;color:#1c1c1c;letter-spacing:-0.53px;">Вставка</span>
<span class="t" style="left:241.5px;top:18.8px;font-size:8.4px;color:#1c1c1c;letter-spacing:-0.22px;">Аннотации</span>
<span class="t" style="left:295.0px;top:18.8px;font-size:8.4px;color:#1c1c1c;letter-spacing:-0.56px;">Анализ</span>
<span class="t" style="left:334.0px;top:18.8px;font-size:8.4px;color:#1c1c1c;letter-spacing:-0.22px;">Формы и генплан</span>
<span class="t" style="left:411.0px;top:18.8px;font-size:8.4px;color:#1c1c1c;letter-spacing:-0.31px;">Совместная работа</span>
<span class="t" style="left:495.5px;top:18.8px;font-size:8.4px;color:#1c1c1c;letter-spacing:-0.40px;">Вид</span>
<span class="t" style="left:522.0px;top:18.8px;font-size:8.4px;color:#1c1c1c;letter-spacing:-0.32px;">Управление</span>
<span class="t" style="left:579.0px;top:18.8px;font-size:8.4px;color:#1c1c1c;letter-spacing:-0.26px;">Надстройки</span>
<div class="abs" style="left:630.5px;top:16.0px;width:119.5px;height:14.0px;background:#d9ead0;border:1px solid #8dcc63;border-bottom:none"></div>
<span class="t" style="left:636.0px;top:18.8px;font-size:8.4px;color:#1c1c1c;letter-spacing:-0.31px;">Изменить | Высотные отметки</span>
<svg class="abs" style="left:764px;top:19px" width="20" height="8"><rect x=".5" y=".5" width="10" height="6" rx="1.500" fill="#f4f4f4" stroke="#333"/><rect x="4" y="3" width="3" height="1.500" fill="#333"/><path d="M13.500 2.500h4l-2 2.500z" fill="#222"/></svg>
<div class="abs" style="left:0.0px;top:29.0px;width:1280.0px;height:64.0px;background:linear-gradient(#d0dbc9 0%,#b4bdaf 48%,#90958d 100%);"></div>
<div class="abs" style="left:0.0px;top:28.5px;width:1280.0px;height:2.0px;background:#86c65a;"></div>
<div class="abs" style="left:0.0px;top:29.0px;width:2.0px;height:64.0px;background:#86c65a;"></div>
<div class="abs" style="left:2.0px;top:30.5px;width:562.0px;height:50.0px;background:#ffffff;"></div>
<div class="abs" style="left:2.0px;top:80.0px;width:562.0px;height:12.5px;background:#ededed;"></div>
<div class="abs" style="left:43.5px;top:31.0px;width:1.0px;height:61.0px;background:#d2d2d2;"></div>
<div class="abs" style="left:84.0px;top:31.0px;width:1.0px;height:61.0px;background:#d2d2d2;"></div>
<div class="abs" style="left:150.0px;top:31.0px;width:1.0px;height:61.0px;background:#d2d2d2;"></div>
<div class="abs" style="left:262.0px;top:31.0px;width:1.0px;height:61.0px;background:#d2d2d2;"></div>
<div class="abs" style="left:422.0px;top:31.0px;width:1.0px;height:61.0px;background:#d2d2d2;"></div>
<div class="abs" style="left:465.5px;top:31.0px;width:1.0px;height:61.0px;background:#d2d2d2;"></div>
<div class="abs" style="left:509.0px;top:31.0px;width:1.0px;height:61.0px;background:#d2d2d2;"></div>
<div class="abs" style="left:564.0px;top:30.5px;width:1.0px;height:62.0px;background:#9aa596;"></div>
<span class="t" style="left:5.9px;top:82.0px;font-size:8.3px;color:#4a4a4a;letter-spacing:-0.42px;">Выбор</span>
<span class="t" style="left:47.8px;top:82.0px;font-size:8.3px;color:#4a4a4a;letter-spacing:-0.41px;">Свойства</span>
<span class="t" style="left:91.7px;top:82.0px;font-size:8.3px;color:#4a4a4a;letter-spacing:-0.37px;">Буфер обмена</span>
<span class="t" style="left:187.5px;top:82.0px;font-size:8.3px;color:#4a4a4a;letter-spacing:-0.20px;">Геометрия</span>
<span class="t" style="left:313.0px;top:82.0px;font-size:8.3px;color:#4a4a4a;letter-spacing:-0.27px;">Редактирование</span>
<span class="t" style="left:437.0px;top:82.0px;font-size:8.3px;color:#4a4a4a;letter-spacing:-0.34px;">Вид</span>
<span class="t" style="left:470.0px;top:82.0px;font-size:8.3px;color:#4a4a4a;letter-spacing:-0.25px;">Измерить</span>
<span class="t" style="left:519.0px;top:82.0px;font-size:8.3px;color:#4a4a4a;letter-spacing:-0.37px;">Создание</span>
<svg class="abs" style="left:33.500px;top:85px" width="6" height="4"><path d="M0 0h5.500l-2.750 3z" fill="#333"/></svg>
<div class="abs" style="left:2.3px;top:31.3px;width:38.7px;height:47.3px;background:#c4ddf5;border:1px solid #86b9e6"></div>
<svg class="abs" style="left:16px;top:35px" width="12" height="18" viewBox="0 0 12 18"><path d="M1.500 1.500v11l2.800-2.300 1.800 4.300 1.900-.8-1.800-4.200h3.600z" fill="#fff" stroke="#333" stroke-width="1"/></svg>
<span class="t" style="left:5.3px;top:58.4px;font-size:8.3px;color:#2a2a2a;letter-spacing:-0.43px;">Изменить</span>
<svg class="abs" style="left:0;top:0" width="570" height="94" viewBox="0 0 570 94"><g stroke="#6e6e6e" stroke-width=".8" fill="#f1f1f1"><rect x="54.500" y="34.500" width="7.500" height="7.500" rx="1"/><rect x="63" y="33.500" width="7.500" height="7.500" rx="1"/><rect x="54.500" y="43.500" width="7.500" height="7.500" rx="1"/><rect x="63" y="43" width="7" height="7.500" rx="1"/></g><rect x="66" y="39.500" width="8" height="12.500" fill="#fafafa" stroke="#555" stroke-width=".8"/><rect x="67.500" y="41" width="4" height="4" fill="#2e5fa0"/><path d="M67.500 47.500h5M67.500 49.500h5" stroke="#666" stroke-width=".7"/><rect x="51" y="55.500" width="25.200" height="22.300" fill="#c4ddf5" stroke="#86b9e6" stroke-width="1"/><rect x="56.500" y="57.500" width="14" height="18.500" fill="#fdfdfd" stroke="#444" stroke-width="1"/><rect x="59" y="59.500" width="6.500" height="6.500" fill="#2e5fa0"/><path d="M66.500 59.500v7" stroke="#999" stroke-width=".8"/><path d="M59 69.500h8M59 72.800h8" stroke="#4a6fa5" stroke-width="1.100"/><path d="M66 68l2.500 1.500-2.500 1.500zM66 71.300l2.500 1.500-2.500 1.500z" fill="#333"/><rect x="100.500" y="35" width="14" height="17" rx="1.500" fill="#c9c9c9" stroke="#7c7c7c" stroke-width=".9"/><rect x="104.500" y="33.500" width="6" height="3" rx="1" fill="#e3e3e3" stroke="#7c7c7c" stroke-width=".8"/><path d="M106.500 40h7l4 4v10h-11z" fill="#f7f7f7" stroke="#6c6c6c" stroke-width=".9"/><path d="M113.500 40v4h4" fill="none" stroke="#6c6c6c" stroke-width=".8"/><rect x="107.800" y="70.200" width="1.800" height="1.800" fill="#333"/><path d="M136 34.500l9 9M145 34.500l-9 9" stroke="#8a8a8a" stroke-width="2"/><circle cx="140.500" cy="39.500" r="1.300" fill="#333"/><path d="M136.500 42l2-1.500M144.500 42l-2-1.500" stroke="#333" stroke-width="1.200"/><path d="M135.500 50.500h5l2 2v7h-7z" fill="#f3f3f3" stroke="#777" stroke-width=".9"/><path d="M139 53h5l2 2v7h-7z" fill="#fafafa" stroke="#777" stroke-width=".9"/><rect x="136" y="66" width="5" height="6" fill="#dfe6ee" stroke="#667" stroke-width=".8"/><path d="M137 77.500c3-1 6-4 9-10l-1.500-1c-3 4-5 6-8 8z" fill="#555"/><path d="M156 34.500h3.500M156 44h3.500M157.700 34.500v9.500" stroke="#444" stroke-width="1.500"/><path d="M158.500 39.300l6.500-4.300M158.500 39.300l6.500 4.300M158.500 39.300h3.500" stroke="#444" stroke-width="1.100" fill="none"/><path d="M159 50.500h6.500v7h-4z" fill="#bcdcf3" stroke="#5b8fc0" stroke-width=".9"/><circle cx="159" cy="58.500" r="3.300" fill="#fff" stroke="#555" stroke-width="1"/><path d="M156.200 60.300a3.300 3.300 0 0 0 5.300.5" stroke="#d77" fill="none" stroke-width=".8"/><path d="M159.500 66.500h6v5.500h-2.500v2.500a3.500 3.500 0 1 1-3.500-3.500z" fill="#7db5e3" stroke="#3f7cb8" stroke-width="1"/><path d="M222.500 34.500h5v3h4.500v6h-9.500z" fill="#f1f1f1" stroke="#777" stroke-width=".9"/><path d="M226.500 40.500h4v3h-4z" fill="#8fbfe8" stroke="#4e84b8" stroke-width=".7"/><path d="M239.500 35l4 1.500 4.500-1.500v8l-4.500 1.500-4-1.500z" fill="#5d9bd3" stroke="#2e5f93" stroke-width=".9"/><path d="M241.500 38.500h3v3h-3z" fill="#9fcbef"/><path d="M223 50.500h3M225.500 50.500v9M227 51.500h5M227 55h6M227 58.500h3" stroke="#6f8fb0" stroke-width="1.300" fill="none"/><rect x="227" y="53.500" width="6" height="3" fill="#777"/><circle cx="241.500" cy="52.500" r="2.300" fill="#fff" stroke="#444" stroke-width=".9"/><rect x="243.500" y="55.500" width="5" height="5" rx="1" fill="#fff" stroke="#444" stroke-width=".9"/><path d="M239.500 56.500c0 2 1 3 2.500 3" fill="none" stroke="#222" stroke-width="1"/><path d="M222.500 66.500v11h10.500v-3h-5z" fill="#3f7fc4"/><path d="M228 74l5.500-7 1.500 1-5.500 7z" fill="#e2a63a" stroke="#8a6a2a" stroke-width=".4"/><path d="M224 66.500v3" stroke="#c33" stroke-width="1"/><path d="M240 68l3-2 3 3-3 2z" fill="#777"/><path d="M244 70l4.500 6" stroke="#8a5f4a" stroke-width="1.800"/><path d="M200.6 38.6h3.400l-1.700 2.200z" fill="#333"/><path d="M209.5 54.8h3.400l-1.700 2.200z" fill="#333"/><path d="M214 71h3.400l-1.700 2.200z" fill="#333"/><path d="M255 54.8h3.400l-1.700 2.200z" fill="#333"/><path d="M268.500 33v20" stroke="#444" stroke-width="1.300"/><rect x="270" y="35" width="7.500" height="7" fill="#bcdcf3" stroke="#4a86bd" stroke-width=".8"/><rect x="270" y="43.500" width="17.500" height="8" fill="#e9e9e9" stroke="#555" stroke-width=".9"/><path d="M295 50.500h18.500M295 47.500c0-3 2-3.500 4-3.500 2.500 0 2.500-2 2.500-4.500 0-3 5-3 5 0 0 2.500 0 4.500 2.500 4.500h4.500" fill="none" stroke="#6f6f6f" stroke-width="1.100"/><path d="M295 49c0-3 2-3.500 4-3.500 3.500 0 3.500-2.500 3.500-5 0-2 3-2 3 0 0 2.500 0 5 3.500 5h4.500" fill="none" stroke="#6aa9dc" stroke-width="1.300"/><path d="M321 36v15.500h3v-7c2.500 0 3.500-2 3.500-4.500s-2-4-6.500-4z" fill="#e6e6e6" stroke="#7a7a7a" stroke-width=".9"/><path d="M329.500 33v20" stroke="#6ab04c" stroke-width="1.300"/><path d="M332 51.500l6-15v15z" fill="#cfe3f4" stroke="#9ab9d6" stroke-width=".8"/><path d="M331 45v7l1.800-1.500 1.200 2.500 1-.5-1.200-2.400h2.200z" fill="#fff" stroke="#555" stroke-width=".6"/><path d="M347.500 36v15.500h3v-7c2.500 0 3.500-2 3.500-4.500s-2-4-6.500-4z" fill="#e6e6e6" stroke="#7a7a7a" stroke-width=".9"/><path d="M356 33v20" stroke="#5a9bd5" stroke-width="1.300"/><path d="M358 51.500l6-15v15z" fill="#cfe3f4" stroke="#9ab9d6" stroke-width=".8"/><path d="M357.500 51l7-8 1.500 1.300-7 8-2 .5z" fill="#e9b542" stroke="#8a6a2a" stroke-width=".5"/><path d="M278.500 56.500l3.500 4h-2.300v4h4v-2.300l4 3.500-4 3.500v-2.300h-4v4h2.300l-3.500 4-3.500-4h2.300v-4h-4v2.300l-4-3.500 4-3.500v2.300h4v-4h-2.300z" fill="#333"/><rect x="276.800" y="65" width="3.400" height="3.400" fill="#fff" stroke="#666" stroke-width=".6"/><circle cx="298.500" cy="60.500" r="3.300" fill="#f6f6f6" stroke="#666" stroke-width=".9"/><circle cx="305.500" cy="69" r="3.400" fill="#bcdcf3" stroke="#5b8fc0" stroke-width=".9"/><circle cx="309" cy="71.500" r="3.400" fill="#bcdcf3" stroke="#5b8fc0" stroke-width=".9"/><path d="M303.500 59.500c3-1 6 0 7 3" fill="none" stroke="#333" stroke-width="1"/><path d="M308.800 62.500h3.400l-1.700 2.400z" fill="#333"/><path d="M333.500 60.200a7.800 7.800 0 1 1-7.500 1.500" fill="none" stroke="#3c3c3c" stroke-width="1.700"/><path d="M327 57.500l6 3-5.500 3.300z" fill="#3c3c3c"/><path d="M347 61.500h9M347 63.500h9" stroke="#777" stroke-width="1.200"/><path d="M353.500 59l3.500 1.500-3.500 1.500z" fill="#333"/><path d="M356 61h5v15.500h-3.500V64.500H356z" fill="#8fc0ea" stroke="#5b8fc0" stroke-width=".6"/><path d="M357.500 70h3.500v6.500h-3.500z" fill="#999"/><path d="M364.500 75v-9M363 67.500l1.500-2.500 1.500 2.500z" stroke="#333" stroke-width=".9" fill="#333"/><rect x="373" y="38.500" width="10" height="3" fill="#6aa9dc"/><circle cx="378" cy="40" r="2.300" fill="#fbe3d6" stroke="#e8a07a" stroke-width=".6"/><rect x="390" y="38.500" width="10" height="3" fill="#6aa9dc"/><rect x="392" y="39.300" width="1.500" height="1.500" fill="#fff"/><rect x="397" y="39.300" width="1.500" height="1.500" fill="#fff"/><circle cx="395" cy="40" r="2.300" fill="#fbe3d6" stroke="#e8a07a" stroke-width=".6"/><path d="M408 36.500h5v4h-5zM413.500 40l3.500 3.500M417 40l-3.500 3.500" fill="none" stroke="#cfcfcf" stroke-width="1"/><rect x="373.3" y="50.3" width="4.400" height="4.400" fill="#d6eaf8" stroke="#4f8ec9" stroke-width=".9"/><rect x="378.8" y="50.3" width="4.400" height="4.400" fill="#d6eaf8" stroke="#4f8ec9" stroke-width=".9"/><rect x="373.3" y="55.8" width="4.400" height="4.400" fill="#d6eaf8" stroke="#4f8ec9" stroke-width=".9"/><rect x="378.8" y="55.8" width="4.400" height="4.400" fill="#d6eaf8" stroke="#4f8ec9" stroke-width=".9"/><rect x="390" y="50.500" width="10" height="10" fill="#bcdcf3" stroke="#555" stroke-width="1"/><rect x="391.500" y="55.500" width="4.500" height="4" fill="#f4f4f4" stroke="#555" stroke-width=".7"/><path d="M407.500 55.500h3M410.500 53.500h5v4h-5z" fill="#f0f0f0" stroke="#555" stroke-width=".8"/><path d="M382.500 66.500v9.500" stroke="#444" stroke-width="1.300"/><path d="M374 72.500h8" stroke="#6aa9dc" stroke-width="2.300"/><path d="M376 68.500h4.500" stroke="#444" stroke-width=".9"/><path d="M379.500 67l2.200 1.500-2.200 1.500z" fill="#333"/><path d="M399.500 66.500v9.500" stroke="#6aa9dc" stroke-width="1.600"/><path d="M391 70.500h7M391 73.500h7" stroke="#555" stroke-width="1.500"/><path d="M393 67.500h4" stroke="#444" stroke-width=".9"/><path d="M396.500 66.200l2 1.400-2 1.400z" fill="#333"/><path d="M408.500 67.500l7.500 7.500M416 67.500l-7.500 7.500" stroke="#e03a3a" stroke-width="2.300"/><path d="M432.300 33.500a3.800 3.800 0 0 1 2.200 7v1.500h-4.400v-1.500a3.800 3.800 0 0 1 2.200-7z" fill="#dcecfb" stroke="#5b8fc0" stroke-width=".9"/><rect x="430.800" y="42.300" width="3" height="1.700" fill="#555"/><circle cx="453.500" cy="40" r="2.800" fill="#f0f0f0" stroke="#d2d2d2"/><circle cx="457.500" cy="37.500" r="2.800" fill="#f0f0f0" stroke="#d2d2d2"/><path d="M428 59l2-3.500 6.500-5.500 1.300 1.300-5.500 6.500z" fill="#a5603f"/><path d="M428 59l2-3.500 2 1.800z" fill="#4a3528"/><path d="M450.500 51.500h11" stroke="#888" stroke-width=".9"/><path d="M450.500 54h11" stroke="#555" stroke-width="1.800"/><path d="M450.500 56.500h11" stroke="#4f8ec9" stroke-width=".9"/><path d="M457.500 57.500h3v2h1.500l-3 3-3-3h1.500z" fill="#2f78c0"/><path d="M427.500 68l3-2 7.500 4.500v4l-3 2-7.500-4.500z" fill="#f2f2f2" stroke="#d0d0d0" stroke-width=".8"/><path d="M441 38h3.400l-1.700 2.200z" fill="#333"/><path d="M441 54h3.400l-1.700 2.200z" fill="#333"/><path d="M475 39.500h18" stroke="#cdcdcd" stroke-width="1"/><path d="M475 39.500l2.500-1.800v3.600zM493 39.500l-2.500-1.800v3.600z" fill="#cdcdcd"/><rect x="474.500" y="45" width="19" height="3.500" rx="1" fill="#dcdcdc"/><path d="M478 73l13-13" stroke="#444" stroke-width="1"/><path d="M474.500 70.500l5.500 5.500M488.500 57l5.500 5.500" stroke="#444" stroke-width="1.200"/><rect x="499.5" y="42.5" width="1.800" height="1.800" fill="#333"/><rect x="499.5" y="66.5" width="1.800" height="1.800" fill="#333"/><path d="M517 33.500h-2.500v19.500h2.500M531.500 33.500h2.500v19.500h-2.500" fill="none" stroke="#d3d3d3" stroke-width="1"/><rect x="518" y="36" width="6.500" height="14" fill="#f4f4f4" stroke="#d0d0d0" stroke-width=".8"/><rect x="524.500" y="42" width="7" height="8" fill="#f4f4f4" stroke="#d0d0d0" stroke-width=".8"/><path d="M542 33.500h-2.500v19.500h2.500M556 33.500h2.500v19.500h-2.500" fill="none" stroke="#555" stroke-width="1.100"/><circle cx="546.500" cy="41" r="4.300" fill="#eef3f8" stroke="#667" stroke-width="1"/><rect x="547" y="42.500" width="8" height="8" rx="1.500" fill="#d9e0d9" stroke="#556" stroke-width="1"/><circle cx="555.500" cy="36.500" r="2.600" fill="#f7c531" stroke="#e8842a" stroke-width="1"/><path d="M514.500 62l5-3.500 14 3v11l-5 3.500-14-3z" fill="#f5f5f5" stroke="#d2d2d2" stroke-width=".9"/><path d="M514.500 62l14 3v11M528.500 65l5-3.500" fill="none" stroke="#d2d2d2" stroke-width=".9"/><rect x="539" y="57" width="4.500" height="4.500" fill="#fff" stroke="#444" stroke-width=".9"/><rect x="553.500" y="57" width="5" height="5" rx="1" fill="#bcdcf3" stroke="#4f8ec9" stroke-width=".9"/><rect x="538.500" y="70.500" width="8" height="5.500" rx="1" fill="#bcdcf3" stroke="#4f8ec9" stroke-width=".9"/><path d="M554.500 68.500l3.300 3.300-3.300 3.300-3.300-3.300z" fill="#bcdcf3" stroke="#4f8ec9" stroke-width=".9"/><path d="M544 59.300h6M541.200 62v5.500M544.500 63l4.500 4.500" stroke="#222" stroke-width="1"/><path d="M549.500 57.800l2.500 1.500-2.500 1.500zM539.700 67l1.500 2.500 1.500-2.500zM550.500 66.500l-.2 3-2.800-.8z" fill="#222"/></svg>
<span class="t" style="left:93.2px;top:58.4px;font-size:8.3px;color:#2a2a2a;letter-spacing:-0.59px;">Вставить</span>
<span class="t" style="left:169.4px;top:34.6px;font-size:8.3px;color:#2a2a2a;letter-spacing:-0.37px;">Врезка</span>
<span class="t" style="left:169.4px;top:51.0px;font-size:8.3px;color:#2a2a2a;letter-spacing:-0.49px;">Вырезать</span>
<span class="t" style="left:169.2px;top:67.0px;font-size:8.3px;color:#2a2a2a;letter-spacing:-0.40px;">Соединить</span>
<div class="abs" style="left:0.0px;top:92.5px;width:1280.0px;height:18.0px;background:#dce8d5;"></div>
<div class="abs" style="left:0.0px;top:109.5px;width:1280.0px;height:1.0px;background:#c9d3c4;"></div>
<span class="t" style="left:5.6px;top:97.3px;font-size:8.2px;color:#1c1c1c;letter-spacing:-0.22px;">Изменить | Высотные отметки</span>
<div class="abs" style="left:137.0px;top:94.0px;width:1.0px;height:15.0px;background:#c2cfbb;"></div>
<svg class="abs" style="left:143px;top:97px" width="9" height="9" viewBox="0 0 9 9"><rect x=".5" y=".5" width="8" height="8" fill="#fff" stroke="#333" stroke-width="1"/><path d="M2 4.500l1.800 2 3.200-4" fill="none" stroke="#222" stroke-width="1"/></svg>
<span class="t" style="left:155.0px;top:97.0px;font-size:8px;color:#1e1e1e;letter-spacing:-0.44px;">Выноска</span>
<svg class="abs" style="left:187px;top:97px" width="9" height="9" viewBox="0 0 9 9"><rect x=".5" y=".5" width="8" height="8" fill="#fff" stroke="#333" stroke-width="1"/><path d="M2 4.500l1.800 2 3.200-4" fill="none" stroke="#222" stroke-width="1"/></svg>
<span class="t" style="left:198.5px;top:97.0px;font-size:8px;color:#1e1e1e;letter-spacing:-0.14px;">Полка выноски</span>
<span class="t" style="left:275.0px;top:97.0px;font-size:8px;color:#1e1e1e;letter-spacing:-0.25px;">Относительная база:</span>
<div class="abs" style="left:349.5px;top:95.0px;width:91.0px;height:14.0px;background:#d5d5d5;"></div>
<span class="t" style="left:352.5px;top:96.9px;font-size:8.3px;color:#8e8e8e;letter-spacing:-0.18px;">Текущий уровень</span>
<svg class="abs" style="left:430px;top:100px" width="7" height="5" viewBox="0 0 7 5"><path d="M.8 .8l2.700 2.700 2.700-2.700" fill="none" stroke="#9a9a9a" stroke-width=".9"/></svg>
<span class="t" style="left:457.0px;top:97.0px;font-size:8px;color:#1e1e1e;letter-spacing:0.01px;">Отображать отметки:</span>
<div class="abs" style="left:537.0px;top:95.0px;width:100.0px;height:14.0px;background:#d5d5d5;"></div>
<span class="t" style="left:539.5px;top:96.9px;font-size:8.3px;color:#8e8e8e;letter-spacing:-0.30px;">Фактическая (выбранна</span>
<svg class="abs" style="left:629px;top:100px" width="7" height="5" viewBox="0 0 7 5"><path d="M.8 .8l2.700 2.700 2.700-2.700" fill="none" stroke="#9a9a9a" stroke-width=".9"/></svg>
<span class="t" style="left:655.0px;top:97.0px;font-size:8px;color:#1e1e1e;letter-spacing:-0.07px;">Привязка:</span>
<div class="abs" style="left:693.5px;top:95.0px;width:72.0px;height:14.0px;background:#e6ebe2;"></div>
<span class="t" style="left:697.0px;top:97.0px;font-size:8px;color:#1e1e1e;letter-spacing:-0.26px;">Ось стены</span>
<svg class="abs" style="left:756px;top:100px" width="7" height="5" viewBox="0 0 7 5"><path d="M.8 .8l2.700 2.700 2.700-2.700" fill="none" stroke="#555" stroke-width=".9"/></svg>
<div class="abs" style="left:0.0px;top:109.5px;width:149.0px;height:651.0px;background:#f0f0f0;"></div>
<div class="abs" style="left:0.0px;top:123.0px;width:145.0px;height:620.0px;background:#ffffff;"></div>
<div class="abs" style="left:0.0px;top:124.0px;width:145.0px;height:1.0px;background:#c4c4c4;"></div>
<div class="abs" style="left:145.0px;top:109.5px;width:2.3px;height:651.0px;background:#ebebf0;"></div>
<div class="abs" style="left:147.5px;top:109.5px;width:1.3px;height:651.0px;background:#a2a2a2;"></div>
<div class="abs" style="left:0.0px;top:109.5px;width:145.0px;height:13.4px;background:#c3d1e1;"></div>
<span class="t" style="left:1.0px;top:112.2px;font-size:8.2px;color:#1c1c1c;letter-spacing:-0.50px;">Свойства</span>
<svg class="abs" style="left:136.900px;top:113.200px" width="7" height="7"><path d="M1 1l5 5M6 1l-5 5" stroke="#111" stroke-width="1.400"/></svg>
<div class="abs" style="left:0.0px;top:125.0px;width:145.0px;height:47.0px;background:linear-gradient(#fdfdfd,#f3f3f3);"></div>
<div class="abs" style="left:3.0px;top:127.5px;width:43.0px;height:43.5px;background:#ffffff;border:1px solid #e6e6e6"></div>
<span class="t" style="left:49.0px;top:139.7px;font-size:8.3px;color:#4a4a4a;letter-spacing:-0.24px;">Высотные отметки</span>
<span class="t" style="left:49.0px;top:150.4px;font-size:8.3px;color:#4a4a4a;letter-spacing:-0.31px;">План вниз</span>
<svg class="abs" style="left:138px;top:147.500px" width="6" height="4"><path d="M0 0h5.600l-2.800 3.200z" fill="#333"/></svg>
<div class="abs" style="left:0.0px;top:172.0px;width:146.0px;height:14.7px;background:#f5f5f5;"></div>
<div class="abs" style="left:0.0px;top:172.5px;width:79.5px;height:14.0px;background:#e3e3e3;border:1px solid #d0d0d0"></div>
<span class="t" style="left:2.0px;top:175.4px;font-size:8.3px;color:#111;letter-spacing:-0.45px;">Высотные отметка</span>
<svg class="abs" style="left:70.5px;top:178px" width="7" height="5" viewBox="0 0 7 5"><path d="M.8 .8l2.700 2.700 2.700-2.700" fill="none" stroke="#555" stroke-width=".9"/></svg>
<svg class="abs" style="left:82px;top:175px" width="8" height="8" viewBox="0 0 8 8"><g fill="none" stroke="#555" stroke-width=".8"><rect x=".5" y=".5" width="3" height="3"/><rect x="4.500" y=".5" width="3" height="3"/><rect x=".5" y="4.500" width="3" height="3"/><rect x="4.500" y="4.500" width="3" height="3"/></g></svg>
<span class="t" style="left:92.0px;top:175.4px;font-size:8.3px;color:#111;letter-spacing:-0.26px;">Изменить тип</span>
<div class="abs" style="left:0.0px;top:186.7px;width:146.0px;height:13.3px;background:#dadada;"></div>
<span class="t" style="left:1.5px;top:189.0px;font-size:8.3px;color:#111;letter-spacing:-0.31px;">Зависимости</span>
<svg class="abs" style="left:141px;top:188.7px" width="4" height="6"><path d="M0 2.500l1.500-2 1.500 2zM0 3.500h3v1.500h-3z" fill="#333"/></svg>
<div class="abs" style="left:0.0px;top:212.7px;width:145.0px;height:1.0px;background:#e2e2e2;"></div>
<span class="t" style="left:5.8px;top:202.4px;font-size:8.3px;color:#9a9a9a;letter-spacing:-0.43px;">Относительная ...</span>
<span class="t" style="left:71.0px;top:202.4px;font-size:8.3px;color:#9a9a9a;letter-spacing:-0.14px;">Текущий уровень</span>
<div class="abs" style="left:0.0px;top:213.4px;width:146.0px;height:13.3px;background:#dadada;"></div>
<span class="t" style="left:1.5px;top:215.7px;font-size:8.3px;color:#111;letter-spacing:-0.02px;">Графика</span>
<svg class="abs" style="left:141px;top:215.4px" width="4" height="6"><path d="M0 2.500l1.500-2 1.500 2zM0 3.500h3v1.500h-3z" fill="#333"/></svg>
<div class="abs" style="left:0.0px;top:239.3px;width:145.0px;height:1.0px;background:#e2e2e2;"></div>
<span class="t" style="left:5.8px;top:229.0px;font-size:8.3px;color:#222;letter-spacing:-0.47px;">Выноска</span>
<svg class="abs" style="left:70.500px;top:228.2px" width="7" height="6" viewBox="0 0 7 6"><rect x=".4" y=".4" width="6" height="5" fill="#fff" stroke="#555" stroke-width=".8"/><path d="M1.500 2.800l1.300 1.300 2.400-2.800" fill="none" stroke="#444" stroke-width=".8"/></svg>
<div class="abs" style="left:0.0px;top:252.7px;width:145.0px;height:1.0px;background:#e2e2e2;"></div>
<span class="t" style="left:5.8px;top:242.4px;font-size:8.3px;color:#222;letter-spacing:-0.15px;">Полка выноски</span>
<svg class="abs" style="left:70.500px;top:241.5px" width="7" height="6" viewBox="0 0 7 6"><rect x=".4" y=".4" width="6" height="5" fill="#fff" stroke="#555" stroke-width=".8"/><path d="M1.500 2.800l1.300 1.300 2.400-2.800" fill="none" stroke="#444" stroke-width=".8"/></svg>
<div class="abs" style="left:0.0px;top:253.4px;width:146.0px;height:13.3px;background:#dadada;"></div>
<span class="t" style="left:1.5px;top:255.7px;font-size:8.3px;color:#111;letter-spacing:-0.38px;">Текст</span>
<svg class="abs" style="left:141px;top:255.4px" width="4" height="6"><path d="M0 2.500l1.500-2 1.500 2zM0 3.500h3v1.500h-3z" fill="#333"/></svg>
<div class="abs" style="left:0.0px;top:279.3px;width:145.0px;height:1.0px;background:#e2e2e2;"></div>
<span class="t" style="left:5.8px;top:269.0px;font-size:8.3px;color:#9a9a9a;letter-spacing:-0.15px;">Отображать от...</span>
<span class="t" style="left:71.0px;top:269.0px;font-size:8.3px;color:#9a9a9a;letter-spacing:-0.33px;">Фактическая (вы...</span>
<div class="abs" style="left:0.0px;top:292.7px;width:145.0px;height:1.0px;background:#e2e2e2;"></div>
<span class="t" style="left:5.8px;top:282.3px;font-size:8.3px;color:#9a9a9a;letter-spacing:-0.38px;">Единственное/в...</span>
<span class="t" style="left:71.0px;top:282.3px;font-size:8.3px;color:#9a9a9a;letter-spacing:-0.51px;">0.0</span>
<div class="abs" style="left:0.0px;top:306.0px;width:145.0px;height:1.0px;background:#e2e2e2;"></div>
<span class="t" style="left:5.8px;top:295.7px;font-size:8.3px;color:#111;letter-spacing:-0.37px;">Префикс единст...</span>
<div class="abs" style="left:0.0px;top:319.3px;width:145.0px;height:1.0px;background:#e2e2e2;"></div>
<span class="t" style="left:5.8px;top:309.0px;font-size:8.3px;color:#111;letter-spacing:-0.47px;">Суффикс единст...</span>
<div class="abs" style="left:0.0px;top:332.7px;width:145.0px;height:1.0px;background:#e2e2e2;"></div>
<span class="t" style="left:5.8px;top:322.3px;font-size:8.3px;color:#9a9a9a;letter-spacing:-0.26px;">Нижнее значение</span>
<div class="abs" style="left:0.0px;top:346.0px;width:145.0px;height:1.0px;background:#e2e2e2;"></div>
<span class="t" style="left:5.8px;top:335.7px;font-size:8.3px;color:#9a9a9a;letter-spacing:-0.36px;">Префикс нижне...</span>
<div class="abs" style="left:0.0px;top:359.3px;width:145.0px;height:1.0px;background:#e2e2e2;"></div>
<span class="t" style="left:5.8px;top:349.0px;font-size:8.3px;color:#9a9a9a;letter-spacing:-0.46px;">Суффикс нижне...</span>
<div class="abs" style="left:69.0px;top:200.0px;width:1.0px;height:160.0px;background:#dcdcdc;"></div>
<div class="abs" style="left:139.3px;top:200.0px;width:1.0px;height:160.0px;background:#dcdcdc;"></div>
<div class="abs" style="left:145.0px;top:186.7px;width:1.0px;height:173.3px;background:#dcdcdc;"></div>
<div class="abs" style="left:0.0px;top:360.0px;width:146.0px;height:1.0px;background:#c9c9c9;"></div>
<div class="abs" style="left:69.5px;top:227.3px;width:70.0px;height:13.0px;background:#fff;border:1px solid #444"></div>
<svg class="abs" style="left:70.500px;top:228.200px" width="7" height="6" viewBox="0 0 7 6"><rect x=".4" y=".4" width="6" height="5" fill="#fff" stroke="#555" stroke-width=".8"/><path d="M1.500 2.800l1.300 1.300 2.400-2.800" fill="none" stroke="#444" stroke-width=".8"/></svg>
<div class="abs" style="left:0.0px;top:743.0px;width:146.0px;height:17.0px;background:#f0f0f0;"></div>
<span class="t" style="left:1.0px;top:746.2px;font-size:8.3px;color:#2a6fc0;letter-spacing:-0.23px;">Справка по свойствам</span>
<div class="abs" style="left:93.0px;top:744.0px;width:51.5px;height:13.5px;background:#d6d6d6;"></div>
<span class="t" style="left:99.5px;top:746.2px;font-size:8.3px;color:#9c9c9c;letter-spacing:-0.49px;">Применить</span>
<div class="abs" style="left:1103.3px;top:110.5px;width:10.0px;height:650.0px;background:#f0f0f0;"></div>
<div class="abs" style="left:1113.0px;top:110.5px;width:3.5px;height:650.0px;background:#e4e4e4;"></div>
<div class="abs" style="left:1116.5px;top:110.5px;width:163.5px;height:650.0px;background:#ffffff;"></div>
<div class="abs" style="left:1116.5px;top:109.5px;width:163.5px;height:13.4px;background:#c3d1e1;"></div>
<span class="t" style="left:1118.5px;top:112.2px;font-size:8.2px;color:#111;letter-spacing:-0.27px;">Диспетчер проекта - Запись 27.rvt</span>
<svg class="abs" style="left:1271.500px;top:113.200px" width="7" height="7"><path d="M1 1l5 5M6 1l-5 5" stroke="#111" stroke-width="1.400"/></svg>
<div class="abs" style="left:1116.5px;top:123.5px;width:1.0px;height:624.0px;background:#8a8a8a;"></div>
<div class="abs" style="left:1116.5px;top:123.5px;width:163.5px;height:1.0px;background:#b0b0b0;"></div>
<div class="abs" style="left:1123.5px;top:138.0px;width:1.0px;height:456.0px;background:#e3e3e3;"></div>
<div class="abs" style="left:1132.5px;top:150.0px;width:1.0px;height:230.0px;background:#e9e9e9;"></div>
<span class="t" style="left:1136.0px;top:127.6px;font-size:8.3px;color:#1e1e1e;letter-spacing:-0.39px;">Виды (все)</span>
<svg class="abs" style="left:1120.0px;top:129.2px" width="6" height="6"><rect x=".5" y=".5" width="5" height="5" fill="#fff" stroke="#b4b4b4" stroke-width=".7"/><path d="M1.500 3h3" stroke="#666" stroke-width=".8"/></svg>
<svg class="abs" style="left:1125.800px;top:128.2px" width="8" height="8" viewBox="0 0 8 8"><path d="M1 1h2M1 1v2M7 1H5M7 1v2M1 7h2M1 7V5M7 7H5M7 7V5" stroke="#666" fill="none" stroke-width=".8"/><circle cx="4" cy="4" r="1.500" fill="none" stroke="#666" stroke-width=".8"/></svg>
<span class="t" style="left:1137.6px;top:140.0px;font-size:8.3px;color:#1e1e1e;letter-spacing:-0.45px;">Планы этажей</span>
<svg class="abs" style="left:1129.0px;top:141.6px" width="6" height="6"><rect x=".5" y=".5" width="5" height="5" fill="#fff" stroke="#b4b4b4" stroke-width=".7"/><path d="M1.500 3h3" stroke="#666" stroke-width=".8"/></svg>
<span class="t" style="left:1147.0px;top:152.4px;font-size:8.3px;color:#1e1e1e;letter-spacing:-0.17px;">План кровли</span>
<span class="t" style="left:1147.0px;top:164.8px;font-size:8.3px;color:#1e1e1e;letter-spacing:-0.28px;">План на отм.0,000</span>
<span class="t" style="left:1147.0px;top:177.2px;font-size:8.3px;color:#1e1e1e;letter-spacing:-0.20px;">План на отм.+4,950</span>
<span class="t" style="left:1147.0px;top:189.6px;font-size:8.3px;color:#1e1e1e;letter-spacing:-0.20px;">План на отм.+9,450</span>
<span class="t" style="left:1147.0px;top:202.1px;font-size:8.3px;color:#1e1e1e;letter-spacing:-0.23px;">План на отм.+13,950</span>
<span class="t" style="left:1147.0px;top:214.5px;font-size:8.3px;color:#1e1e1e;letter-spacing:-0.23px;">План на отм.+18,450</span>
<span class="t" style="left:1147.0px;top:226.9px;font-size:8.3px;color:#1e1e1e;letter-spacing:-0.26px;">План на отм.-3,000</span>
<span class="t" style="left:1137.6px;top:239.3px;font-size:8.3px;color:#1e1e1e;letter-spacing:-0.11px;">3D виды</span>
<svg class="abs" style="left:1129.0px;top:241.0px" width="6" height="6"><rect x=".5" y=".5" width="5" height="5" fill="#fff" stroke="#b4b4b4" stroke-width=".7"/><path d="M1.500 3h3" stroke="#666" stroke-width=".8"/></svg>
<span class="t" style="left:1147.0px;top:251.7px;font-size:8.3px;color:#1e1e1e;letter-spacing:-0.55px;">3D</span>
<span class="t" style="left:1147.0px;top:264.1px;font-size:8.3px;color:#1e1e1e;letter-spacing:-0.34px;">3D вид 1</span>
<div class="abs" style="left:1145.0px;top:275.2px;width:50.0px;height:12.0px;background:#e4e4e4;"></div>
<span class="t" style="left:1147.0px;top:276.6px;font-size:8.3px;color:#000;letter-spacing:0.01px;font-weight:bold;">3D копия 1</span>
<span class="t" style="left:1137.6px;top:289.0px;font-size:8.3px;color:#1e1e1e;letter-spacing:-0.38px;">Фасады (Фасад здания)</span>
<svg class="abs" style="left:1129.0px;top:290.6px" width="6" height="6"><rect x=".5" y=".5" width="5" height="5" fill="#fff" stroke="#b4b4b4" stroke-width=".7"/><path d="M1.500 3h3" stroke="#666" stroke-width=".8"/></svg>
<span class="t" style="left:1147.0px;top:301.4px;font-size:8.3px;color:#1e1e1e;letter-spacing:-0.22px;">Восточный</span>
<span class="t" style="left:1147.0px;top:313.8px;font-size:8.3px;color:#1e1e1e;letter-spacing:-0.35px;">Западный</span>
<span class="t" style="left:1147.0px;top:326.2px;font-size:8.3px;color:#1e1e1e;letter-spacing:-0.29px;">Северный</span>
<span class="t" style="left:1147.0px;top:338.7px;font-size:8.3px;color:#1e1e1e;letter-spacing:-0.22px;">Южный</span>
<span class="t" style="left:1137.6px;top:351.1px;font-size:8.3px;color:#1e1e1e;letter-spacing:-0.23px;">Разрезы (Имя вида с номером листа)</span>
<svg class="abs" style="left:1129.0px;top:352.7px" width="6" height="6"><rect x=".5" y=".5" width="5" height="5" fill="#fff" stroke="#b4b4b4" stroke-width=".7"/><path d="M1.500 3h3" stroke="#666" stroke-width=".8"/></svg>
<span class="t" style="left:1147.0px;top:363.5px;font-size:8.3px;color:#1e1e1e;letter-spacing:-1.62px;">1</span>
<span class="t" style="left:1137.6px;top:375.9px;font-size:8.3px;color:#1e1e1e;letter-spacing:-0.28px;">Визуализация</span>
<svg class="abs" style="left:1129.0px;top:377.6px" width="6" height="6"><rect x=".5" y=".5" width="5" height="5" fill="#fff" stroke="#b4b4b4" stroke-width=".7"/><path d="M1.500 3h3" stroke="#666" stroke-width=".8"/></svg>
<span class="t" style="left:1137.6px;top:388.3px;font-size:8.3px;color:#1e1e1e;letter-spacing:-0.17px;">Планы зонирования (Функциональная</span>
<svg class="abs" style="left:1129.0px;top:390.0px" width="6" height="6"><rect x=".5" y=".5" width="5" height="5" fill="#fff" stroke="#b4b4b4" stroke-width=".7"/><path d="M1.500 3h3" stroke="#666" stroke-width=".8"/></svg>
<span class="t" style="left:1136.0px;top:400.7px;font-size:8.3px;color:#1e1e1e;letter-spacing:-0.27px;">Легенды</span>
<svg class="abs" style="left:1120.0px;top:402.4px" width="6" height="6"><rect x=".5" y=".5" width="5" height="5" fill="#fff" stroke="#b4b4b4" stroke-width=".7"/><path d="M1.500 3h3" stroke="#666" stroke-width=".8"/></svg>
<svg class="abs" style="left:1125.800px;top:401.4px" width="8" height="8" viewBox="0 0 8 8"><rect x=".5" y=".5" width="7" height="7" fill="#fff" stroke="#445" stroke-width=".9"/><path d="M.5 2.500h7M3 2.500v5" stroke="#445" stroke-width=".8"/></svg>
<span class="t" style="left:1136.0px;top:413.2px;font-size:8.3px;color:#1e1e1e;letter-spacing:-0.28px;">Ведомости/Спецификации</span>
<svg class="abs" style="left:1120.0px;top:414.8px" width="6" height="6"><rect x=".5" y=".5" width="5" height="5" fill="#fff" stroke="#b4b4b4" stroke-width=".7"/><path d="M1.500 3h3" stroke="#666" stroke-width=".8"/></svg>
<svg class="abs" style="left:1125.800px;top:413.8px" width="8" height="8" viewBox="0 0 8 8"><rect x=".5" y=".5" width="7" height="7" fill="#fff" stroke="#445" stroke-width=".9"/><path d="M.5 2.500h7M.5 5h7" stroke="#445" stroke-width=".8"/></svg>
<span class="t" style="left:1137.6px;top:425.6px;font-size:8.3px;color:#1e1e1e;letter-spacing:-0.31px;">Общая площадь здания</span>
<span class="t" style="left:1137.6px;top:438.0px;font-size:8.3px;color:#1e1e1e;letter-spacing:-0.37px;">Площадь здания</span>
<span class="t" style="left:1137.6px;top:450.4px;font-size:8.3px;color:#1e1e1e;letter-spacing:-0.34px;">Спецификация элементов заполнения</span>
<span class="t" style="left:1137.6px;top:462.8px;font-size:8.3px;color:#1e1e1e;letter-spacing:-0.25px;">Список листов</span>
<span class="t" style="left:1137.6px;top:475.3px;font-size:8.3px;color:#1e1e1e;letter-spacing:-0.19px;">Укрупненные показатели</span>
<span class="t" style="left:1136.0px;top:487.7px;font-size:8.3px;color:#1e1e1e;letter-spacing:-0.36px;">Листы (все)</span>
<svg class="abs" style="left:1120.0px;top:489.3px" width="6" height="6"><rect x=".5" y=".5" width="5" height="5" fill="#fff" stroke="#b4b4b4" stroke-width=".7"/><path d="M1.500 3h3" stroke="#666" stroke-width=".8"/></svg>
<svg class="abs" style="left:1125.800px;top:488.3px" width="8" height="8" viewBox="0 0 8 8"><rect x="1.500" y=".5" width="6" height="6" fill="#fff" stroke="#666" stroke-width=".8"/><rect x=".5" y="1.500" width="6" height="6" fill="#f4f4f4" stroke="#666" stroke-width=".8"/></svg>
<span class="t" style="left:1137.6px;top:500.1px;font-size:8.3px;color:#1e1e1e;letter-spacing:-0.27px;">1 - План этажа</span>
<svg class="abs" style="left:1129.0px;top:501.7px" width="6" height="6"><rect x=".5" y=".5" width="5" height="5" fill="#fff" stroke="#b4b4b4" stroke-width=".7"/><path d="M1.500 3h3" stroke="#666" stroke-width=".8"/></svg>
<span class="t" style="left:1137.6px;top:512.5px;font-size:8.3px;color:#1e1e1e;letter-spacing:-0.19px;">01 - Эскизное предложение</span>
<svg class="abs" style="left:1129.0px;top:514.2px" width="6" height="6"><rect x=".5" y=".5" width="5" height="5" fill="#fff" stroke="#b4b4b4" stroke-width=".7"/><path d="M1.500 3h3" stroke="#666" stroke-width=".8"/></svg>
<span class="t" style="left:1137.6px;top:524.9px;font-size:8.3px;color:#1e1e1e;letter-spacing:-0.45px;">2 - Фасады</span>
<svg class="abs" style="left:1129.0px;top:526.6px" width="6" height="6"><rect x=".5" y=".5" width="5" height="5" fill="#fff" stroke="#b4b4b4" stroke-width=".7"/><path d="M1.500 3h3" stroke="#666" stroke-width=".8"/></svg>
<span class="t" style="left:1137.6px;top:537.3px;font-size:8.3px;color:#1e1e1e;letter-spacing:-0.27px;">3 - Разрез 1-1</span>
<svg class="abs" style="left:1129.0px;top:539.0px" width="6" height="6"><rect x=".5" y=".5" width="5" height="5" fill="#fff" stroke="#b4b4b4" stroke-width=".7"/><path d="M1.500 3h3" stroke="#666" stroke-width=".8"/></svg>
<span class="t" style="left:1137.6px;top:549.8px;font-size:8.3px;color:#1e1e1e;letter-spacing:-0.27px;">4 - Визуализация</span>
<span class="t" style="left:1136.0px;top:562.2px;font-size:8.3px;color:#1e1e1e;letter-spacing:-0.49px;">Семейства</span>
<svg class="abs" style="left:1120.0px;top:563.8px" width="6" height="6"><rect x=".5" y=".5" width="5" height="5" fill="#fff" stroke="#b4b4b4" stroke-width=".7"/><path d="M1.500 3h3" stroke="#666" stroke-width=".8"/></svg>
<svg class="abs" style="left:1125.800px;top:562.8px" width="8" height="8" viewBox="0 0 8 8"><rect x=".5" y=".5" width="7" height="7" fill="#fff" stroke="#555" stroke-width=".9"/><path d="M2 6V2h3v2H2" stroke="#555" fill="none" stroke-width=".8"/></svg>
<span class="t" style="left:1136.0px;top:574.6px;font-size:8.3px;color:#1e1e1e;letter-spacing:-0.11px;">Группы</span>
<svg class="abs" style="left:1120.0px;top:576.2px" width="6" height="6"><rect x=".5" y=".5" width="5" height="5" fill="#fff" stroke="#b4b4b4" stroke-width=".7"/><path d="M1.500 3h3" stroke="#666" stroke-width=".8"/></svg>
<svg class="abs" style="left:1125.800px;top:575.2px" width="8" height="8" viewBox="0 0 8 8"><path d="M1 1h2M1 1v6h2M7 1H5M7 1v6H5" stroke="#555" fill="none" stroke-width=".9"/><circle cx="4" cy="4" r="1.200" fill="#777"/></svg>
<span class="t" style="left:1136.0px;top:587.0px;font-size:8.3px;color:#1e1e1e;letter-spacing:-0.40px;">Связанные файлы Revit</span>
<svg class="abs" style="left:1120.0px;top:588.7px" width="6" height="6"><rect x=".5" y=".5" width="5" height="5" fill="#fff" stroke="#b4b4b4" stroke-width=".7"/><path d="M1.500 3h3" stroke="#666" stroke-width=".8"/></svg>
<svg class="abs" style="left:1125.800px;top:587.7px" width="8" height="8" viewBox="0 0 8 8"><rect x="0" y="2.500" width="8" height="3" rx="1.500" fill="#e8b321"/><rect x="2.500" y="3.500" width="3" height="1" fill="#7a5a10"/></svg>
<div class="abs" style="left:1117.5px;top:747.0px;width:162.5px;height:12.0px;background:#f0f0f0;"></div>
<div class="abs" style="left:1130.0px;top:748.5px;width:97.5px;height:9.0px;background:#cdcdcd;"></div>
<svg class="abs" style="left:1120px;top:749px" width="6" height="8"><path d="M4.500 1l-3 3 3 3" fill="none" stroke="#333" stroke-width="1.100"/></svg>
<svg class="abs" style="left:1272px;top:749px" width="6" height="8"><path d="M1.500 1l3 3-3 3" fill="none" stroke="#333" stroke-width="1.100"/></svg>
<div class="abs" style="left:148.0px;top:109.6px;width:956.0px;height:1.0px;background:#a9a9a9;"></div>
<div class="abs" style="left:149.0px;top:745.5px;width:258.0px;height:14.0px;background:#ffffff;"></div>
<div class="abs" style="left:407.0px;top:746.5px;width:696.3px;height:13.0px;background:#f0f0f0;"></div>
<div class="abs" style="left:407.0px;top:746.5px;width:1.0px;height:13.0px;background:#dddddd;"></div>
<div class="abs" style="left:744.0px;top:747.5px;width:12.5px;height:9.5px;background:#cdcdcd;"></div>
<svg class="abs" style="left:1093px;top:748.500px" width="6" height="8"><path d="M1.500 1l3 3-3 3" fill="none" stroke="#333" stroke-width="1.100"/></svg>
<svg class="abs" style="left:1104.500px;top:737.500px" width="8" height="6"><path d="M1 1.500l3 3 3-3" fill="none" stroke="#333" stroke-width="1.100"/></svg>
<svg class="abs" style="left:1104.500px;top:114.500px" width="8" height="6"><path d="M1 4.500l3-3 3 3" fill="none" stroke="#333" stroke-width="1.200"/></svg>
<div class="abs" style="left:1103.3px;top:422.0px;width:9.7px;height:12.5px;background:#cdcdcd;"></div>
<div class="abs" style="left:1103.3px;top:746.5px;width:10.0px;height:13.0px;background:#f0f0f0;"></div>
<svg class="abs" style="left:1079px;top:113px" width="22" height="8" viewBox="0 0 22 8"><rect x=".5" y="3.500" width="5" height="2" fill="#999"/><rect x="8.500" y=".8" width="5" height="5" fill="none" stroke="#777" stroke-width="1"/><rect x="10" y="3" width="2" height="4" fill="#777"/><path d="M16.500 1.500h1.500M19.500 1.500h1.500M16.500 3.800h1.500M19.500 3.800h1.500M16.500 6h1.500M19.500 6h1.500" stroke="#777" stroke-width="1.100"/></svg>
<span class="t" style="left:164.0px;top:746.4px;font-size:8.3px;color:#111;letter-spacing:-0.27px;">1 : 500</span>
<svg class="abs" style="left:203.5px;top:747.500px" width="8" height="7" viewBox="0 0 8 7"><rect x=".8" y="1" width="5.500" height="4.500" rx="1" fill="#eef2f6" stroke="#777" stroke-width=".7" opacity=".8"/><rect x="3" y="2.500" width="3.500" height="2.500" fill="#777" opacity=".8"/></svg>
<svg class="abs" style="left:218.2px;top:747.500px" width="8" height="7" viewBox="0 0 8 7"><rect x=".8" y="1" width="5.500" height="4.500" rx="1" fill="#eef2f6" stroke="#3b7fc4" stroke-width=".7" opacity=".8"/><rect x="3" y="2.500" width="3.500" height="2.500" fill="#3b7fc4" opacity=".8"/></svg>
<svg class="abs" style="left:232.8px;top:747.500px" width="8" height="7" viewBox="0 0 8 7"><rect x=".8" y="1" width="5.500" height="4.500" rx="1" fill="#eef2f6" stroke="#e07b39" stroke-width=".7" opacity=".8"/><rect x="3" y="2.500" width="3.500" height="2.500" fill="#e07b39" opacity=".8"/></svg>
<svg class="abs" style="left:247.4px;top:747.500px" width="8" height="7" viewBox="0 0 8 7"><rect x=".8" y="1" width="5.500" height="4.500" rx="1" fill="#eef2f6" stroke="#7aa7d6" stroke-width=".7" opacity=".8"/><rect x="3" y="2.500" width="3.500" height="2.500" fill="#7aa7d6" opacity=".8"/></svg>
<svg class="abs" style="left:262.1px;top:747.500px" width="8" height="7" viewBox="0 0 8 7"><rect x=".8" y="1" width="5.500" height="4.500" rx="1" fill="#eef2f6" stroke="#7a9cc0" stroke-width=".7" opacity=".8"/><rect x="3" y="2.500" width="3.500" height="2.500" fill="#7a9cc0" opacity=".8"/></svg>
<svg class="abs" style="left:276.8px;top:747.500px" width="8" height="7" viewBox="0 0 8 7"><rect x=".8" y="1" width="5.500" height="4.500" rx="1" fill="#eef2f6" stroke="#c0392b" stroke-width=".7" opacity=".8"/><rect x="3" y="2.500" width="3.500" height="2.500" fill="#c0392b" opacity=".8"/></svg>
<svg class="abs" style="left:291.4px;top:747.500px" width="8" height="7" viewBox="0 0 8 7"><rect x=".8" y="1" width="5.500" height="4.500" rx="1" fill="#eef2f6" stroke="#6a8fb8" stroke-width=".7" opacity=".8"/><rect x="3" y="2.500" width="3.500" height="2.500" fill="#6a8fb8" opacity=".8"/></svg>
<svg class="abs" style="left:306.1px;top:747.500px" width="8" height="7" viewBox="0 0 8 7"><rect x=".8" y="1" width="5.500" height="4.500" rx="1" fill="#eef2f6" stroke="#c58a3a" stroke-width=".7" opacity=".8"/><rect x="3" y="2.500" width="3.500" height="2.500" fill="#c58a3a" opacity=".8"/></svg>
<svg class="abs" style="left:320.7px;top:747.500px" width="8" height="7" viewBox="0 0 8 7"><rect x=".8" y="1" width="5.500" height="4.500" rx="1" fill="#eef2f6" stroke="#666" stroke-width=".7" opacity=".8"/><rect x="3" y="2.500" width="3.500" height="2.500" fill="#666" opacity=".8"/></svg>
<svg class="abs" style="left:335.4px;top:747.500px" width="8" height="7" viewBox="0 0 8 7"><rect x=".8" y="1" width="5.500" height="4.500" rx="1" fill="#eef2f6" stroke="#4a90d9" stroke-width=".7" opacity=".8"/><rect x="3" y="2.500" width="3.500" height="2.500" fill="#4a90d9" opacity=".8"/></svg>
<svg class="abs" style="left:350.0px;top:747.500px" width="8" height="7" viewBox="0 0 8 7"><rect x=".8" y="1" width="5.500" height="4.500" rx="1" fill="#eef2f6" stroke="#555" stroke-width=".7" opacity=".8"/><rect x="3" y="2.500" width="3.500" height="2.500" fill="#555" opacity=".8"/></svg>
<svg class="abs" style="left:364.6px;top:747.500px" width="8" height="7" viewBox="0 0 8 7"><rect x=".8" y="1" width="5.500" height="4.500" rx="1" fill="#eef2f6" stroke="#666" stroke-width=".7" opacity=".8"/><rect x="3" y="2.500" width="3.500" height="2.500" fill="#666" opacity=".8"/></svg>
<svg class="abs" style="left:379.3px;top:747.500px" width="8" height="7" viewBox="0 0 8 7"><rect x=".8" y="1" width="5.500" height="4.500" rx="1" fill="#eef2f6" stroke="#666" stroke-width=".7" opacity=".8"/><rect x="3" y="2.500" width="3.500" height="2.500" fill="#666" opacity=".8"/></svg>
<svg class="abs" style="left:394.0px;top:747.500px" width="8" height="7" viewBox="0 0 8 7"><rect x=".8" y="1" width="5.500" height="4.500" rx="1" fill="#eef2f6" stroke="#666" stroke-width=".7" opacity=".8"/><rect x="3" y="2.500" width="3.500" height="2.500" fill="#666" opacity=".8"/></svg>
<svg class="abs" style="left:401.500px;top:747.500px" width="6" height="8"><path d="M4.500 1l-3 3 3 3" fill="none" stroke="#222" stroke-width="1.100"/></svg>
<div class="abs" style="left:0.0px;top:759.5px;width:1280.0px;height:14.5px;background:linear-gradient(#dedede,#c4c4c4);"></div>
<div class="abs" style="left:0.0px;top:759.5px;width:1280.0px;height:1.0px;background:#9c9c9c;"></div>
<div class="abs" style="left:0.0px;top:773.0px;width:1280.0px;height:1.0px;background:#8a8a8a;"></div>
<span class="t" style="left:1.0px;top:762.7px;font-size:8.3px;color:#111;letter-spacing:-0.32px;">Набор смещения</span>
<svg class="abs" style="left:643px;top:763px" width="9" height="8"><path d="M1 7l2-5 2 3 1-2 2 4" fill="none" stroke="#888" stroke-width=".9"/></svg>
<div class="abs" style="left:657.5px;top:761.5px;width:133.0px;height:11.5px;background:#ffffff;border:1px solid #d8d8d8"></div>
<svg class="abs" style="left:783px;top:765.5px" width="7" height="5" viewBox="0 0 7 5"><path d="M.8 .8l2.700 2.700 2.700-2.700" fill="none" stroke="#999" stroke-width=".9"/></svg>
<svg class="abs" style="left:794px;top:763px" width="8" height="8"><path d="M1 7l3-6 1 4 2 2z" fill="none" stroke="#aaa" stroke-width=".9"/></svg>
<span class="t" style="left:806.0px;top:762.7px;font-size:8.3px;color:#333;">:0</span>
<svg class="abs" style="left:826px;top:763px" width="8" height="8"><rect x=".5" y=".5" width="6.500" height="6.500" fill="#f4f4f4" stroke="#555" stroke-width=".9"/><path d="M.5 2.500h6.500" stroke="#555"/></svg>
<svg class="abs" style="left:840px;top:763px" width="8" height="8"><rect x=".5" y=".5" width="6" height="5" fill="#bbb" stroke="#888" stroke-width=".9"/></svg>
<div class="abs" style="left:854.0px;top:761.5px;width:102.0px;height:11.5px;background:#ffffff;border:1px solid #d8d8d8"></div>
<span class="t" style="left:856.5px;top:762.7px;font-size:8.3px;color:#9a9a9a;letter-spacing:-0.31px;">Главная модель</span>
<svg class="abs" style="left:946px;top:765.5px" width="7" height="5" viewBox="0 0 7 5"><path d="M.8 .8l2.700 2.700 2.700-2.700" fill="none" stroke="#999" stroke-width=".9"/></svg>
<svg class="abs" style="left:1151px;top:763px" width="8" height="8" viewBox="0 0 8 8"><path d="M1 1.500h5v4.500h-5z" fill="#eef2f8" stroke="#5b7fb5" stroke-width=".8"/><path d="M4 3.500l3 0-1.500 3.500z" fill="#e0a030"/></svg>
<svg class="abs" style="left:1166px;top:763px" width="8" height="8" viewBox="0 0 8 8"><path d="M1 1.500h5v4.500h-5z" fill="#eef2f8" stroke="#5b7fb5" stroke-width=".8"/><path d="M4 3.500l3 0-1.500 3.500z" fill="#c0504d"/></svg>
<svg class="abs" style="left:1181px;top:763px" width="8" height="8" viewBox="0 0 8 8"><path d="M1 1.500h5v4.500h-5z" fill="#eef2f8" stroke="#5b7fb5" stroke-width=".8"/><path d="M4 3.500l3 0-1.500 3.500z" fill="#d08040"/></svg>
<svg class="abs" style="left:1196px;top:763px" width="8" height="8" viewBox="0 0 8 8"><path d="M1 1.500h5v4.500h-5z" fill="#eef2f8" stroke="#5b7fb5" stroke-width=".8"/><path d="M4 3.500l3 0-1.500 3.500z" fill="#c0504d"/></svg>
<svg class="abs" style="left:1211px;top:763px" width="8" height="8" viewBox="0 0 8 8"><path d="M1 1.500h5v4.500h-5z" fill="#eef2f8" stroke="#5b7fb5" stroke-width=".8"/><path d="M4 3.500l3 0-1.500 3.500z" fill="#555"/></svg>
<svg class="abs" style="left:1225px;top:763.500px" width="18" height="8" viewBox="0 0 18 8"><circle cx="3" cy="3.500" r="2.300" fill="none" stroke="#999" stroke-width=".9"/><path d="M8 1h6l-2.300 3v3l-1.400-1v-2z" fill="none" stroke="#666" stroke-width=".9"/></svg>
<span class="t" style="left:1238.5px;top:765.1px;font-size:7px;color:#222;">:1</span>
</body>
</html>
